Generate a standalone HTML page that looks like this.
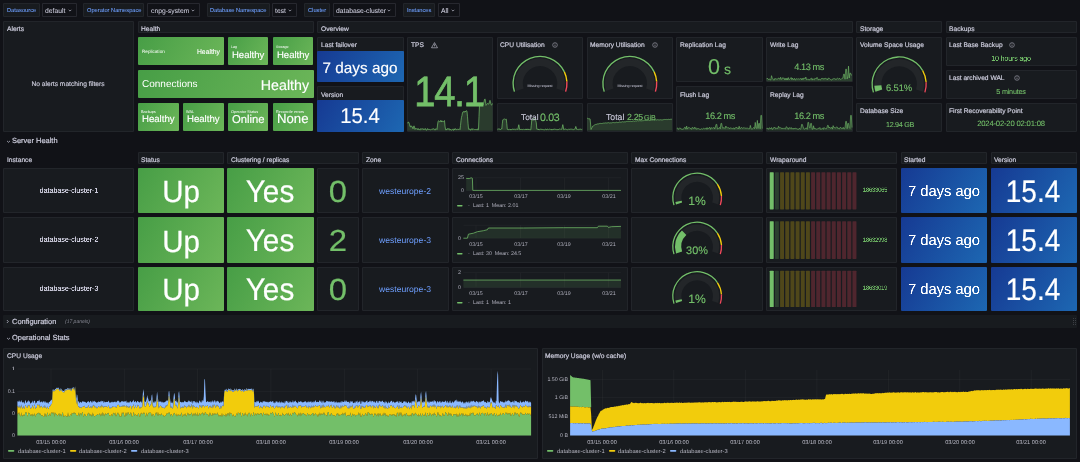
<!DOCTYPE html>
<html><head><meta charset="utf-8"><style>
html,body{margin:0;padding:0;width:1080px;height:462px;overflow:hidden;background:#111217;}
body{position:relative;font-family:"Liberation Sans",sans-serif;-webkit-font-smoothing:antialiased;}
#root{position:absolute;left:0;top:0;width:1080px;height:462px;will-change:transform;}
.p,.vl,.vd,.t,.s{position:absolute;box-sizing:border-box;}
.p{background:#181b1f;border:1px solid rgba(204,204,220,0.06);border-radius:1px;}
.vl{background:#181b1f;border:1px solid rgba(204,204,220,0.06);border-radius:1px;}
.vd{background:#111217;border:1px solid rgba(204,204,220,0.12);border-radius:1px;}
.t{white-space:nowrap;line-height:1;text-rendering:geometricPrecision;}
.s{overflow:visible;}
</style></head><body>
<div id="root"><div class="vl" style="left:3px;top:3px;width:36.7px;height:14px;"></div><div class="t" style="left:6.7px;top:6.52px;font-size:22.8px;color:#6e9fff;transform:scale(0.25,0.25);transform-origin:0 0;-webkit-text-stroke:0.32px #6e9fff;">Datasource</div><div class="vd" style="left:41.5px;top:3px;width:35.1px;height:14px;"></div><div class="t" style="left:44.9px;top:6.59px;font-size:27px;color:#ccccdc;transform:scale(0.25,0.25);transform-origin:0 0;-webkit-text-stroke:0.2px #ccccdc;">default</div><svg class="s" style="left:67.6px;top:8.5px;" width="4" height="3" viewBox="0 0 4 3"><path d="M0.7 0.8 L2 2.1 L3.3 0.8" fill="none" stroke="#ccccdc" stroke-width="0.65"/></svg><div class="vl" style="left:83.3px;top:3px;width:61.1px;height:14px;"></div><div class="t" style="left:87px;top:6.52px;font-size:22.8px;color:#6e9fff;transform:scale(0.25,0.25);transform-origin:0 0;-webkit-text-stroke:0.32px #6e9fff;">Operator Namespace</div><div class="vd" style="left:147.4px;top:3px;width:52.3px;height:14px;"></div><div class="t" style="left:150.8px;top:6.59px;font-size:27px;color:#ccccdc;transform:scale(0.25,0.25);transform-origin:0 0;-webkit-text-stroke:0.2px #ccccdc;">cnpg-system</div><svg class="s" style="left:190.7px;top:8.5px;" width="4" height="3" viewBox="0 0 4 3"><path d="M0.7 0.8 L2 2.1 L3.3 0.8" fill="none" stroke="#ccccdc" stroke-width="0.65"/></svg><div class="vl" style="left:206.7px;top:3px;width:62.9px;height:14px;"></div><div class="t" style="left:210.4px;top:6.52px;font-size:22.8px;color:#6e9fff;transform:scale(0.25,0.25);transform-origin:0 0;-webkit-text-stroke:0.32px #6e9fff;">Database Namespace</div><div class="vd" style="left:271.6px;top:3px;width:25.7px;height:14px;"></div><div class="t" style="left:275px;top:6.59px;font-size:27px;color:#ccccdc;transform:scale(0.25,0.25);transform-origin:0 0;-webkit-text-stroke:0.2px #ccccdc;">test</div><svg class="s" style="left:288.3px;top:8.5px;" width="4" height="3" viewBox="0 0 4 3"><path d="M0.7 0.8 L2 2.1 L3.3 0.8" fill="none" stroke="#ccccdc" stroke-width="0.65"/></svg><div class="vl" style="left:304.2px;top:3px;width:26.3px;height:14px;"></div><div class="t" style="left:307.9px;top:6.52px;font-size:22.8px;color:#6e9fff;transform:scale(0.25,0.25);transform-origin:0 0;-webkit-text-stroke:0.32px #6e9fff;">Cluster</div><div class="vd" style="left:332.5px;top:3px;width:63.8px;height:14px;"></div><div class="t" style="left:335.9px;top:6.59px;font-size:27px;color:#ccccdc;transform:scale(0.25,0.25);transform-origin:0 0;-webkit-text-stroke:0.2px #ccccdc;">database-cluster</div><svg class="s" style="left:387.3px;top:8.5px;" width="4" height="3" viewBox="0 0 4 3"><path d="M0.7 0.8 L2 2.1 L3.3 0.8" fill="none" stroke="#ccccdc" stroke-width="0.65"/></svg><div class="vl" style="left:403.3px;top:3px;width:32.2px;height:14px;"></div><div class="t" style="left:407px;top:6.52px;font-size:22.8px;color:#6e9fff;transform:scale(0.25,0.25);transform-origin:0 0;-webkit-text-stroke:0.32px #6e9fff;">Instances</div><div class="vd" style="left:437.5px;top:3px;width:22px;height:14px;"></div><div class="t" style="left:440.9px;top:6.59px;font-size:27px;color:#ccccdc;transform:scale(0.25,0.25);transform-origin:0 0;-webkit-text-stroke:0.2px #ccccdc;">All</div><svg class="s" style="left:450.5px;top:8.5px;" width="4" height="3" viewBox="0 0 4 3"><path d="M0.7 0.8 L2 2.1 L3.3 0.8" fill="none" stroke="#ccccdc" stroke-width="0.65"/></svg><div class="p" style="left:3px;top:20.5px;width:131.37px;height:111.1px;"></div><div class="t" style="left:6.6px;top:24.89px;font-size:26.6px;color:#ccccdc;transform:scale(0.25,0.25);transform-origin:0 0;-webkit-text-stroke:0.8px #ccccdc;">Alerts</div><div class="t" style="left:-1132.21px;width:2400px;text-align:center;top:79.64px;font-size:26.6px;color:#ccccdc;transform:scale(0.25,0.25);transform-origin:50% 0;-webkit-text-stroke:0.6px #ccccdc;">No alerts matching filters</div><div class="p" style="left:137.67px;top:20.5px;width:176.26px;height:12.5px;"></div><div class="t" style="left:141.27px;top:24.89px;font-size:26.6px;color:#ccccdc;transform:scale(0.25,0.25);transform-origin:0 0;-webkit-text-stroke:0.8px #ccccdc;">Health</div><div class="p" style="left:317.23px;top:20.5px;width:535.38px;height:12.5px;"></div><div class="t" style="left:320.83px;top:24.89px;font-size:26.6px;color:#ccccdc;transform:scale(0.25,0.25);transform-origin:0 0;-webkit-text-stroke:0.8px #ccccdc;">Overview</div><div class="p" style="left:855.91px;top:20.5px;width:86.48px;height:12.5px;"></div><div class="t" style="left:859.51px;top:24.89px;font-size:26.6px;color:#ccccdc;transform:scale(0.25,0.25);transform-origin:0 0;-webkit-text-stroke:0.8px #ccccdc;">Storage</div><div class="p" style="left:945.69px;top:20.5px;width:131.37px;height:12.5px;"></div><div class="t" style="left:949.29px;top:24.89px;font-size:26.6px;color:#ccccdc;transform:scale(0.25,0.25);transform-origin:0 0;-webkit-text-stroke:0.8px #ccccdc;">Backups</div><div class="p" style="left:137.97px;top:37px;width:85.88px;height:28.1px;background:linear-gradient(120deg,#479e46,#6cb659);border:none;"></div><div class="t" style="left:141.97px;top:49.33px;font-size:18.4px;color:#ffffff;transform:scale(0.25,0.25);transform-origin:0 0;">Replication</div><div class="t" style="left:-2179.75px;width:2400px;text-align:right;top:47.82px;font-size:27.2px;color:#ffffff;transform:scale(0.25,0.25);transform-origin:100% 0;-webkit-text-stroke:0.4px #ffffff;">Healthy</div><div class="p" style="left:228.05px;top:37px;width:40.39px;height:28.1px;background:linear-gradient(120deg,#479e46,#6cb659);border:none;"></div><div class="t" style="left:231.15px;top:44.98px;font-size:14.4px;color:#ffffff;transform:scale(0.25,0.25);transform-origin:0 0;">Lag</div><div class="t" style="left:231.85px;top:49.5px;font-size:38px;color:#ffffff;transform:scale(0.25,0.25);transform-origin:0 0;-webkit-text-stroke:0.6px #ffffff;">Healthy</div><div class="p" style="left:272.94px;top:37px;width:40.39px;height:28.1px;background:linear-gradient(120deg,#479e46,#6cb659);border:none;"></div><div class="t" style="left:276.04px;top:44.98px;font-size:14.4px;color:#ffffff;transform:scale(0.25,0.25);transform-origin:0 0;">Storage</div><div class="t" style="left:276.74px;top:49.5px;font-size:38px;color:#ffffff;transform:scale(0.25,0.25);transform-origin:0 0;-webkit-text-stroke:0.6px #ffffff;">Healthy</div><div class="p" style="left:137.97px;top:69.9px;width:175.66px;height:28.1px;background:linear-gradient(120deg,#479e46,#6cb659);border:none;"></div><div class="t" style="left:141.97px;top:79.3px;font-size:40px;color:#ffffff;transform:scale(0.25,0.25);transform-origin:0 0;">Connections</div><div class="t" style="left:-2091.27px;width:2400px;text-align:right;top:77.98px;font-size:56.8px;color:#ffffff;transform:scale(0.25,0.25);transform-origin:100% 0;-webkit-text-stroke:0.6px #ffffff;">Healthy</div><div class="p" style="left:138.27px;top:102.8px;width:40.39px;height:28px;background:linear-gradient(120deg,#479e46,#6cb659);border:none;"></div><div class="t" style="left:141.37px;top:110.16px;font-size:15.4px;color:#ffffff;transform:scale(0.25,0.25);transform-origin:0 0;">Backups</div><div class="t" style="left:142.07px;top:113.85px;font-size:38.4px;color:#ffffff;transform:scale(0.25,0.25);transform-origin:0 0;-webkit-text-stroke:0.6px #ffffff;">Healthy</div><div class="p" style="left:183.16px;top:102.8px;width:40.39px;height:28px;background:linear-gradient(120deg,#479e46,#6cb659);border:none;"></div><div class="t" style="left:186.26px;top:110.16px;font-size:15.4px;color:#ffffff;transform:scale(0.25,0.25);transform-origin:0 0;">WAL</div><div class="t" style="left:186.96px;top:113.85px;font-size:38.4px;color:#ffffff;transform:scale(0.25,0.25);transform-origin:0 0;-webkit-text-stroke:0.6px #ffffff;">Healthy</div><div class="p" style="left:228.05px;top:102.8px;width:40.39px;height:28px;background:linear-gradient(120deg,#479e46,#6cb659);border:none;"></div><div class="t" style="left:231.15px;top:110.16px;font-size:15.4px;color:#ffffff;transform:scale(0.25,0.25);transform-origin:0 0;">Operator Status</div><div class="t" style="left:231.85px;top:112.99px;font-size:45.2px;color:#ffffff;transform:scale(0.25,0.25);transform-origin:0 0;-webkit-text-stroke:0.6px #ffffff;">Online</div><div class="p" style="left:272.94px;top:102.8px;width:40.39px;height:28px;background:linear-gradient(120deg,#479e46,#6cb659);border:none;"></div><div class="t" style="left:276.04px;top:110.16px;font-size:15.4px;color:#ffffff;transform:scale(0.25,0.25);transform-origin:0 0;">Reconcile errors</div><div class="t" style="left:276.74px;top:112.03px;font-size:52.8px;color:#ffffff;transform:scale(0.25,0.25);transform-origin:0 0;-webkit-text-stroke:0.6px #ffffff;">None</div><div class="p" style="left:317.23px;top:37px;width:86.48px;height:45.35px;"></div><div class="t" style="left:320.83px;top:41.39px;font-size:26.6px;color:#ccccdc;transform:scale(0.25,0.25);transform-origin:0 0;-webkit-text-stroke:0.8px #ccccdc;">Last failover</div><div class="p" style="left:317.23px;top:51.1px;width:86.48px;height:31.25px;background:linear-gradient(120deg,#163a93,#1d67b2);border:none;"></div><div class="t" style="left:-839.93px;width:2400px;text-align:center;top:59.7px;font-size:61.2px;color:#ffffff;transform:scale(0.25,0.25);transform-origin:50% 0;-webkit-text-stroke:0.6px #ffffff;">7 days ago</div><div class="p" style="left:317.23px;top:86.35px;width:86.48px;height:45.25px;"></div><div class="t" style="left:320.83px;top:90.74px;font-size:26.6px;color:#ccccdc;transform:scale(0.25,0.25);transform-origin:0 0;-webkit-text-stroke:0.8px #ccccdc;">Version</div><div class="p" style="left:317.23px;top:100.45px;width:86.48px;height:31.15px;background:linear-gradient(120deg,#163a93,#1d67b2);border:none;"></div><div class="t" style="left:-839.73px;width:2400px;text-align:center;top:105.02px;font-size:85.6px;color:#ffffff;transform:scale(0.2375,0.25);transform-origin:50% 0;-webkit-text-stroke:0.6px #ffffff;">15.4</div><div class="p" style="left:407.01px;top:37px;width:86.48px;height:94.6px;"></div><div class="t" style="left:410.61px;top:41.39px;font-size:26.6px;color:#ccccdc;transform:scale(0.25,0.25);transform-origin:0 0;-webkit-text-stroke:0.8px #ccccdc;">TPS</div><svg class="s" style="left:430.51px;top:41.8px;" width="7" height="6.4" viewBox="0 0 7 6.4"><path d="M3.5 0.6L6.5 5.8H0.5Z" fill="none" stroke="#ccccdc" stroke-width="0.6" stroke-linejoin="round"/><path d="M3.5 2.3V4M3.5 4.6V5" stroke="#ccccdc" stroke-width="0.6"/></svg><svg class="s" style="left:0;top:0" width="1080" height="462"><path d="M407.51 123.27 L408.01 122.22 L408.51 122.03 L409.01 122.95 L409.51 124.24 L410.01 126.58 L410.51 126.93 L411.01 125.69 L411.51 126.98 L412.01 127.28 L412.51 126.91 L413.01 128.85 L413.51 126.69 L414.01 125.84 L414.51 127.05 L415.01 129.43 L415.51 128.61 L416.01 128.24 L416.51 128.91 L417.01 128.57 L417.51 128.74 L418.01 129.88 L418.51 128.69 L419.01 129.04 L419.51 129.61 L420.01 130.14 L420.51 128.65 L421.01 129.37 L421.51 128.93 L422.01 128.65 L422.51 128.96 L423.01 128.59 L423.51 129.55 L424.01 128.83 L424.51 129.48 L425.01 128.6 L425.51 128.72 L426.01 130.13 L426.51 130.07 L427.01 129.93 L427.51 128.59 L428.01 129.56 L428.51 129.22 L429.01 129.82 L429.51 129.45 L430.01 129.68 L430.51 129.75 L431.01 129.34 L431.51 129.35 L432.01 128.78 L432.51 129.19 L433.01 128.76 L433.51 128.9 L434.01 128.66 L434.51 129.25 L435.01 130.17 L435.51 128.92 L436.01 128.75 L436.51 128.86 L437.01 129.48 L437.51 125.07 L438.01 121.82 L438.51 120.7 L439.01 121.17 L439.51 121.69 L440.01 122.09 L440.51 120.66 L441.01 120.42 L441.51 122.04 L442.01 120.76 L442.51 121.46 L443.01 121.93 L443.51 121.67 L444.01 120.82 L444.51 120.63 L445.01 126.12 L445.51 129.09 L446.01 130.13 L446.51 128.93 L447.01 129.64 L447.51 128.66 L448.01 128.49 L448.51 129.35 L449.01 128.48 L449.51 129.73 L450.01 130.15 L450.51 129.22 L451.01 130.26 L451.51 129.97 L452.01 129.6 L452.51 129.25 L453.01 130.07 L453.51 130.29 L454.01 128.81 L454.51 129.82 L455.01 128.67 L455.51 128.79 L456.01 129.74 L456.51 129.6 L457.01 129.5 L457.51 129.29 L458.01 129.39 L458.51 129.46 L459.01 129.36 L459.51 128.8 L460.01 129.59 L460.51 125.46 L461.01 120.67 L461.51 117.27 L462.01 115.49 L462.51 112.61 L463.01 111.76 L463.51 111.59 L464.01 112.43 L464.51 111.58 L465.01 111.16 L465.51 112.04 L466.01 110.84 L466.51 110.69 L467.01 111.59 L467.51 116.74 L468.01 123.19 L468.51 128.98 L469.01 129.57 L469.51 128.93 L470.01 128.87 L470.51 130.16 L471.01 130.09 L471.51 128.98 L472.01 128.47 L472.51 129.75 L473.01 129.38 L473.51 129.13 L474.01 129.62 L474.51 129.54 L475.01 129.64 L475.51 129.54 L476.01 129.13 L476.51 129.66 L477.01 129.52 L477.51 128.81 L478.01 130.15 L478.51 129.18 L479.01 116.63 L479.51 105.14 L480.01 105.23 L480.51 104.11 L481.01 105.06 L481.51 105.08 L482.01 104.56 L482.51 104.01 L483.01 105.02 L483.51 103.25 L484.01 101.85 L484.51 99.57 L485.01 98.91 L485.51 101.16 L486.01 105.4 L486.51 104.84 L487.01 104.03 L487.51 103.36 L488.01 103.89 L488.51 104.04 L489.01 103.98 L489.51 101.5 L490.01 100.36 L490.51 101.75 L491.01 104.19 L491.51 105.12 L492.01 104.69 L492.51 103.49 L492.51 130.8 L407.51 130.8 Z" fill="rgba(115,191,105,0.2)"/><path d="M407.51 123.27 L408.01 122.22 L408.51 122.03 L409.01 122.95 L409.51 124.24 L410.01 126.58 L410.51 126.93 L411.01 125.69 L411.51 126.98 L412.01 127.28 L412.51 126.91 L413.01 128.85 L413.51 126.69 L414.01 125.84 L414.51 127.05 L415.01 129.43 L415.51 128.61 L416.01 128.24 L416.51 128.91 L417.01 128.57 L417.51 128.74 L418.01 129.88 L418.51 128.69 L419.01 129.04 L419.51 129.61 L420.01 130.14 L420.51 128.65 L421.01 129.37 L421.51 128.93 L422.01 128.65 L422.51 128.96 L423.01 128.59 L423.51 129.55 L424.01 128.83 L424.51 129.48 L425.01 128.6 L425.51 128.72 L426.01 130.13 L426.51 130.07 L427.01 129.93 L427.51 128.59 L428.01 129.56 L428.51 129.22 L429.01 129.82 L429.51 129.45 L430.01 129.68 L430.51 129.75 L431.01 129.34 L431.51 129.35 L432.01 128.78 L432.51 129.19 L433.01 128.76 L433.51 128.9 L434.01 128.66 L434.51 129.25 L435.01 130.17 L435.51 128.92 L436.01 128.75 L436.51 128.86 L437.01 129.48 L437.51 125.07 L438.01 121.82 L438.51 120.7 L439.01 121.17 L439.51 121.69 L440.01 122.09 L440.51 120.66 L441.01 120.42 L441.51 122.04 L442.01 120.76 L442.51 121.46 L443.01 121.93 L443.51 121.67 L444.01 120.82 L444.51 120.63 L445.01 126.12 L445.51 129.09 L446.01 130.13 L446.51 128.93 L447.01 129.64 L447.51 128.66 L448.01 128.49 L448.51 129.35 L449.01 128.48 L449.51 129.73 L450.01 130.15 L450.51 129.22 L451.01 130.26 L451.51 129.97 L452.01 129.6 L452.51 129.25 L453.01 130.07 L453.51 130.29 L454.01 128.81 L454.51 129.82 L455.01 128.67 L455.51 128.79 L456.01 129.74 L456.51 129.6 L457.01 129.5 L457.51 129.29 L458.01 129.39 L458.51 129.46 L459.01 129.36 L459.51 128.8 L460.01 129.59 L460.51 125.46 L461.01 120.67 L461.51 117.27 L462.01 115.49 L462.51 112.61 L463.01 111.76 L463.51 111.59 L464.01 112.43 L464.51 111.58 L465.01 111.16 L465.51 112.04 L466.01 110.84 L466.51 110.69 L467.01 111.59 L467.51 116.74 L468.01 123.19 L468.51 128.98 L469.01 129.57 L469.51 128.93 L470.01 128.87 L470.51 130.16 L471.01 130.09 L471.51 128.98 L472.01 128.47 L472.51 129.75 L473.01 129.38 L473.51 129.13 L474.01 129.62 L474.51 129.54 L475.01 129.64 L475.51 129.54 L476.01 129.13 L476.51 129.66 L477.01 129.52 L477.51 128.81 L478.01 130.15 L478.51 129.18 L479.01 116.63 L479.51 105.14 L480.01 105.23 L480.51 104.11 L481.01 105.06 L481.51 105.08 L482.01 104.56 L482.51 104.01 L483.01 105.02 L483.51 103.25 L484.01 101.85 L484.51 99.57 L485.01 98.91 L485.51 101.16 L486.01 105.4 L486.51 104.84 L487.01 104.03 L487.51 103.36 L488.01 103.89 L488.51 104.04 L489.01 103.98 L489.51 101.5 L490.01 100.36 L490.51 101.75 L491.01 104.19 L491.51 105.12 L492.01 104.69 L492.51 103.49" fill="none" stroke="#73bf69" stroke-width="0.7" stroke-linejoin="round"/></svg><div class="t" style="left:-750.95px;width:2400px;text-align:center;top:69.69px;font-size:169.6px;color:#73bf69;transform:scale(0.2250,0.25);transform-origin:50% 0;letter-spacing:-5.2px;-webkit-text-stroke:3px #73bf69;">14.1</div><div class="p" style="left:496.79px;top:37px;width:86.48px;height:61.8px;"></div><div class="t" style="left:500.39px;top:41.39px;font-size:26.6px;color:#ccccdc;transform:scale(0.25,0.25);transform-origin:0 0;-webkit-text-stroke:0.8px #ccccdc;">CPU Utilisation</div><svg class="s" style="left:552.09px;top:42px;" width="6" height="6" viewBox="0 0 6 6"><circle cx="3" cy="3" r="2.35" fill="none" stroke="#ccccdc" stroke-width="0.45"/><path d="M3 2.7V4.3" stroke="#ccccdc" stroke-width="0.5"/><circle cx="3" cy="1.85" r="0.32" fill="#ccccdc"/></svg><svg class="s" style="left:0;top:0" width="1080" height="462"><path d="M516.25 91.03 A25 25 0 1 1 563.81 91.03 L556.39 88.62 A17.2 17.2 0 1 0 523.67 88.62 Z" fill="#232629"/><path d="M513.78 91.83 A27.6 27.6 0 0 1 565 71.55 L563.74 72.14 A26.2 26.2 0 0 0 515.11 91.4 Z" fill="#73bf69"/><path d="M565 71.55 A27.6 27.6 0 0 1 567.58 81.57 L566.18 81.65 A26.2 26.2 0 0 0 563.74 72.14 Z" fill="#f2cc0c"/><path d="M567.58 81.57 A27.6 27.6 0 0 1 566.28 91.83 L564.95 91.4 A26.2 26.2 0 0 0 566.18 81.65 Z" fill="#f2495c"/></svg><div class="t" style="left:-659.97px;width:2400px;text-align:center;top:83.68px;font-size:14.4px;color:#ccccdc;transform:scale(0.25,0.25);transform-origin:50% 0;">Missing request</div><div class="p" style="left:586.57px;top:37px;width:86.48px;height:61.8px;"></div><div class="t" style="left:590.17px;top:41.39px;font-size:26.6px;color:#ccccdc;transform:scale(0.25,0.25);transform-origin:0 0;-webkit-text-stroke:0.8px #ccccdc;">Memory Utilisation</div><svg class="s" style="left:652.07px;top:42px;" width="6" height="6" viewBox="0 0 6 6"><circle cx="3" cy="3" r="2.35" fill="none" stroke="#ccccdc" stroke-width="0.45"/><path d="M3 2.7V4.3" stroke="#ccccdc" stroke-width="0.5"/><circle cx="3" cy="1.85" r="0.32" fill="#ccccdc"/></svg><svg class="s" style="left:0;top:0" width="1080" height="462"><path d="M606.03 91.03 A25 25 0 1 1 653.59 91.03 L646.17 88.62 A17.2 17.2 0 1 0 613.45 88.62 Z" fill="#232629"/><path d="M603.56 91.83 A27.6 27.6 0 0 1 654.78 71.55 L653.52 72.14 A26.2 26.2 0 0 0 604.89 91.4 Z" fill="#73bf69"/><path d="M654.78 71.55 A27.6 27.6 0 0 1 657.36 81.57 L655.96 81.65 A26.2 26.2 0 0 0 653.52 72.14 Z" fill="#f2cc0c"/><path d="M657.36 81.57 A27.6 27.6 0 0 1 656.06 91.83 L654.73 91.4 A26.2 26.2 0 0 0 655.96 81.65 Z" fill="#f2495c"/></svg><div class="t" style="left:-570.19px;width:2400px;text-align:center;top:83.68px;font-size:14.4px;color:#ccccdc;transform:scale(0.25,0.25);transform-origin:50% 0;">Missing request</div><div class="p" style="left:496.79px;top:102.8px;width:86.48px;height:28.8px;"></div><svg class="s" style="left:0;top:0" width="1080" height="462"><path d="M497.29 129.28 L497.79 129.14 L498.29 129.06 L498.79 128.89 L499.29 129.07 L499.79 128.87 L500.29 129.74 L500.79 129.28 L501.29 128.78 L501.79 129.05 L502.29 123.9 L502.79 119.79 L503.29 119.36 L503.79 119.51 L504.29 119.14 L504.79 119.04 L505.29 119.53 L505.79 119.25 L506.29 119.12 L506.79 123.73 L507.29 129.13 L507.79 129.74 L508.29 129.1 L508.79 129.76 L509.29 129.28 L509.79 129.77 L510.29 129.9 L510.79 129.03 L511.29 129.69 L511.79 129.68 L512.29 128.92 L512.79 129.03 L513.29 129.61 L513.79 128.94 L514.29 129.36 L514.79 129.22 L515.29 129.7 L515.79 128.96 L516.29 129.21 L516.79 128.93 L517.29 129.01 L517.79 129.6 L518.29 127.04 L518.79 124.73 L519.29 127.25 L519.79 129.83 L520.29 129.6 L520.79 129.3 L521.29 129.9 L521.79 129.22 L522.29 129.56 L522.79 129.59 L523.29 129.08 L523.79 129.42 L524.29 129.58 L524.79 129.42 L525.29 129.2 L525.79 129.84 L526.29 128.92 L526.79 129.88 L527.29 129.15 L527.79 129.06 L528.29 129.88 L528.79 129.11 L529.29 129.53 L529.79 129.32 L530.29 129.89 L530.79 129.85 L531.29 125.22 L531.79 119.94 L532.29 120.37 L532.79 119.48 L533.29 118.97 L533.79 118.62 L534.29 118.89 L534.79 118.55 L535.29 119.71 L535.79 120.79 L536.29 122.79 L536.79 129.15 L537.29 129.1 L537.79 129.04 L538.29 129.86 L538.79 128.95 L539.29 129.81 L539.79 129.56 L540.29 129.29 L540.79 128.98 L541.29 129.56 L541.79 128.98 L542.29 129.35 L542.79 129.59 L543.29 129.58 L543.79 129.72 L544.29 129.82 L544.79 129.75 L545.29 129.21 L545.79 128.9 L546.29 129.74 L546.79 129.85 L547.29 128.91 L547.79 129.37 L548.29 129.49 L548.79 129.66 L549.29 129.31 L549.79 129.07 L550.29 129.44 L550.79 129.48 L551.29 129.84 L551.79 128.98 L552.29 129.87 L552.79 129.41 L553.29 129.06 L553.79 129.77 L554.29 129.17 L554.79 128.95 L555.29 129.27 L555.79 129.11 L556.29 129.79 L556.79 129.47 L557.29 129.75 L557.79 129.06 L558.29 129.61 L558.79 129.45 L559.29 128.9 L559.79 129.05 L560.29 128.92 L560.79 129.45 L561.29 129.41 L561.79 129.17 L562.29 126.92 L562.79 124.61 L563.29 127 L563.79 129.75 L564.29 129.52 L564.79 128.91 L565.29 128.94 L565.79 129.27 L566.29 129.4 L566.79 129.56 L567.29 129.81 L567.79 129.63 L568.29 129.12 L568.79 129.03 L569.29 129.54 L569.79 129.11 L570.29 129.13 L570.79 129.21 L571.29 129.24 L571.79 129.14 L572.29 129.54 L572.79 129.2 L573.29 129.62 L573.79 129.41 L574.29 129.13 L574.79 129.21 L575.29 128.36 L575.79 126.45 L576.29 128 L576.79 129.32 L577.29 129.89 L577.79 129.35 L578.29 129.65 L578.79 129.23 L579.29 129.44 L579.79 129.08 L580.29 129.25 L580.79 129.1 L581.29 129.55 L581.79 129.26 L582.29 129.16 L582.29 130.4 L497.29 130.4 Z" fill="rgba(115,191,105,0.2)"/><path d="M497.29 129.28 L497.79 129.14 L498.29 129.06 L498.79 128.89 L499.29 129.07 L499.79 128.87 L500.29 129.74 L500.79 129.28 L501.29 128.78 L501.79 129.05 L502.29 123.9 L502.79 119.79 L503.29 119.36 L503.79 119.51 L504.29 119.14 L504.79 119.04 L505.29 119.53 L505.79 119.25 L506.29 119.12 L506.79 123.73 L507.29 129.13 L507.79 129.74 L508.29 129.1 L508.79 129.76 L509.29 129.28 L509.79 129.77 L510.29 129.9 L510.79 129.03 L511.29 129.69 L511.79 129.68 L512.29 128.92 L512.79 129.03 L513.29 129.61 L513.79 128.94 L514.29 129.36 L514.79 129.22 L515.29 129.7 L515.79 128.96 L516.29 129.21 L516.79 128.93 L517.29 129.01 L517.79 129.6 L518.29 127.04 L518.79 124.73 L519.29 127.25 L519.79 129.83 L520.29 129.6 L520.79 129.3 L521.29 129.9 L521.79 129.22 L522.29 129.56 L522.79 129.59 L523.29 129.08 L523.79 129.42 L524.29 129.58 L524.79 129.42 L525.29 129.2 L525.79 129.84 L526.29 128.92 L526.79 129.88 L527.29 129.15 L527.79 129.06 L528.29 129.88 L528.79 129.11 L529.29 129.53 L529.79 129.32 L530.29 129.89 L530.79 129.85 L531.29 125.22 L531.79 119.94 L532.29 120.37 L532.79 119.48 L533.29 118.97 L533.79 118.62 L534.29 118.89 L534.79 118.55 L535.29 119.71 L535.79 120.79 L536.29 122.79 L536.79 129.15 L537.29 129.1 L537.79 129.04 L538.29 129.86 L538.79 128.95 L539.29 129.81 L539.79 129.56 L540.29 129.29 L540.79 128.98 L541.29 129.56 L541.79 128.98 L542.29 129.35 L542.79 129.59 L543.29 129.58 L543.79 129.72 L544.29 129.82 L544.79 129.75 L545.29 129.21 L545.79 128.9 L546.29 129.74 L546.79 129.85 L547.29 128.91 L547.79 129.37 L548.29 129.49 L548.79 129.66 L549.29 129.31 L549.79 129.07 L550.29 129.44 L550.79 129.48 L551.29 129.84 L551.79 128.98 L552.29 129.87 L552.79 129.41 L553.29 129.06 L553.79 129.77 L554.29 129.17 L554.79 128.95 L555.29 129.27 L555.79 129.11 L556.29 129.79 L556.79 129.47 L557.29 129.75 L557.79 129.06 L558.29 129.61 L558.79 129.45 L559.29 128.9 L559.79 129.05 L560.29 128.92 L560.79 129.45 L561.29 129.41 L561.79 129.17 L562.29 126.92 L562.79 124.61 L563.29 127 L563.79 129.75 L564.29 129.52 L564.79 128.91 L565.29 128.94 L565.79 129.27 L566.29 129.4 L566.79 129.56 L567.29 129.81 L567.79 129.63 L568.29 129.12 L568.79 129.03 L569.29 129.54 L569.79 129.11 L570.29 129.13 L570.79 129.21 L571.29 129.24 L571.79 129.14 L572.29 129.54 L572.79 129.2 L573.29 129.62 L573.79 129.41 L574.29 129.13 L574.79 129.21 L575.29 128.36 L575.79 126.45 L576.29 128 L576.79 129.32 L577.29 129.89 L577.79 129.35 L578.29 129.65 L578.79 129.23 L579.29 129.44 L579.79 129.08 L580.29 129.25 L580.79 129.1 L581.29 129.55 L581.79 129.26 L582.29 129.16" fill="none" stroke="#73bf69" stroke-width="0.7" stroke-linejoin="round"/></svg><div class="t" style="left:520.79px;top:113.11px;font-size:33.2px;color:#ccccdc;transform:scale(0.25,0.25);transform-origin:0 0;-webkit-text-stroke:0.4px #ccccdc;">Total</div><div class="t" style="left:539.99px;top:111.95px;font-size:42.4px;color:#73bf69;transform:scale(0.25,0.25);transform-origin:0 0;letter-spacing:-1.2px;-webkit-text-stroke:0.48px #73bf69;">0.03</div><div class="p" style="left:586.57px;top:102.8px;width:86.48px;height:28.8px;"></div><svg class="s" style="left:0;top:0" width="1080" height="462"><path d="M587.07 118.25 L587.57 118.32 L588.07 118.57 L588.57 118.77 L589.07 118.98 L589.57 118.74 L590.07 118.91 L590.57 124.02 L591.07 129.46 L591.57 128.26 L592.07 127.51 L592.57 126.25 L593.07 125.95 L593.57 125.78 L594.07 125.38 L594.57 124.98 L595.07 124.89 L595.57 124.37 L596.07 124.15 L596.57 124.32 L597.07 123.95 L597.57 123.91 L598.07 123.73 L598.57 123.88 L599.07 123.9 L599.57 123.45 L600.07 123.35 L600.57 123.43 L601.07 123.57 L601.57 123.49 L602.07 123.24 L602.57 123.38 L603.07 123.02 L603.57 123.17 L604.07 123.33 L604.57 123.07 L605.07 123.19 L605.57 122.87 L606.07 122.85 L606.57 123.02 L607.07 122.92 L607.57 122.86 L608.07 122.78 L608.57 122.66 L609.07 123.1 L609.57 122.91 L610.07 122.76 L610.57 122.87 L611.07 122.7 L611.57 122.92 L612.07 122.49 L612.57 122.64 L613.07 122.81 L613.57 122.51 L614.07 122.65 L614.57 122.68 L615.07 122.5 L615.57 122.64 L616.07 122.58 L616.57 122.22 L617.07 122.26 L617.57 122.57 L618.07 122.15 L618.57 122.49 L619.07 122.3 L619.57 121.97 L620.07 122.08 L620.57 122.2 L621.07 122.12 L621.57 122.08 L622.07 122.17 L622.57 121.7 L623.07 122.14 L623.57 121.91 L624.07 121.71 L624.57 121.85 L625.07 121.52 L625.57 121.85 L626.07 121.45 L626.57 121.45 L627.07 121.53 L627.57 121.38 L628.07 121.56 L628.57 121.33 L629.07 121.31 L629.57 121.42 L630.07 121.4 L630.57 121.25 L631.07 121.36 L631.57 121.48 L632.07 121.11 L632.57 121.32 L633.07 121.17 L633.57 120.98 L634.07 121.25 L634.57 121.29 L635.07 121.2 L635.57 120.93 L636.07 121.01 L636.57 121.02 L637.07 120.9 L637.57 120.64 L638.07 120.95 L638.57 120.84 L639.07 120.59 L639.57 120.69 L640.07 120.84 L640.57 120.71 L641.07 120.69 L641.57 120.83 L642.07 120.69 L642.57 120.7 L643.07 120.42 L643.57 120.64 L644.07 120.45 L644.57 120.26 L645.07 120.26 L645.57 120.51 L646.07 120.37 L646.57 120.49 L647.07 120.43 L647.57 120.36 L648.07 120.18 L648.57 120.08 L649.07 120.38 L649.57 120.5 L650.07 120.25 L650.57 120.42 L651.07 120.41 L651.57 120.01 L652.07 120.32 L652.57 119.99 L653.07 120.14 L653.57 119.83 L654.07 119.85 L654.57 120.22 L655.07 120.13 L655.57 119.73 L656.07 119.87 L656.57 119.94 L657.07 119.74 L657.57 119.71 L658.07 119.86 L658.57 119.85 L659.07 120.02 L659.57 119.88 L660.07 119.97 L660.57 119.71 L661.07 119.71 L661.57 119.92 L662.07 119.66 L662.57 119.91 L663.07 119.89 L663.57 119.61 L664.07 119.68 L664.57 119.45 L665.07 119.57 L665.57 119.52 L666.07 119.79 L666.57 119.42 L667.07 119.78 L667.57 119.5 L668.07 119.33 L668.57 119.32 L669.07 119.31 L669.57 119.52 L670.07 119.38 L670.57 119.32 L671.07 119.63 L671.57 119.21 L672.07 119.21 L672.07 130.4 L587.07 130.4 Z" fill="rgba(115,191,105,0.2)"/><path d="M587.07 118.25 L587.57 118.32 L588.07 118.57 L588.57 118.77 L589.07 118.98 L589.57 118.74 L590.07 118.91 L590.57 124.02 L591.07 129.46 L591.57 128.26 L592.07 127.51 L592.57 126.25 L593.07 125.95 L593.57 125.78 L594.07 125.38 L594.57 124.98 L595.07 124.89 L595.57 124.37 L596.07 124.15 L596.57 124.32 L597.07 123.95 L597.57 123.91 L598.07 123.73 L598.57 123.88 L599.07 123.9 L599.57 123.45 L600.07 123.35 L600.57 123.43 L601.07 123.57 L601.57 123.49 L602.07 123.24 L602.57 123.38 L603.07 123.02 L603.57 123.17 L604.07 123.33 L604.57 123.07 L605.07 123.19 L605.57 122.87 L606.07 122.85 L606.57 123.02 L607.07 122.92 L607.57 122.86 L608.07 122.78 L608.57 122.66 L609.07 123.1 L609.57 122.91 L610.07 122.76 L610.57 122.87 L611.07 122.7 L611.57 122.92 L612.07 122.49 L612.57 122.64 L613.07 122.81 L613.57 122.51 L614.07 122.65 L614.57 122.68 L615.07 122.5 L615.57 122.64 L616.07 122.58 L616.57 122.22 L617.07 122.26 L617.57 122.57 L618.07 122.15 L618.57 122.49 L619.07 122.3 L619.57 121.97 L620.07 122.08 L620.57 122.2 L621.07 122.12 L621.57 122.08 L622.07 122.17 L622.57 121.7 L623.07 122.14 L623.57 121.91 L624.07 121.71 L624.57 121.85 L625.07 121.52 L625.57 121.85 L626.07 121.45 L626.57 121.45 L627.07 121.53 L627.57 121.38 L628.07 121.56 L628.57 121.33 L629.07 121.31 L629.57 121.42 L630.07 121.4 L630.57 121.25 L631.07 121.36 L631.57 121.48 L632.07 121.11 L632.57 121.32 L633.07 121.17 L633.57 120.98 L634.07 121.25 L634.57 121.29 L635.07 121.2 L635.57 120.93 L636.07 121.01 L636.57 121.02 L637.07 120.9 L637.57 120.64 L638.07 120.95 L638.57 120.84 L639.07 120.59 L639.57 120.69 L640.07 120.84 L640.57 120.71 L641.07 120.69 L641.57 120.83 L642.07 120.69 L642.57 120.7 L643.07 120.42 L643.57 120.64 L644.07 120.45 L644.57 120.26 L645.07 120.26 L645.57 120.51 L646.07 120.37 L646.57 120.49 L647.07 120.43 L647.57 120.36 L648.07 120.18 L648.57 120.08 L649.07 120.38 L649.57 120.5 L650.07 120.25 L650.57 120.42 L651.07 120.41 L651.57 120.01 L652.07 120.32 L652.57 119.99 L653.07 120.14 L653.57 119.83 L654.07 119.85 L654.57 120.22 L655.07 120.13 L655.57 119.73 L656.07 119.87 L656.57 119.94 L657.07 119.74 L657.57 119.71 L658.07 119.86 L658.57 119.85 L659.07 120.02 L659.57 119.88 L660.07 119.97 L660.57 119.71 L661.07 119.71 L661.57 119.92 L662.07 119.66 L662.57 119.91 L663.07 119.89 L663.57 119.61 L664.07 119.68 L664.57 119.45 L665.07 119.57 L665.57 119.52 L666.07 119.79 L666.57 119.42 L667.07 119.78 L667.57 119.5 L668.07 119.33 L668.57 119.32 L669.07 119.31 L669.57 119.52 L670.07 119.38 L670.57 119.32 L671.07 119.63 L671.57 119.21 L672.07 119.21" fill="none" stroke="#73bf69" stroke-width="0.7" stroke-linejoin="round"/></svg><div class="t" style="left:606.07px;top:112.91px;font-size:34.8px;color:#ccccdc;transform:scale(0.25,0.25);transform-origin:0 0;-webkit-text-stroke:0.4px #ccccdc;">Total</div><div class="t" style="left:626.77px;top:112.86px;font-size:35.2px;color:#73bf69;transform:scale(0.25,0.25);transform-origin:0 0;letter-spacing:-1.4px;-webkit-text-stroke:0.48px #73bf69;">2.25</div><div class="t" style="left:644.17px;top:114.26px;font-size:28.8px;color:#73bf69;transform:scale(0.25,0.25);transform-origin:0 0;letter-spacing:-0.4px;-webkit-text-stroke:0.4px #73bf69;">GiB</div><div class="p" style="left:676.35px;top:37px;width:86.48px;height:45.35px;"></div><div class="t" style="left:679.95px;top:41.39px;font-size:26.6px;color:#ccccdc;transform:scale(0.25,0.25);transform-origin:0 0;-webkit-text-stroke:0.8px #ccccdc;">Replication Lag</div><div class="t" style="left:707.75px;top:55.74px;font-size:86px;color:#73bf69;transform:scale(0.25,0.25);transform-origin:0 0;-webkit-text-stroke:0.6px #73bf69;">0</div><div class="t" style="left:723.95px;top:62.23px;font-size:56px;color:#73bf69;transform:scale(0.25,0.25);transform-origin:0 0;-webkit-text-stroke:0.48px #73bf69;">s</div><div class="p" style="left:766.13px;top:37px;width:86.48px;height:45.35px;"></div><div class="t" style="left:769.73px;top:41.39px;font-size:26.6px;color:#ccccdc;transform:scale(0.25,0.25);transform-origin:0 0;-webkit-text-stroke:0.8px #ccccdc;">Write Lag</div><svg class="s" style="left:0;top:0" width="1080" height="462"><path d="M766.63 79.15 L767.33 78.12 L768.03 79.03 L768.73 79.74 L769.43 78.76 L770.13 79.94 L770.83 79.95 L771.53 75.68 L772.23 78.03 L772.93 78.8 L773.63 80.12 L774.33 80.02 L775.03 78.23 L775.73 79.18 L776.43 79.01 L777.13 79.05 L777.83 79.14 L778.53 77.96 L779.23 78.3 L779.93 79.46 L780.63 77.22 L781.33 79.27 L782.03 79.3 L782.73 77.66 L783.43 78.15 L784.13 77.99 L784.83 79.99 L785.53 78.44 L786.23 79.96 L786.93 78.03 L787.63 79.89 L788.33 77.54 L789.03 79.76 L789.73 79.17 L790.43 78.54 L791.13 77.47 L791.83 79.68 L792.53 78.01 L793.23 79.48 L793.93 79.69 L794.63 78.27 L795.33 79.93 L796.03 79.68 L796.73 78.45 L797.43 79.23 L798.13 78.87 L798.83 78.83 L799.53 79.15 L800.23 79.09 L800.93 78.24 L801.63 79.81 L802.33 78.35 L803.03 79.73 L803.73 78.08 L804.43 78.06 L805.13 78.82 L805.83 77.03 L806.53 79.63 L807.23 79.58 L807.93 78.84 L808.63 79.76 L809.33 80 L810.03 78.92 L810.73 78.8 L811.43 78.13 L812.13 80.11 L812.83 78.64 L813.53 79.34 L814.23 79.86 L814.93 78.19 L815.63 78.7 L816.33 78.86 L817.03 77.34 L817.73 78.61 L818.43 80.1 L819.13 79.09 L819.83 79.45 L820.53 79.98 L821.23 78.53 L821.93 78.53 L822.63 78.4 L823.33 79.38 L824.03 78.17 L824.73 79.23 L825.43 78.25 L826.13 78.78 L826.83 78.87 L827.53 79.97 L828.23 77.96 L828.93 78.55 L829.63 78.53 L830.33 79.18 L831.03 79.97 L831.73 80.08 L832.43 79.09 L833.13 78.61 L833.83 78.8 L834.53 78.68 L835.23 78.66 L835.93 79.78 L836.63 78.7 L837.33 78.19 L838.03 78.69 L838.73 79.2 L839.43 78.14 L840.13 79.3 L840.83 79.45 L841.53 79.06 L842.23 78.28 L842.93 78.06 L843.63 74.15 L844.33 74.15 L845.03 79.24 L845.73 69.15 L846.43 69.15 L847.13 79.06 L847.83 76.1 L848.53 66.15 L849.23 78 L849.93 73.15 L850.63 73.15 L851.33 75.15 L852.03 75.15 L852.03 81.15 L766.63 81.15 Z" fill="rgba(115,191,105,0.22)"/><path d="M766.63 79.15 L767.33 78.12 L768.03 79.03 L768.73 79.74 L769.43 78.76 L770.13 79.94 L770.83 79.95 L771.53 75.68 L772.23 78.03 L772.93 78.8 L773.63 80.12 L774.33 80.02 L775.03 78.23 L775.73 79.18 L776.43 79.01 L777.13 79.05 L777.83 79.14 L778.53 77.96 L779.23 78.3 L779.93 79.46 L780.63 77.22 L781.33 79.27 L782.03 79.3 L782.73 77.66 L783.43 78.15 L784.13 77.99 L784.83 79.99 L785.53 78.44 L786.23 79.96 L786.93 78.03 L787.63 79.89 L788.33 77.54 L789.03 79.76 L789.73 79.17 L790.43 78.54 L791.13 77.47 L791.83 79.68 L792.53 78.01 L793.23 79.48 L793.93 79.69 L794.63 78.27 L795.33 79.93 L796.03 79.68 L796.73 78.45 L797.43 79.23 L798.13 78.87 L798.83 78.83 L799.53 79.15 L800.23 79.09 L800.93 78.24 L801.63 79.81 L802.33 78.35 L803.03 79.73 L803.73 78.08 L804.43 78.06 L805.13 78.82 L805.83 77.03 L806.53 79.63 L807.23 79.58 L807.93 78.84 L808.63 79.76 L809.33 80 L810.03 78.92 L810.73 78.8 L811.43 78.13 L812.13 80.11 L812.83 78.64 L813.53 79.34 L814.23 79.86 L814.93 78.19 L815.63 78.7 L816.33 78.86 L817.03 77.34 L817.73 78.61 L818.43 80.1 L819.13 79.09 L819.83 79.45 L820.53 79.98 L821.23 78.53 L821.93 78.53 L822.63 78.4 L823.33 79.38 L824.03 78.17 L824.73 79.23 L825.43 78.25 L826.13 78.78 L826.83 78.87 L827.53 79.97 L828.23 77.96 L828.93 78.55 L829.63 78.53 L830.33 79.18 L831.03 79.97 L831.73 80.08 L832.43 79.09 L833.13 78.61 L833.83 78.8 L834.53 78.68 L835.23 78.66 L835.93 79.78 L836.63 78.7 L837.33 78.19 L838.03 78.69 L838.73 79.2 L839.43 78.14 L840.13 79.3 L840.83 79.45 L841.53 79.06 L842.23 78.28 L842.93 78.06 L843.63 74.15 L844.33 74.15 L845.03 79.24 L845.73 69.15 L846.43 69.15 L847.13 79.06 L847.83 76.1 L848.53 66.15 L849.23 78 L849.93 73.15 L850.63 73.15 L851.33 75.15 L852.03 75.15" fill="none" stroke="#73bf69" stroke-width="0.6" stroke-linejoin="round"/></svg><div class="t" style="left:-390.63px;width:2400px;text-align:center;top:61.75px;font-size:36.8px;color:#73bf69;transform:scale(0.25,0.25);transform-origin:50% 0;letter-spacing:-1.8px;-webkit-text-stroke:0.48px #73bf69;">4.13 ms</div><div class="p" style="left:676.35px;top:86.35px;width:86.48px;height:45.25px;"></div><div class="t" style="left:679.95px;top:90.74px;font-size:26.6px;color:#ccccdc;transform:scale(0.25,0.25);transform-origin:0 0;-webkit-text-stroke:0.8px #ccccdc;">Flush Lag</div><svg class="s" style="left:0;top:0" width="1080" height="462"><path d="M676.85 128.36 L677.55 127.93 L678.25 129.38 L678.95 128.8 L679.65 127.88 L680.35 128.17 L681.05 129.08 L681.75 129.04 L682.45 129.27 L683.15 129.24 L683.85 128.66 L684.55 127.36 L685.25 127.39 L685.95 129.2 L686.65 126.05 L687.35 129.1 L688.05 128.03 L688.75 127.35 L689.45 127.61 L690.15 128.48 L690.85 128.35 L691.55 129.33 L692.25 127.27 L692.95 127.94 L693.65 128.6 L694.35 127.21 L695.05 128.6 L695.75 127.62 L696.45 129.34 L697.15 128.45 L697.85 128.91 L698.55 128.55 L699.25 129.17 L699.95 129.01 L700.65 129.32 L701.35 128.64 L702.05 129.29 L702.75 128.94 L703.45 128.35 L704.15 128.34 L704.85 129.03 L705.55 128.6 L706.25 127.75 L706.95 129.39 L707.65 127.7 L708.35 128.75 L709.05 128.04 L709.75 127.2 L710.45 129.35 L711.15 127.67 L711.85 127.99 L712.55 128.24 L713.25 128.02 L713.95 127.32 L714.65 129.04 L715.35 127.48 L716.05 124.4 L716.75 124.4 L717.45 128.93 L718.15 128.84 L718.85 127.87 L719.55 127.45 L720.25 128.87 L720.95 123.4 L721.65 123.4 L722.35 127.28 L723.05 128.48 L723.75 127.42 L724.45 128.12 L725.15 128.59 L725.85 126.03 L726.55 127.41 L727.25 127.43 L727.95 128.22 L728.65 127.51 L729.35 128.71 L730.05 127.88 L730.75 128.03 L731.45 128.22 L732.15 128.53 L732.85 128.5 L733.55 127.89 L734.25 129.2 L734.95 127.87 L735.65 127.95 L736.35 127.13 L737.05 128.42 L737.75 127.93 L738.45 128.88 L739.15 126.24 L739.85 128.78 L740.55 128.45 L741.25 127.38 L741.95 127.86 L742.65 128.38 L743.35 127.55 L744.05 128.39 L744.75 127.57 L745.45 128.22 L746.15 128.53 L746.85 127.94 L747.55 128.18 L748.25 128.63 L748.95 128.69 L749.65 128.61 L750.35 125.4 L751.05 128.2 L751.75 129.3 L752.45 128.77 L753.15 128.08 L753.85 127.48 L754.55 128.69 L755.25 122.4 L755.95 128.06 L756.65 128.49 L757.35 120.4 L758.05 128.56 L758.75 123.4 L759.45 123.4 L760.15 128.84 L760.85 115.4 L761.55 115.4 L762.25 128.61 L762.25 130.4 L676.85 130.4 Z" fill="rgba(115,191,105,0.22)"/><path d="M676.85 128.36 L677.55 127.93 L678.25 129.38 L678.95 128.8 L679.65 127.88 L680.35 128.17 L681.05 129.08 L681.75 129.04 L682.45 129.27 L683.15 129.24 L683.85 128.66 L684.55 127.36 L685.25 127.39 L685.95 129.2 L686.65 126.05 L687.35 129.1 L688.05 128.03 L688.75 127.35 L689.45 127.61 L690.15 128.48 L690.85 128.35 L691.55 129.33 L692.25 127.27 L692.95 127.94 L693.65 128.6 L694.35 127.21 L695.05 128.6 L695.75 127.62 L696.45 129.34 L697.15 128.45 L697.85 128.91 L698.55 128.55 L699.25 129.17 L699.95 129.01 L700.65 129.32 L701.35 128.64 L702.05 129.29 L702.75 128.94 L703.45 128.35 L704.15 128.34 L704.85 129.03 L705.55 128.6 L706.25 127.75 L706.95 129.39 L707.65 127.7 L708.35 128.75 L709.05 128.04 L709.75 127.2 L710.45 129.35 L711.15 127.67 L711.85 127.99 L712.55 128.24 L713.25 128.02 L713.95 127.32 L714.65 129.04 L715.35 127.48 L716.05 124.4 L716.75 124.4 L717.45 128.93 L718.15 128.84 L718.85 127.87 L719.55 127.45 L720.25 128.87 L720.95 123.4 L721.65 123.4 L722.35 127.28 L723.05 128.48 L723.75 127.42 L724.45 128.12 L725.15 128.59 L725.85 126.03 L726.55 127.41 L727.25 127.43 L727.95 128.22 L728.65 127.51 L729.35 128.71 L730.05 127.88 L730.75 128.03 L731.45 128.22 L732.15 128.53 L732.85 128.5 L733.55 127.89 L734.25 129.2 L734.95 127.87 L735.65 127.95 L736.35 127.13 L737.05 128.42 L737.75 127.93 L738.45 128.88 L739.15 126.24 L739.85 128.78 L740.55 128.45 L741.25 127.38 L741.95 127.86 L742.65 128.38 L743.35 127.55 L744.05 128.39 L744.75 127.57 L745.45 128.22 L746.15 128.53 L746.85 127.94 L747.55 128.18 L748.25 128.63 L748.95 128.69 L749.65 128.61 L750.35 125.4 L751.05 128.2 L751.75 129.3 L752.45 128.77 L753.15 128.08 L753.85 127.48 L754.55 128.69 L755.25 122.4 L755.95 128.06 L756.65 128.49 L757.35 120.4 L758.05 128.56 L758.75 123.4 L759.45 123.4 L760.15 128.84 L760.85 115.4 L761.55 115.4 L762.25 128.61" fill="none" stroke="#73bf69" stroke-width="0.6" stroke-linejoin="round"/></svg><div class="t" style="left:-480.41px;width:2400px;text-align:center;top:111px;font-size:36.8px;color:#73bf69;transform:scale(0.25,0.25);transform-origin:50% 0;letter-spacing:-1.8px;-webkit-text-stroke:0.48px #73bf69;">16.2 ms</div><div class="p" style="left:766.13px;top:86.35px;width:86.48px;height:45.25px;"></div><div class="t" style="left:769.73px;top:90.74px;font-size:26.6px;color:#ccccdc;transform:scale(0.25,0.25);transform-origin:0 0;-webkit-text-stroke:0.8px #ccccdc;">Replay Lag</div><svg class="s" style="left:0;top:0" width="1080" height="462"><path d="M766.63 128.83 L767.33 127.9 L768.03 128.99 L768.73 129.08 L769.43 127.79 L770.13 128.23 L770.83 128.75 L771.53 127.56 L772.23 129.37 L772.93 129.08 L773.63 127.62 L774.33 127.58 L775.03 127.31 L775.73 128.84 L776.43 128.33 L777.13 128.16 L777.83 128.6 L778.53 126.25 L779.23 127.64 L779.93 127.88 L780.63 127.75 L781.33 127.91 L782.03 129.01 L782.73 128.25 L783.43 128.39 L784.13 128.53 L784.83 128.32 L785.53 128.88 L786.23 126.64 L786.93 127.3 L787.63 127.82 L788.33 129.3 L789.03 127.63 L789.73 127.99 L790.43 128.49 L791.13 127.45 L791.83 128.95 L792.53 128.58 L793.23 129.1 L793.93 128.07 L794.63 128.93 L795.33 128.12 L796.03 128.61 L796.73 128.65 L797.43 129.04 L798.13 129.15 L798.83 129.25 L799.53 128.18 L800.23 129.31 L800.93 128.64 L801.63 124.4 L802.33 124.4 L803.03 126.68 L803.73 128.59 L804.43 129.39 L805.13 128.31 L805.83 128.26 L806.53 127.93 L807.23 129.33 L807.93 122.4 L808.63 122.4 L809.33 127.53 L810.03 128.11 L810.73 123.4 L811.43 123.4 L812.13 129.32 L812.83 129.21 L813.53 125.76 L814.23 128.98 L814.93 128.18 L815.63 128.76 L816.33 129.1 L817.03 129.15 L817.73 128.92 L818.43 128.16 L819.13 128.61 L819.83 127.47 L820.53 129.3 L821.23 129.12 L821.93 128.69 L822.63 128.2 L823.33 129.39 L824.03 127.49 L824.73 128.35 L825.43 128.64 L826.13 128.93 L826.83 127.93 L827.53 125.4 L828.23 125.4 L828.93 128.03 L829.63 127.01 L830.33 128.23 L831.03 128.23 L831.73 127.28 L832.43 129.12 L833.13 125.65 L833.83 127.49 L834.53 127.62 L835.23 128.03 L835.93 127.82 L836.63 126.8 L837.33 127.21 L838.03 128.81 L838.73 128.32 L839.43 128.83 L840.13 127.34 L840.83 127.53 L841.53 128.48 L842.23 127.72 L842.93 128.82 L843.63 127.42 L844.33 128.97 L845.03 128.35 L845.73 121.4 L846.43 121.4 L847.13 128.72 L847.83 123.4 L848.53 123.4 L849.23 127.76 L849.93 128.46 L850.63 115.4 L851.33 115.4 L852.03 127.56 L852.03 130.4 L766.63 130.4 Z" fill="rgba(115,191,105,0.22)"/><path d="M766.63 128.83 L767.33 127.9 L768.03 128.99 L768.73 129.08 L769.43 127.79 L770.13 128.23 L770.83 128.75 L771.53 127.56 L772.23 129.37 L772.93 129.08 L773.63 127.62 L774.33 127.58 L775.03 127.31 L775.73 128.84 L776.43 128.33 L777.13 128.16 L777.83 128.6 L778.53 126.25 L779.23 127.64 L779.93 127.88 L780.63 127.75 L781.33 127.91 L782.03 129.01 L782.73 128.25 L783.43 128.39 L784.13 128.53 L784.83 128.32 L785.53 128.88 L786.23 126.64 L786.93 127.3 L787.63 127.82 L788.33 129.3 L789.03 127.63 L789.73 127.99 L790.43 128.49 L791.13 127.45 L791.83 128.95 L792.53 128.58 L793.23 129.1 L793.93 128.07 L794.63 128.93 L795.33 128.12 L796.03 128.61 L796.73 128.65 L797.43 129.04 L798.13 129.15 L798.83 129.25 L799.53 128.18 L800.23 129.31 L800.93 128.64 L801.63 124.4 L802.33 124.4 L803.03 126.68 L803.73 128.59 L804.43 129.39 L805.13 128.31 L805.83 128.26 L806.53 127.93 L807.23 129.33 L807.93 122.4 L808.63 122.4 L809.33 127.53 L810.03 128.11 L810.73 123.4 L811.43 123.4 L812.13 129.32 L812.83 129.21 L813.53 125.76 L814.23 128.98 L814.93 128.18 L815.63 128.76 L816.33 129.1 L817.03 129.15 L817.73 128.92 L818.43 128.16 L819.13 128.61 L819.83 127.47 L820.53 129.3 L821.23 129.12 L821.93 128.69 L822.63 128.2 L823.33 129.39 L824.03 127.49 L824.73 128.35 L825.43 128.64 L826.13 128.93 L826.83 127.93 L827.53 125.4 L828.23 125.4 L828.93 128.03 L829.63 127.01 L830.33 128.23 L831.03 128.23 L831.73 127.28 L832.43 129.12 L833.13 125.65 L833.83 127.49 L834.53 127.62 L835.23 128.03 L835.93 127.82 L836.63 126.8 L837.33 127.21 L838.03 128.81 L838.73 128.32 L839.43 128.83 L840.13 127.34 L840.83 127.53 L841.53 128.48 L842.23 127.72 L842.93 128.82 L843.63 127.42 L844.33 128.97 L845.03 128.35 L845.73 121.4 L846.43 121.4 L847.13 128.72 L847.83 123.4 L848.53 123.4 L849.23 127.76 L849.93 128.46 L850.63 115.4 L851.33 115.4 L852.03 127.56" fill="none" stroke="#73bf69" stroke-width="0.6" stroke-linejoin="round"/></svg><div class="t" style="left:-390.63px;width:2400px;text-align:center;top:111px;font-size:36.8px;color:#73bf69;transform:scale(0.25,0.25);transform-origin:50% 0;letter-spacing:-1.8px;-webkit-text-stroke:0.48px #73bf69;">16.2 ms</div><div class="p" style="left:855.91px;top:37px;width:86.48px;height:61.8px;"></div><div class="t" style="left:859.51px;top:41.39px;font-size:26.6px;color:#ccccdc;transform:scale(0.25,0.25);transform-origin:0 0;-webkit-text-stroke:0.8px #ccccdc;">Volume Space Usage</div><svg class="s" style="left:0;top:0" width="1080" height="462"><path d="M875.47 91.69 A24.9 24.9 0 1 1 922.83 91.69 L916.08 89.5 A17.8 17.8 0 1 0 882.22 89.5 Z" fill="#232629"/><path d="M875.47 91.69 A24.9 24.9 0 0 1 874.31 85.71 L881.39 85.22 A17.8 17.8 0 0 0 882.22 89.5 Z" fill="#73bf69"/><path d="M872.81 92.56 A27.7 27.7 0 0 1 923.25 70.35 L922.12 70.99 A26.4 26.4 0 0 0 874.04 92.16 Z" fill="#73bf69"/><path d="M923.25 70.35 A27.7 27.7 0 0 1 926.8 82.26 L925.5 82.34 A26.4 26.4 0 0 0 922.12 70.99 Z" fill="#f2cc0c"/><path d="M926.8 82.26 A27.7 27.7 0 0 1 925.49 92.56 L924.26 92.16 A26.4 26.4 0 0 0 925.5 82.34 Z" fill="#f2495c"/></svg><div class="t" style="left:-300.85px;width:2400px;text-align:center;top:82.55px;font-size:37.6px;color:#73bf69;transform:scale(0.25,0.25);transform-origin:50% 0;letter-spacing:-0.4px;-webkit-text-stroke:0.6px #73bf69;">6.51%</div><div class="p" style="left:855.91px;top:102.8px;width:86.48px;height:28.8px;"></div><div class="t" style="left:859.51px;top:107.19px;font-size:26.6px;color:#ccccdc;transform:scale(0.25,0.25);transform-origin:0 0;-webkit-text-stroke:0.8px #ccccdc;">Database Size</div><div class="t" style="left:-300.45px;width:2400px;text-align:center;top:121.46px;font-size:28.8px;color:#73bf69;transform:scale(0.25,0.25);transform-origin:50% 0;letter-spacing:-1.2px;-webkit-text-stroke:0.32px #73bf69;">12.94 GB</div><div class="p" style="left:945.69px;top:37px;width:131.37px;height:28.9px;"></div><div class="t" style="left:949.29px;top:41.39px;font-size:26.6px;color:#ccccdc;transform:scale(0.25,0.25);transform-origin:0 0;-webkit-text-stroke:0.8px #ccccdc;">Last Base Backup</div><svg class="s" style="left:1008.89px;top:42px;" width="6" height="6" viewBox="0 0 6 6"><circle cx="3" cy="3" r="2.35" fill="none" stroke="#ccccdc" stroke-width="0.45"/><path d="M3 2.7V4.3" stroke="#ccccdc" stroke-width="0.5"/><circle cx="3" cy="1.85" r="0.32" fill="#ccccdc"/></svg><div class="t" style="left:-188.62px;width:2400px;text-align:center;top:54.76px;font-size:28.8px;color:#73bf69;transform:scale(0.25,0.25);transform-origin:50% 0;letter-spacing:-0.8px;-webkit-text-stroke:0.32px #73bf69;">10 hours ago</div><div class="p" style="left:945.69px;top:69.9px;width:131.37px;height:28.9px;"></div><div class="t" style="left:949.29px;top:74.29px;font-size:26.6px;color:#ccccdc;transform:scale(0.25,0.25);transform-origin:0 0;-webkit-text-stroke:0.8px #ccccdc;">Last archived WAL</div><svg class="s" style="left:1013.69px;top:74.9px;" width="6" height="6" viewBox="0 0 6 6"><circle cx="3" cy="3" r="2.35" fill="none" stroke="#ccccdc" stroke-width="0.45"/><path d="M3 2.7V4.3" stroke="#ccccdc" stroke-width="0.5"/><circle cx="3" cy="1.85" r="0.32" fill="#ccccdc"/></svg><div class="t" style="left:-188.62px;width:2400px;text-align:center;top:87.66px;font-size:28.8px;color:#73bf69;transform:scale(0.25,0.25);transform-origin:50% 0;letter-spacing:-0.8px;-webkit-text-stroke:0.32px #73bf69;">5 minutes</div><div class="p" style="left:945.69px;top:102.8px;width:131.37px;height:28.8px;"></div><div class="t" style="left:949.29px;top:107.19px;font-size:26.6px;color:#ccccdc;transform:scale(0.25,0.25);transform-origin:0 0;-webkit-text-stroke:0.8px #ccccdc;">First Recoverability Point</div><div class="t" style="left:-188.62px;width:2400px;text-align:center;top:120.31px;font-size:30.8px;color:#73bf69;transform:scale(0.25,0.25);transform-origin:50% 0;letter-spacing:-0.8px;-webkit-text-stroke:0.32px #73bf69;">2024-02-20 02:01:08</div><svg class="s" style="left:5.6px;top:140.05px;" width="5" height="3" viewBox="0 0 5 3"><path d="M1 0.9L2.5 2.3L4 0.9" fill="none" stroke="#ccccdc" stroke-width="0.7"/></svg><div class="t" style="left:11.8px;top:137.19px;font-size:29.8px;color:#ccccdc;transform:scale(0.25,0.25);transform-origin:0 0;-webkit-text-stroke:0.8px #ccccdc;">Server Health</div><div class="t" style="left:6.6px;top:155.89px;font-size:26.6px;color:#ccccdc;transform:scale(0.25,0.25);transform-origin:0 0;-webkit-text-stroke:0.8px #ccccdc;">Instance</div><div class="p" style="left:137.67px;top:151.5px;width:86.48px;height:12.5px;"></div><div class="t" style="left:141.27px;top:155.89px;font-size:26.6px;color:#ccccdc;transform:scale(0.25,0.25);transform-origin:0 0;-webkit-text-stroke:0.8px #ccccdc;">Status</div><div class="p" style="left:227.45px;top:151.5px;width:131.37px;height:12.5px;"></div><div class="t" style="left:231.05px;top:155.89px;font-size:26.6px;color:#ccccdc;transform:scale(0.25,0.25);transform-origin:0 0;-webkit-text-stroke:0.8px #ccccdc;">Clustering / replicas</div><div class="p" style="left:362.12px;top:151.5px;width:86.48px;height:12.5px;"></div><div class="t" style="left:365.72px;top:155.89px;font-size:26.6px;color:#ccccdc;transform:scale(0.25,0.25);transform-origin:0 0;-webkit-text-stroke:0.8px #ccccdc;">Zone</div><div class="p" style="left:451.9px;top:151.5px;width:176.26px;height:12.5px;"></div><div class="t" style="left:455.5px;top:155.89px;font-size:26.6px;color:#ccccdc;transform:scale(0.25,0.25);transform-origin:0 0;-webkit-text-stroke:0.8px #ccccdc;">Connections</div><div class="p" style="left:631.46px;top:151.5px;width:131.37px;height:12.5px;"></div><div class="t" style="left:635.06px;top:155.89px;font-size:26.6px;color:#ccccdc;transform:scale(0.25,0.25);transform-origin:0 0;-webkit-text-stroke:0.8px #ccccdc;">Max Connections</div><div class="p" style="left:766.13px;top:151.5px;width:131.37px;height:12.5px;"></div><div class="t" style="left:769.73px;top:155.89px;font-size:26.6px;color:#ccccdc;transform:scale(0.25,0.25);transform-origin:0 0;-webkit-text-stroke:0.8px #ccccdc;">Wraparound</div><div class="p" style="left:900.8px;top:151.5px;width:86.48px;height:12.5px;"></div><div class="t" style="left:904.4px;top:155.89px;font-size:26.6px;color:#ccccdc;transform:scale(0.25,0.25);transform-origin:0 0;-webkit-text-stroke:0.8px #ccccdc;">Started</div><div class="p" style="left:990.58px;top:151.5px;width:86.48px;height:12.5px;"></div><div class="t" style="left:994.18px;top:155.89px;font-size:26.6px;color:#ccccdc;transform:scale(0.25,0.25);transform-origin:0 0;-webkit-text-stroke:0.8px #ccccdc;">Version</div><div class="p" style="left:3px;top:168px;width:131.37px;height:45px;"></div><div class="t" style="left:-1131.32px;width:2400px;text-align:center;top:186.91px;font-size:28.4px;color:#ccccdc;transform:scale(0.25,0.25);transform-origin:50% 0;-webkit-text-stroke:0.8px #ccccdc;">database-cluster-1</div><div class="p" style="left:137.67px;top:168px;width:86.48px;height:45px;background:linear-gradient(120deg,#479e46,#6cb659);border:none;"></div><div class="t" style="left:-1019.39px;width:2400px;text-align:center;top:176.25px;font-size:122.4px;color:#ffffff;transform:scale(0.2412,0.25);transform-origin:50% 0;-webkit-text-stroke:0.8px #ffffff;">Up</div><div class="p" style="left:227.45px;top:168px;width:86.48px;height:45px;background:linear-gradient(120deg,#479e46,#6cb659);border:none;"></div><div class="t" style="left:-929.91px;width:2400px;text-align:center;top:175.89px;font-size:125.2px;color:#ffffff;transform:scale(0.2375,0.25);transform-origin:50% 0;-webkit-text-stroke:0.8px #ffffff;">Yes</div><div class="p" style="left:317.23px;top:168px;width:41.59px;height:45px;"></div><div class="t" style="left:-861.97px;width:2400px;text-align:center;top:176.2px;font-size:122px;color:#73bf69;transform:scale(0.2700,0.25);transform-origin:50% 0;-webkit-text-stroke:0.8px #73bf69;">0</div><div class="p" style="left:362.12px;top:168px;width:86.48px;height:45px;"></div><div class="t" style="left:-794.64px;width:2400px;text-align:center;top:186.96px;font-size:34.4px;color:#6e9fff;transform:scale(0.25,0.25);transform-origin:50% 0;">westeurope-2</div><div class="p" style="left:451.9px;top:168px;width:176.26px;height:45px;"></div><svg class="s" style="left:0;top:0" width="1080" height="462"><line x1="476" y1="177.8" x2="476" y2="190.4" stroke="rgba(204,204,220,0.09)" stroke-width="0.5"/><line x1="520.5" y1="177.8" x2="520.5" y2="190.4" stroke="rgba(204,204,220,0.09)" stroke-width="0.5"/><line x1="564.4" y1="177.8" x2="564.4" y2="190.4" stroke="rgba(204,204,220,0.09)" stroke-width="0.5"/><line x1="608.5" y1="177.8" x2="608.5" y2="190.4" stroke="rgba(204,204,220,0.09)" stroke-width="0.5"/><line x1="466.2" y1="177.8" x2="620.96" y2="177.8" stroke="rgba(204,204,220,0.09)" stroke-width="0.5"/><line x1="466.2" y1="190.4" x2="620.96" y2="190.4" stroke="rgba(204,204,220,0.09)" stroke-width="0.5"/><path d="M466.2 178.4 L469.2 178.6 L471.2 177.8 L472.4 178.3 L472.8 190.4 L620.96 190.4 L620.96 190.4 L466.2 190.4 Z" fill="rgba(115,191,105,0.13)"/><path d="M466.2 178.4 L469.2 178.6 L471.2 177.8 L472.4 178.3 L472.8 190.4 L620.96 190.4" fill="none" stroke="#73bf69" stroke-width="0.75"/></svg><div class="t" style="left:-1935.8px;width:2400px;text-align:right;top:175.12px;font-size:21.2px;color:#b0b0bd;transform:scale(0.25,0.25);transform-origin:100% 0;">25</div><div class="t" style="left:-1935.8px;width:2400px;text-align:right;top:187.72px;font-size:21.2px;color:#b0b0bd;transform:scale(0.25,0.25);transform-origin:100% 0;">0</div><div class="t" style="left:-724px;width:2400px;text-align:center;top:194.12px;font-size:21.2px;color:#b0b0bd;transform:scale(0.25,0.25);transform-origin:50% 0;">03/15</div><div class="t" style="left:-679.5px;width:2400px;text-align:center;top:194.12px;font-size:21.2px;color:#b0b0bd;transform:scale(0.25,0.25);transform-origin:50% 0;">03/17</div><div class="t" style="left:-635.6px;width:2400px;text-align:center;top:194.12px;font-size:21.2px;color:#b0b0bd;transform:scale(0.25,0.25);transform-origin:50% 0;">03/19</div><div class="t" style="left:-591.5px;width:2400px;text-align:center;top:194.12px;font-size:21.2px;color:#b0b0bd;transform:scale(0.25,0.25);transform-origin:50% 0;">03/21</div><svg class="s" style="left:457.3px;top:204.9px;" width="6" height="1.6" viewBox="0 0 6 1.6"><rect x="0" y="0" width="5.6" height="1.5" rx="0.7" fill="#73bf69"/></svg><div class="t" style="left:467.7px;top:203.02px;font-size:21.2px;color:#b0b0bd;transform:scale(0.25,0.25);transform-origin:0 0;">-</div><div class="t" style="left:473.2px;top:203.02px;font-size:21.2px;color:#b0b0bd;transform:scale(0.25,0.25);transform-origin:0 0;">Last: 1&nbsp; Mean: 2.01</div><div class="p" style="left:631.46px;top:168px;width:131.37px;height:45px;"></div><svg class="s" style="left:0;top:0" width="1080" height="462"><path d="M676.03 204.46 A22.2 22.2 0 1 1 718.26 204.46 L712.17 202.48 A15.8 15.8 0 1 0 682.12 202.48 Z" fill="#232629"/><path d="M676.03 204.46 A22.2 22.2 0 0 1 675.39 202.03 L681.66 200.76 A15.8 15.8 0 0 0 682.12 202.48 Z" fill="#73bf69"/><path d="M673.37 205.33 A25 25 0 0 1 717.91 183.68 L716.83 184.4 A23.7 23.7 0 0 0 674.6 204.92 Z" fill="#73bf69"/><path d="M717.91 183.68 A25 25 0 0 1 722.1 196.03 L720.8 196.11 A23.7 23.7 0 0 0 716.83 184.4 Z" fill="#f2cc0c"/><path d="M722.1 196.03 A25 25 0 0 1 720.92 205.33 L719.69 204.92 A23.7 23.7 0 0 0 720.8 196.11 Z" fill="#f2495c"/></svg><div class="t" style="left:-502.86px;width:2400px;text-align:center;top:194.79px;font-size:48.4px;color:#73bf69;transform:scale(0.25,0.25);transform-origin:50% 0;-webkit-text-stroke:0.6px #73bf69;">1%</div><div class="p" style="left:766.13px;top:168px;width:131.37px;height:45px;"></div><svg class="s" style="left:0;top:0" width="1080" height="462"><rect x="769.73" y="172.2" width="4" height="37.2" rx="0.6" fill="#73bf69"/><rect x="774.9" y="172.2" width="4" height="37.2" rx="0.6" fill="rgba(115,191,105,0.22)"/><rect x="780.07" y="172.2" width="4" height="37.2" rx="0.6" fill="rgba(242,204,12,0.25)"/><rect x="785.24" y="172.2" width="4" height="37.2" rx="0.6" fill="rgba(242,204,12,0.25)"/><rect x="790.41" y="172.2" width="4" height="37.2" rx="0.6" fill="rgba(242,204,12,0.25)"/><rect x="795.58" y="172.2" width="4" height="37.2" rx="0.6" fill="rgba(242,204,12,0.25)"/><rect x="800.75" y="172.2" width="4" height="37.2" rx="0.6" fill="rgba(242,204,12,0.25)"/><rect x="805.92" y="172.2" width="4" height="37.2" rx="0.6" fill="rgba(242,204,12,0.25)"/><rect x="811.09" y="172.2" width="4" height="37.2" rx="0.6" fill="rgba(242,73,92,0.25)"/><rect x="816.26" y="172.2" width="4" height="37.2" rx="0.6" fill="rgba(242,73,92,0.25)"/><rect x="821.43" y="172.2" width="4" height="37.2" rx="0.6" fill="rgba(242,73,92,0.25)"/><rect x="826.6" y="172.2" width="4" height="37.2" rx="0.6" fill="rgba(242,73,92,0.25)"/><rect x="831.77" y="172.2" width="4" height="37.2" rx="0.6" fill="rgba(242,73,92,0.25)"/><rect x="836.94" y="172.2" width="4" height="37.2" rx="0.6" fill="rgba(242,73,92,0.25)"/><rect x="842.11" y="172.2" width="4" height="37.2" rx="0.6" fill="rgba(242,73,92,0.25)"/><rect x="847.28" y="172.2" width="4" height="37.2" rx="0.6" fill="rgba(242,73,92,0.25)"/><rect x="852.45" y="172.2" width="4" height="37.2" rx="0.6" fill="rgba(242,73,92,0.25)"/></svg><div class="t" style="left:-324.8px;width:2400px;text-align:center;top:187.27px;font-size:24px;color:#73bf69;transform:scale(0.25,0.25);transform-origin:50% 0;letter-spacing:-1.2px;-webkit-text-stroke:0.2px #73bf69;">18633065</div><div class="p" style="left:900.8px;top:168px;width:86.48px;height:45px;background:linear-gradient(120deg,#163a93,#1d67b2);border:none;"></div><div class="t" style="left:-256.26px;width:2400px;text-align:center;top:184.08px;font-size:58.8px;color:#ffffff;transform:scale(0.25,0.25);transform-origin:50% 0;-webkit-text-stroke:0.6px #ffffff;">7 days ago</div><div class="p" style="left:990.58px;top:168px;width:86.48px;height:45px;background:linear-gradient(120deg,#163a93,#1d67b2);border:none;"></div><div class="t" style="left:-166.98px;width:2400px;text-align:center;top:175.74px;font-size:124.8px;color:#ffffff;transform:scale(0.2250,0.25);transform-origin:50% 0;-webkit-text-stroke:0.8px #ffffff;">15.4</div><div class="p" style="left:3px;top:217px;width:131.37px;height:45.5px;"></div><div class="t" style="left:-1131.32px;width:2400px;text-align:center;top:236.16px;font-size:28.4px;color:#ccccdc;transform:scale(0.25,0.25);transform-origin:50% 0;-webkit-text-stroke:0.8px #ccccdc;">database-cluster-2</div><div class="p" style="left:137.67px;top:217px;width:86.48px;height:45.5px;background:linear-gradient(120deg,#479e46,#6cb659);border:none;"></div><div class="t" style="left:-1019.39px;width:2400px;text-align:center;top:225.5px;font-size:122.4px;color:#ffffff;transform:scale(0.2412,0.25);transform-origin:50% 0;-webkit-text-stroke:0.8px #ffffff;">Up</div><div class="p" style="left:227.45px;top:217px;width:86.48px;height:45.5px;background:linear-gradient(120deg,#479e46,#6cb659);border:none;"></div><div class="t" style="left:-929.91px;width:2400px;text-align:center;top:225.14px;font-size:125.2px;color:#ffffff;transform:scale(0.2375,0.25);transform-origin:50% 0;-webkit-text-stroke:0.8px #ffffff;">Yes</div><div class="p" style="left:317.23px;top:217px;width:41.59px;height:45.5px;"></div><div class="t" style="left:-861.97px;width:2400px;text-align:center;top:225.45px;font-size:122px;color:#73bf69;transform:scale(0.2700,0.25);transform-origin:50% 0;-webkit-text-stroke:0.8px #73bf69;">2</div><div class="p" style="left:362.12px;top:217px;width:86.48px;height:45.5px;"></div><div class="t" style="left:-794.64px;width:2400px;text-align:center;top:236.21px;font-size:34.4px;color:#6e9fff;transform:scale(0.25,0.25);transform-origin:50% 0;">westeurope-3</div><div class="p" style="left:451.9px;top:217px;width:176.26px;height:45.5px;"></div><svg class="s" style="left:0;top:0" width="1080" height="462"><line x1="476" y1="225.2" x2="476" y2="238.2" stroke="rgba(204,204,220,0.09)" stroke-width="0.5"/><line x1="520.5" y1="225.2" x2="520.5" y2="238.2" stroke="rgba(204,204,220,0.09)" stroke-width="0.5"/><line x1="564.4" y1="225.2" x2="564.4" y2="238.2" stroke="rgba(204,204,220,0.09)" stroke-width="0.5"/><line x1="608.5" y1="225.2" x2="608.5" y2="238.2" stroke="rgba(204,204,220,0.09)" stroke-width="0.5"/><line x1="463.4" y1="225.2" x2="620.96" y2="225.2" stroke="rgba(204,204,220,0.09)" stroke-width="0.5"/><line x1="463.4" y1="238.2" x2="620.96" y2="238.2" stroke="rgba(204,204,220,0.09)" stroke-width="0.5"/><path d="M463.4 238.2 L467.4 238.2 L468.4 234.2 L473.4 233.2 L477.4 231.7 L483.4 230.7 L487.4 229.7 L488.4 228 L523.4 228 L563.4 227.7 L597.4 227.7 L598.4 226.2 L607.4 226.2 L608.4 227.4 L611.4 226.7 L620.96 226.4 L620.96 238.2 L463.4 238.2 Z" fill="rgba(115,191,105,0.13)"/><path d="M463.4 238.2 L467.4 238.2 L468.4 234.2 L473.4 233.2 L477.4 231.7 L483.4 230.7 L487.4 229.7 L488.4 228 L523.4 228 L563.4 227.7 L597.4 227.7 L598.4 226.2 L607.4 226.2 L608.4 227.4 L611.4 226.7 L620.96 226.4" fill="none" stroke="#73bf69" stroke-width="0.75"/></svg><div class="t" style="left:-1938.6px;width:2400px;text-align:right;top:235.52px;font-size:21.2px;color:#b0b0bd;transform:scale(0.25,0.25);transform-origin:100% 0;">0</div><div class="t" style="left:-724px;width:2400px;text-align:center;top:241.92px;font-size:21.2px;color:#b0b0bd;transform:scale(0.25,0.25);transform-origin:50% 0;">03/15</div><div class="t" style="left:-679.5px;width:2400px;text-align:center;top:241.92px;font-size:21.2px;color:#b0b0bd;transform:scale(0.25,0.25);transform-origin:50% 0;">03/17</div><div class="t" style="left:-635.6px;width:2400px;text-align:center;top:241.92px;font-size:21.2px;color:#b0b0bd;transform:scale(0.25,0.25);transform-origin:50% 0;">03/19</div><div class="t" style="left:-591.5px;width:2400px;text-align:center;top:241.92px;font-size:21.2px;color:#b0b0bd;transform:scale(0.25,0.25);transform-origin:50% 0;">03/21</div><svg class="s" style="left:457.3px;top:252.7px;" width="6" height="1.6" viewBox="0 0 6 1.6"><rect x="0" y="0" width="5.6" height="1.5" rx="0.7" fill="#73bf69"/></svg><div class="t" style="left:467.7px;top:250.82px;font-size:21.2px;color:#b0b0bd;transform:scale(0.25,0.25);transform-origin:0 0;">-</div><div class="t" style="left:473.2px;top:250.82px;font-size:21.2px;color:#b0b0bd;transform:scale(0.25,0.25);transform-origin:0 0;">Last: 30&nbsp; Mean: 24.5</div><div class="p" style="left:631.46px;top:217px;width:131.37px;height:45.5px;"></div><svg class="s" style="left:0;top:0" width="1080" height="462"><path d="M676.03 253.46 A22.2 22.2 0 1 1 718.26 253.46 L712.17 251.48 A15.8 15.8 0 1 0 682.12 251.48 Z" fill="#232629"/><path d="M676.03 253.46 A22.2 22.2 0 0 1 681.95 230.42 L686.33 235.08 A15.8 15.8 0 0 0 682.12 251.48 Z" fill="#73bf69"/><path d="M673.37 254.33 A25 25 0 0 1 717.91 232.68 L716.83 233.4 A23.7 23.7 0 0 0 674.6 253.92 Z" fill="#73bf69"/><path d="M717.91 232.68 A25 25 0 0 1 722.1 245.03 L720.8 245.11 A23.7 23.7 0 0 0 716.83 233.4 Z" fill="#f2cc0c"/><path d="M722.1 245.03 A25 25 0 0 1 720.92 254.33 L719.69 253.92 A23.7 23.7 0 0 0 720.8 245.11 Z" fill="#f2495c"/></svg><div class="t" style="left:-502.86px;width:2400px;text-align:center;top:244.8px;font-size:43.6px;color:#73bf69;transform:scale(0.25,0.25);transform-origin:50% 0;-webkit-text-stroke:0.6px #73bf69;">30%</div><div class="p" style="left:766.13px;top:217px;width:131.37px;height:45.5px;"></div><svg class="s" style="left:0;top:0" width="1080" height="462"><rect x="769.73" y="221.2" width="4" height="37.7" rx="0.6" fill="#73bf69"/><rect x="774.9" y="221.2" width="4" height="37.7" rx="0.6" fill="rgba(115,191,105,0.22)"/><rect x="780.07" y="221.2" width="4" height="37.7" rx="0.6" fill="rgba(242,204,12,0.25)"/><rect x="785.24" y="221.2" width="4" height="37.7" rx="0.6" fill="rgba(242,204,12,0.25)"/><rect x="790.41" y="221.2" width="4" height="37.7" rx="0.6" fill="rgba(242,204,12,0.25)"/><rect x="795.58" y="221.2" width="4" height="37.7" rx="0.6" fill="rgba(242,204,12,0.25)"/><rect x="800.75" y="221.2" width="4" height="37.7" rx="0.6" fill="rgba(242,204,12,0.25)"/><rect x="805.92" y="221.2" width="4" height="37.7" rx="0.6" fill="rgba(242,204,12,0.25)"/><rect x="811.09" y="221.2" width="4" height="37.7" rx="0.6" fill="rgba(242,73,92,0.25)"/><rect x="816.26" y="221.2" width="4" height="37.7" rx="0.6" fill="rgba(242,73,92,0.25)"/><rect x="821.43" y="221.2" width="4" height="37.7" rx="0.6" fill="rgba(242,73,92,0.25)"/><rect x="826.6" y="221.2" width="4" height="37.7" rx="0.6" fill="rgba(242,73,92,0.25)"/><rect x="831.77" y="221.2" width="4" height="37.7" rx="0.6" fill="rgba(242,73,92,0.25)"/><rect x="836.94" y="221.2" width="4" height="37.7" rx="0.6" fill="rgba(242,73,92,0.25)"/><rect x="842.11" y="221.2" width="4" height="37.7" rx="0.6" fill="rgba(242,73,92,0.25)"/><rect x="847.28" y="221.2" width="4" height="37.7" rx="0.6" fill="rgba(242,73,92,0.25)"/><rect x="852.45" y="221.2" width="4" height="37.7" rx="0.6" fill="rgba(242,73,92,0.25)"/></svg><div class="t" style="left:-324.8px;width:2400px;text-align:center;top:236.52px;font-size:24px;color:#73bf69;transform:scale(0.25,0.25);transform-origin:50% 0;letter-spacing:-1.2px;-webkit-text-stroke:0.2px #73bf69;">18632998</div><div class="p" style="left:900.8px;top:217px;width:86.48px;height:45.5px;background:linear-gradient(120deg,#163a93,#1d67b2);border:none;"></div><div class="t" style="left:-256.26px;width:2400px;text-align:center;top:233.33px;font-size:58.8px;color:#ffffff;transform:scale(0.25,0.25);transform-origin:50% 0;-webkit-text-stroke:0.6px #ffffff;">7 days ago</div><div class="p" style="left:990.58px;top:217px;width:86.48px;height:45.5px;background:linear-gradient(120deg,#163a93,#1d67b2);border:none;"></div><div class="t" style="left:-166.98px;width:2400px;text-align:center;top:224.99px;font-size:124.8px;color:#ffffff;transform:scale(0.2250,0.25);transform-origin:50% 0;-webkit-text-stroke:0.8px #ffffff;">15.4</div><div class="p" style="left:3px;top:266.5px;width:131.37px;height:44.1px;"></div><div class="t" style="left:-1131.32px;width:2400px;text-align:center;top:284.96px;font-size:28.4px;color:#ccccdc;transform:scale(0.25,0.25);transform-origin:50% 0;-webkit-text-stroke:0.8px #ccccdc;">database-cluster-3</div><div class="p" style="left:137.67px;top:266.5px;width:86.48px;height:44.1px;background:linear-gradient(120deg,#479e46,#6cb659);border:none;"></div><div class="t" style="left:-1019.39px;width:2400px;text-align:center;top:274.3px;font-size:122.4px;color:#ffffff;transform:scale(0.2412,0.25);transform-origin:50% 0;-webkit-text-stroke:0.8px #ffffff;">Up</div><div class="p" style="left:227.45px;top:266.5px;width:86.48px;height:44.1px;background:linear-gradient(120deg,#479e46,#6cb659);border:none;"></div><div class="t" style="left:-929.91px;width:2400px;text-align:center;top:273.94px;font-size:125.2px;color:#ffffff;transform:scale(0.2375,0.25);transform-origin:50% 0;-webkit-text-stroke:0.8px #ffffff;">Yes</div><div class="p" style="left:317.23px;top:266.5px;width:41.59px;height:44.1px;"></div><div class="t" style="left:-861.97px;width:2400px;text-align:center;top:274.25px;font-size:122px;color:#73bf69;transform:scale(0.2700,0.25);transform-origin:50% 0;-webkit-text-stroke:0.8px #73bf69;">0</div><div class="p" style="left:362.12px;top:266.5px;width:86.48px;height:44.1px;"></div><div class="t" style="left:-794.64px;width:2400px;text-align:center;top:285.01px;font-size:34.4px;color:#6e9fff;transform:scale(0.25,0.25);transform-origin:50% 0;">westeurope-3</div><div class="p" style="left:451.9px;top:266.5px;width:176.26px;height:44.1px;"></div><svg class="s" style="left:0;top:0" width="1080" height="462"><line x1="476" y1="272.7" x2="476" y2="287.4" stroke="rgba(204,204,220,0.09)" stroke-width="0.5"/><line x1="520.5" y1="272.7" x2="520.5" y2="287.4" stroke="rgba(204,204,220,0.09)" stroke-width="0.5"/><line x1="564.4" y1="272.7" x2="564.4" y2="287.4" stroke="rgba(204,204,220,0.09)" stroke-width="0.5"/><line x1="608.5" y1="272.7" x2="608.5" y2="287.4" stroke="rgba(204,204,220,0.09)" stroke-width="0.5"/><line x1="463.4" y1="272.7" x2="620.96" y2="272.7" stroke="rgba(204,204,220,0.09)" stroke-width="0.5"/><line x1="463.4" y1="287.4" x2="620.96" y2="287.4" stroke="rgba(204,204,220,0.09)" stroke-width="0.5"/><path d="M463.4 280.05 L620.96 280.05 L620.96 287.4 L463.4 287.4 Z" fill="rgba(115,191,105,0.13)"/><path d="M463.4 280.05 L620.96 280.05" fill="none" stroke="#73bf69" stroke-width="0.75"/></svg><div class="t" style="left:-1938.6px;width:2400px;text-align:right;top:270.02px;font-size:21.2px;color:#b0b0bd;transform:scale(0.25,0.25);transform-origin:100% 0;">2</div><div class="t" style="left:-1938.6px;width:2400px;text-align:right;top:284.72px;font-size:21.2px;color:#b0b0bd;transform:scale(0.25,0.25);transform-origin:100% 0;">0</div><div class="t" style="left:-724px;width:2400px;text-align:center;top:291.12px;font-size:21.2px;color:#b0b0bd;transform:scale(0.25,0.25);transform-origin:50% 0;">03/15</div><div class="t" style="left:-679.5px;width:2400px;text-align:center;top:291.12px;font-size:21.2px;color:#b0b0bd;transform:scale(0.25,0.25);transform-origin:50% 0;">03/17</div><div class="t" style="left:-635.6px;width:2400px;text-align:center;top:291.12px;font-size:21.2px;color:#b0b0bd;transform:scale(0.25,0.25);transform-origin:50% 0;">03/19</div><div class="t" style="left:-591.5px;width:2400px;text-align:center;top:291.12px;font-size:21.2px;color:#b0b0bd;transform:scale(0.25,0.25);transform-origin:50% 0;">03/21</div><svg class="s" style="left:457.3px;top:301.9px;" width="6" height="1.6" viewBox="0 0 6 1.6"><rect x="0" y="0" width="5.6" height="1.5" rx="0.7" fill="#73bf69"/></svg><div class="t" style="left:467.7px;top:300.02px;font-size:21.2px;color:#b0b0bd;transform:scale(0.25,0.25);transform-origin:0 0;">-</div><div class="t" style="left:473.2px;top:300.02px;font-size:21.2px;color:#b0b0bd;transform:scale(0.25,0.25);transform-origin:0 0;">Last: 1&nbsp; Mean: 1</div><div class="p" style="left:631.46px;top:266.5px;width:131.37px;height:44.1px;"></div><svg class="s" style="left:0;top:0" width="1080" height="462"><path d="M676.03 302.96 A22.2 22.2 0 1 1 718.26 302.96 L712.17 300.98 A15.8 15.8 0 1 0 682.12 300.98 Z" fill="#232629"/><path d="M676.03 302.96 A22.2 22.2 0 0 1 675.39 300.53 L681.66 299.26 A15.8 15.8 0 0 0 682.12 300.98 Z" fill="#73bf69"/><path d="M673.37 303.83 A25 25 0 0 1 717.91 282.18 L716.83 282.9 A23.7 23.7 0 0 0 674.6 303.42 Z" fill="#73bf69"/><path d="M717.91 282.18 A25 25 0 0 1 722.1 294.53 L720.8 294.61 A23.7 23.7 0 0 0 716.83 282.9 Z" fill="#f2cc0c"/><path d="M722.1 294.53 A25 25 0 0 1 720.92 303.83 L719.69 303.42 A23.7 23.7 0 0 0 720.8 294.61 Z" fill="#f2495c"/></svg><div class="t" style="left:-502.86px;width:2400px;text-align:center;top:293.29px;font-size:48.4px;color:#73bf69;transform:scale(0.25,0.25);transform-origin:50% 0;-webkit-text-stroke:0.6px #73bf69;">1%</div><div class="p" style="left:766.13px;top:266.5px;width:131.37px;height:44.1px;"></div><svg class="s" style="left:0;top:0" width="1080" height="462"><rect x="769.73" y="270.7" width="4" height="36.3" rx="0.6" fill="#73bf69"/><rect x="774.9" y="270.7" width="4" height="36.3" rx="0.6" fill="rgba(115,191,105,0.22)"/><rect x="780.07" y="270.7" width="4" height="36.3" rx="0.6" fill="rgba(242,204,12,0.25)"/><rect x="785.24" y="270.7" width="4" height="36.3" rx="0.6" fill="rgba(242,204,12,0.25)"/><rect x="790.41" y="270.7" width="4" height="36.3" rx="0.6" fill="rgba(242,204,12,0.25)"/><rect x="795.58" y="270.7" width="4" height="36.3" rx="0.6" fill="rgba(242,204,12,0.25)"/><rect x="800.75" y="270.7" width="4" height="36.3" rx="0.6" fill="rgba(242,204,12,0.25)"/><rect x="805.92" y="270.7" width="4" height="36.3" rx="0.6" fill="rgba(242,204,12,0.25)"/><rect x="811.09" y="270.7" width="4" height="36.3" rx="0.6" fill="rgba(242,73,92,0.25)"/><rect x="816.26" y="270.7" width="4" height="36.3" rx="0.6" fill="rgba(242,73,92,0.25)"/><rect x="821.43" y="270.7" width="4" height="36.3" rx="0.6" fill="rgba(242,73,92,0.25)"/><rect x="826.6" y="270.7" width="4" height="36.3" rx="0.6" fill="rgba(242,73,92,0.25)"/><rect x="831.77" y="270.7" width="4" height="36.3" rx="0.6" fill="rgba(242,73,92,0.25)"/><rect x="836.94" y="270.7" width="4" height="36.3" rx="0.6" fill="rgba(242,73,92,0.25)"/><rect x="842.11" y="270.7" width="4" height="36.3" rx="0.6" fill="rgba(242,73,92,0.25)"/><rect x="847.28" y="270.7" width="4" height="36.3" rx="0.6" fill="rgba(242,73,92,0.25)"/><rect x="852.45" y="270.7" width="4" height="36.3" rx="0.6" fill="rgba(242,73,92,0.25)"/></svg><div class="t" style="left:-324.8px;width:2400px;text-align:center;top:285.32px;font-size:24px;color:#73bf69;transform:scale(0.25,0.25);transform-origin:50% 0;letter-spacing:-1.2px;-webkit-text-stroke:0.2px #73bf69;">18633019</div><div class="p" style="left:900.8px;top:266.5px;width:86.48px;height:44.1px;background:linear-gradient(120deg,#163a93,#1d67b2);border:none;"></div><div class="t" style="left:-256.26px;width:2400px;text-align:center;top:282.13px;font-size:58.8px;color:#ffffff;transform:scale(0.25,0.25);transform-origin:50% 0;-webkit-text-stroke:0.6px #ffffff;">7 days ago</div><div class="p" style="left:990.58px;top:266.5px;width:86.48px;height:44.1px;background:linear-gradient(120deg,#163a93,#1d67b2);border:none;"></div><div class="t" style="left:-166.98px;width:2400px;text-align:center;top:273.79px;font-size:124.8px;color:#ffffff;transform:scale(0.2250,0.25);transform-origin:50% 0;-webkit-text-stroke:0.8px #ffffff;">15.4</div><div class="p" style="left:3px;top:314.6px;width:1074.06px;height:13.4px;border:none;background:#181b1f;"></div><svg class="s" style="left:6.3px;top:319.25px;" width="3" height="5" viewBox="0 0 3 5"><path d="M0.9 1L2.3 2.5L0.9 4" fill="none" stroke="#ccccdc" stroke-width="0.7"/></svg><div class="t" style="left:11.8px;top:317.99px;font-size:29.8px;color:#ccccdc;transform:scale(0.25,0.25);transform-origin:0 0;-webkit-text-stroke:0.8px #ccccdc;">Configuration</div><div class="t" style="left:64.8px;top:318.53px;font-size:20px;color:rgba(204,204,220,0.6);transform:scale(0.25,0.25);transform-origin:0 0;font-style:italic">(17 panels)</div><svg class="s" style="left:1073.2px;top:317.9px;" width="3" height="7" viewBox="0 0 3 7"><circle cx="0.6" cy="0.6" r="0.45" fill="rgba(204,204,220,0.45)"/><circle cx="0.6" cy="2.5" r="0.45" fill="rgba(204,204,220,0.45)"/><circle cx="0.6" cy="4.3999999999999995" r="0.45" fill="rgba(204,204,220,0.45)"/><circle cx="0.6" cy="6.299999999999999" r="0.45" fill="rgba(204,204,220,0.45)"/><circle cx="2.5" cy="0.6" r="0.45" fill="rgba(204,204,220,0.45)"/><circle cx="2.5" cy="2.5" r="0.45" fill="rgba(204,204,220,0.45)"/><circle cx="2.5" cy="4.3999999999999995" r="0.45" fill="rgba(204,204,220,0.45)"/><circle cx="2.5" cy="6.299999999999999" r="0.45" fill="rgba(204,204,220,0.45)"/></svg><svg class="s" style="left:5.6px;top:336.85px;" width="5" height="3" viewBox="0 0 5 3"><path d="M1 0.9L2.5 2.3L4 0.9" fill="none" stroke="#ccccdc" stroke-width="0.7"/></svg><div class="t" style="left:11.8px;top:334.19px;font-size:29.8px;color:#ccccdc;transform:scale(0.25,0.25);transform-origin:0 0;-webkit-text-stroke:0.8px #ccccdc;">Operational Stats</div><div class="p" style="left:3px;top:347.6px;width:535.38px;height:111.7px;"></div><div class="t" style="left:6.6px;top:351.99px;font-size:26.6px;color:#ccccdc;transform:scale(0.25,0.25);transform-origin:0 0;-webkit-text-stroke:0.8px #ccccdc;">CPU Usage</div><svg class="s" style="left:0;top:0" width="1080" height="462"><line x1="17.4" y1="369" x2="531.3" y2="369" stroke="rgba(204,204,220,0.08)" stroke-width="0.6"/><line x1="17.4" y1="391.3" x2="531.3" y2="391.3" stroke="rgba(204,204,220,0.08)" stroke-width="0.6"/><line x1="17.4" y1="413.4" x2="531.3" y2="413.4" stroke="rgba(204,204,220,0.08)" stroke-width="0.6"/><line x1="17.4" y1="435.6" x2="531.3" y2="435.6" stroke="rgba(204,204,220,0.08)" stroke-width="0.6"/><line x1="51" y1="369" x2="51" y2="435.6" stroke="rgba(204,204,220,0.08)" stroke-width="0.6"/><line x1="124.3" y1="369" x2="124.3" y2="435.6" stroke="rgba(204,204,220,0.08)" stroke-width="0.6"/><line x1="197.6" y1="369" x2="197.6" y2="435.6" stroke="rgba(204,204,220,0.08)" stroke-width="0.6"/><line x1="270.9" y1="369" x2="270.9" y2="435.6" stroke="rgba(204,204,220,0.08)" stroke-width="0.6"/><line x1="344.3" y1="369" x2="344.3" y2="435.6" stroke="rgba(204,204,220,0.08)" stroke-width="0.6"/><line x1="417.7" y1="369" x2="417.7" y2="435.6" stroke="rgba(204,204,220,0.08)" stroke-width="0.6"/><line x1="491.1" y1="369" x2="491.1" y2="435.6" stroke="rgba(204,204,220,0.08)" stroke-width="0.6"/><path d="M17.4 416.03 L17.95 412.93 L18.5 414 L19.05 412.02 L19.6 414.43 L20.15 416.22 L20.7 415.93 L21.25 412.16 L21.8 416.24 L22.35 414.85 L22.9 416.7 L23.45 414.17 L24 415.96 L24.55 415.35 L25.1 413.53 L25.65 412.19 L26.2 412.6 L26.75 412.79 L27.3 416.49 L27.85 415.61 L28.4 412.79 L28.95 412.73 L29.5 413.52 L30.05 414.01 L30.6 416.37 L31.15 413.67 L31.7 416.03 L32.25 413.4 L32.8 416.52 L33.35 415.31 L33.9 414.4 L34.45 413.29 L35 416.52 L35.55 416.31 L36.1 413.83 L36.65 414.89 L37.2 412.89 L37.75 413.78 L38.3 412.53 L38.85 413.46 L39.4 412.85 L39.95 414.94 L40.5 413.25 L41.05 415.21 L41.6 415.6 L42.15 415.49 L42.7 415.47 L43.25 416.66 L43.8 416.64 L44.35 416.37 L44.9 413.01 L45.45 414.17 L46 416.74 L46.55 415.92 L47.1 412.97 L47.65 412.54 L48.2 415.53 L48.75 416.06 L49.3 413.32 L49.85 415.13 L50.4 416.05 L50.95 413.08 L51.5 412.29 L52.05 413.9 L52.6 412.58 L53.15 412.57 L53.7 412.9 L54.25 416.7 L54.8 412.51 L55.35 413.11 L55.9 414.47 L56.45 414 L57 414.93 L57.55 415.88 L58.1 415.04 L58.65 413.94 L59.2 413.06 L59.75 416.45 L60.3 413.54 L60.85 415.78 L61.4 416.15 L61.95 413.67 L62.5 412.19 L63.05 413.19 L63.6 416.73 L64.15 416.41 L64.7 415.79 L65.25 415.76 L65.8 415.85 L66.35 416.36 L66.9 416.78 L67.45 416.66 L68 412.36 L68.55 416.04 L69.1 416.57 L69.65 416.11 L70.2 415.02 L70.75 414.14 L71.3 415.93 L71.85 412.64 L72.4 413.28 L72.95 413.49 L73.5 413.55 L74.05 412.02 L74.6 413.81 L75.15 413.02 L75.7 413.44 L76.25 415.4 L76.8 414.64 L77.35 415.4 L77.9 416.27 L78.45 413.81 L79 412.31 L79.55 416.81 L80.1 412.95 L80.65 413.83 L81.2 415.61 L81.75 413.31 L82.3 412.02 L82.85 413.04 L83.4 416.42 L83.95 416.24 L84.5 413.76 L85.05 414.06 L85.6 415.93 L86.15 416.06 L86.7 416.27 L87.25 415.18 L87.8 413.52 L88.35 413.78 L88.9 412.46 L89.45 414.25 L90 416.27 L90.55 414.37 L91.1 414.8 L91.65 416.75 L92.2 412.34 L92.75 416.54 L93.3 413.55 L93.85 415.73 L94.4 416.42 L94.95 416.01 L95.5 415.93 L96.05 415.17 L96.6 415.2 L97.15 414.53 L97.7 414.3 L98.25 414.91 L98.8 414.84 L99.35 414.55 L99.9 413.08 L100.45 415.08 L101 416.39 L101.55 413.02 L102.1 416.15 L102.65 412.17 L103.2 412.95 L103.75 415.73 L104.3 413.94 L104.85 416.38 L105.4 412.81 L105.95 414.52 L106.5 414.17 L107.05 414.03 L107.6 413.36 L108.15 412.74 L108.7 413.48 L109.25 415.62 L109.8 415.78 L110.35 416.03 L110.9 415.57 L111.45 413.77 L112 416.2 L112.55 415.83 L113.1 412.6 L113.65 413.71 L114.2 412.97 L114.75 414.32 L115.3 416.62 L115.85 412.31 L116.4 416.5 L116.95 414.72 L117.5 412.91 L118.05 412.56 L118.6 414.54 L119.15 414.32 L119.7 416.73 L120.25 416.01 L120.8 416.48 L121.35 416.45 L121.9 412.48 L122.45 413.72 L123 412.06 L123.55 413.37 L124.1 414.73 L124.65 416.45 L125.2 416.39 L125.75 412.71 L126.3 412.65 L126.85 416.33 L127.4 413.93 L127.95 412.12 L128.5 412.71 L129.05 414.49 L129.6 414.82 L130.15 414.23 L130.7 412.23 L131.25 412.95 L131.8 416.51 L132.35 416.35 L132.9 415.79 L133.45 412.27 L134 412.83 L134.55 416.18 L135.1 415.03 L135.65 414.14 L136.2 415.1 L136.75 415.96 L137.3 416.2 L137.85 414.21 L138.4 413.61 L138.95 413.48 L139.5 416.66 L140.05 416.69 L140.6 413.99 L141.15 412.4 L141.7 413.98 L142.25 413.39 L142.8 414.36 L143.35 413.82 L143.9 412.17 L144.45 413.2 L145 414.31 L145.55 416.8 L146.1 415.78 L146.65 412.51 L147.2 414.16 L147.75 416.41 L148.3 412.4 L148.85 413.84 L149.4 412.52 L149.95 412.86 L150.5 412.63 L151.05 412.81 L151.6 416.49 L152.15 413.49 L152.7 416.54 L153.25 414.17 L153.8 414.54 L154.35 415.89 L154.9 416.55 L155.45 412.6 L156 414.57 L156.55 412.84 L157.1 412.1 L157.65 416.18 L158.2 412.19 L158.75 416 L159.3 414.04 L159.85 415.02 L160.4 414.34 L160.95 415.77 L161.5 413.03 L162.05 414.99 L162.6 415.1 L163.15 414.65 L163.7 416.51 L164.25 415.86 L164.8 416.7 L165.35 414.95 L165.9 416.34 L166.45 413.3 L167 414.05 L167.55 413.46 L168.1 413.4 L168.65 412.65 L169.2 412.25 L169.75 413.19 L170.3 416.59 L170.85 414.11 L171.4 414.32 L171.95 414.67 L172.5 416.6 L173.05 415.44 L173.6 413.48 L174.15 413.42 L174.7 412.85 L175.25 415.33 L175.8 414.52 L176.35 416.52 L176.9 413.2 L177.45 415.78 L178 416.22 L178.55 414.06 L179.1 415.62 L179.65 415.28 L180.2 413.95 L180.75 416.18 L181.3 413.25 L181.85 412.48 L182.4 416.41 L182.95 416.61 L183.5 414.21 L184.05 415.66 L184.6 414.52 L185.15 413.2 L185.7 415.47 L186.25 416.47 L186.8 414.96 L187.35 414.15 L187.9 412.45 L188.45 413.72 L189 415.64 L189.55 413.89 L190.1 414.53 L190.65 414.6 L191.2 413.55 L191.75 412.38 L192.3 414.49 L192.85 416.46 L193.4 414.81 L193.95 413.07 L194.5 414.33 L195.05 416.35 L195.6 412.44 L196.15 414.59 L196.7 415.82 L197.25 412.03 L197.8 416.59 L198.35 414.16 L198.9 416.34 L199.45 412.89 L200 413.78 L200.55 415.77 L201.1 412.89 L201.65 414.15 L202.2 413.8 L202.75 412.18 L203.3 413.21 L203.85 415.58 L204.4 414.63 L204.95 412.33 L205.5 412.39 L206.05 413.35 L206.6 414.45 L207.15 413.97 L207.7 414.08 L208.25 416.58 L208.8 415.04 L209.35 412.13 L209.9 416.63 L210.45 412.54 L211 414.65 L211.55 415.04 L212.1 416.33 L212.65 412.94 L213.2 413.62 L213.75 415.16 L214.3 414.41 L214.85 413.01 L215.4 413.64 L215.95 414.81 L216.5 413.67 L217.05 414.08 L217.6 412.32 L218.15 416.81 L218.7 413.9 L219.25 416.45 L219.8 414.98 L220.35 414.97 L220.9 416.55 L221.45 416.17 L222 412.83 L222.55 416.78 L223.1 415.06 L223.65 414.54 L224.2 415.74 L224.75 415.12 L225.3 416.73 L225.85 413.49 L226.4 414.62 L226.95 416.74 L227.5 413.58 L228.05 413.03 L228.6 413.71 L229.15 416.4 L229.7 412.36 L230.25 412.68 L230.8 414.33 L231.35 413.14 L231.9 414.01 L232.45 415.81 L233 416.4 L233.55 413.95 L234.1 416.6 L234.65 415.76 L235.2 416.77 L235.75 415.84 L236.3 413.26 L236.85 414.16 L237.4 415.45 L237.95 412.18 L238.5 413.09 L239.05 413.06 L239.6 414.49 L240.15 412.04 L240.7 414.04 L241.25 416.53 L241.8 415.9 L242.35 413.07 L242.9 413.07 L243.45 415.6 L244 415.91 L244.55 414.57 L245.1 412.19 L245.65 414.64 L246.2 414.74 L246.75 414.77 L247.3 416.77 L247.85 413.76 L248.4 414.13 L248.95 412.52 L249.5 412.93 L250.05 413.49 L250.6 416.72 L251.15 413.88 L251.7 413.54 L252.25 415.43 L252.8 416.32 L253.35 412.64 L253.9 412.23 L254.45 415.65 L255 415.27 L255.55 413.61 L256.1 413.4 L256.65 415.8 L257.2 413.09 L257.75 414.05 L258.3 415.04 L258.85 413.32 L259.4 414.38 L259.95 414.58 L260.5 412.93 L261.05 413.42 L261.6 412.84 L262.15 416.56 L262.7 415.06 L263.25 412.5 L263.8 413.31 L264.35 414.42 L264.9 414.77 L265.45 415.02 L266 413.02 L266.55 415.03 L267.1 415.47 L267.65 413.17 L268.2 416.17 L268.75 414.05 L269.3 415.27 L269.85 414.9 L270.4 412.91 L270.95 412.65 L271.5 414.15 L272.05 412.61 L272.6 412.1 L273.15 413.85 L273.7 413.69 L274.25 416.23 L274.8 416.39 L275.35 412.82 L275.9 412.72 L276.45 415.23 L277 415.01 L277.55 416.13 L278.1 413.37 L278.65 413.06 L279.2 415.59 L279.75 415.43 L280.3 414.39 L280.85 416.32 L281.4 415.8 L281.95 415.6 L282.5 412.53 L283.05 415.55 L283.6 413.68 L284.15 415.77 L284.7 415.14 L285.25 414.74 L285.8 414.3 L286.35 413.71 L286.9 413.55 L287.45 415.78 L288 412.52 L288.55 413.87 L289.1 415.93 L289.65 415.3 L290.2 413.18 L290.75 414.8 L291.3 415.73 L291.85 415.12 L292.4 412.74 L292.95 412.99 L293.5 414.48 L294.05 412.12 L294.6 412.35 L295.15 412.63 L295.7 413.84 L296.25 415.11 L296.8 414.85 L297.35 414.64 L297.9 416.7 L298.45 412.55 L299 416 L299.55 413.03 L300.1 416.41 L300.65 412.42 L301.2 413.53 L301.75 415.63 L302.3 413.38 L302.85 413.79 L303.4 413.22 L303.95 413.45 L304.5 414.43 L305.05 414.77 L305.6 414.61 L306.15 416.2 L306.7 415.4 L307.25 413.32 L307.8 413.46 L308.35 415.87 L308.9 414.01 L309.45 414.69 L310 415.22 L310.55 415.42 L311.1 414.22 L311.65 414.77 L312.2 413.03 L312.75 413.36 L313.3 413.12 L313.85 416.34 L314.4 414.33 L314.95 414.86 L315.5 413.04 L316.05 414.26 L316.6 415.37 L317.15 414.18 L317.7 416.65 L318.25 416.15 L318.8 413.52 L319.35 415.4 L319.9 412.24 L320.45 415.82 L321 413.08 L321.55 414.25 L322.1 415.04 L322.65 413.57 L323.2 414.42 L323.75 412.4 L324.3 412.63 L324.85 415.45 L325.4 414.85 L325.95 414.66 L326.5 415.47 L327.05 416.43 L327.6 412.7 L328.15 412.05 L328.7 412.11 L329.25 415.5 L329.8 414.82 L330.35 415.74 L330.9 413.52 L331.45 413.12 L332 414.58 L332.55 415.03 L333.1 415.45 L333.65 415.02 L334.2 416.15 L334.75 414.69 L335.3 416.26 L335.85 416.13 L336.4 413.59 L336.95 415.54 L337.5 413.25 L338.05 413.3 L338.6 415.35 L339.15 416.27 L339.7 414.61 L340.25 414.86 L340.8 415.26 L341.35 414.03 L341.9 414.73 L342.45 412.42 L343 415.8 L343.55 413.27 L344.1 414.59 L344.65 413.25 L345.2 412.27 L345.75 414.98 L346.3 416.47 L346.85 415.82 L347.4 414.93 L347.95 415.71 L348.5 415.51 L349.05 414.44 L349.6 415.96 L350.15 415.07 L350.7 412.24 L351.25 416.43 L351.8 416.4 L352.35 413.23 L352.9 415.16 L353.45 415.69 L354 413.67 L354.55 415.23 L355.1 414.87 L355.65 416.65 L356.2 414.76 L356.75 415.34 L357.3 414.85 L357.85 415.32 L358.4 412.05 L358.95 415.72 L359.5 414.16 L360.05 412.38 L360.6 416.63 L361.15 416.74 L361.7 415.81 L362.25 413.41 L362.8 414.92 L363.35 415.27 L363.9 416.16 L364.45 415.06 L365 414.48 L365.55 412.88 L366.1 413.72 L366.65 415.36 L367.2 415.93 L367.75 412.33 L368.3 412.77 L368.85 412.4 L369.4 413.3 L369.95 415.11 L370.5 414.01 L371.05 415.29 L371.6 413.26 L372.15 414.82 L372.7 413.4 L373.25 416.52 L373.8 416.66 L374.35 412.64 L374.9 415.45 L375.45 413.19 L376 415 L376.55 416.55 L377.1 413.15 L377.65 414.69 L378.2 416.65 L378.75 413.01 L379.3 413.75 L379.85 415.44 L380.4 413.06 L380.95 416.23 L381.5 415.63 L382.05 415.2 L382.6 415.21 L383.15 412.6 L383.7 416.16 L384.25 412.44 L384.8 415.27 L385.35 412.83 L385.9 416.45 L386.45 415.62 L387 414.55 L387.55 416.35 L388.1 416.5 L388.65 416.32 L389.2 414.17 L389.75 415 L390.3 414.23 L390.85 415.28 L391.4 414.47 L391.95 416.3 L392.5 414.87 L393.05 413.8 L393.6 415.35 L394.15 413.74 L394.7 416.29 L395.25 414.69 L395.8 416.17 L396.35 416.68 L396.9 413.02 L397.45 413.43 L398 412.03 L398.55 415.93 L399.1 416.23 L399.65 412.09 L400.2 415.29 L400.75 412.28 L401.3 412.63 L401.85 416.25 L402.4 416.56 L402.95 414.36 L403.5 415.21 L404.05 415.6 L404.6 413.44 L405.15 416.48 L405.7 413.88 L406.25 412.88 L406.8 413.69 L407.35 415.18 L407.9 415.89 L408.45 416.37 L409 414.55 L409.55 416.62 L410.1 414.68 L410.65 416.34 L411.2 412.95 L411.75 416.7 L412.3 412.98 L412.85 413.07 L413.4 416.03 L413.95 413.53 L414.5 415.6 L415.05 412.4 L415.6 413.75 L416.15 414.14 L416.7 413.82 L417.25 416.03 L417.8 415.5 L418.35 413.39 L418.9 416.64 L419.45 415.09 L420 416.37 L420.55 412.84 L421.1 415.41 L421.65 416.53 L422.2 414.58 L422.75 413.26 L423.3 415.82 L423.85 415.84 L424.4 415.75 L424.95 413.95 L425.5 412.24 L426.05 416.44 L426.6 416.09 L427.15 413.78 L427.7 412.7 L428.25 415.67 L428.8 415.57 L429.35 415.53 L429.9 412.36 L430.45 413.92 L431 414.33 L431.55 416.39 L432.1 413.77 L432.65 414.33 L433.2 416.11 L433.75 413.52 L434.3 412.52 L434.85 415.19 L435.4 414.24 L435.95 414.71 L436.5 416.71 L437.05 415.99 L437.6 412.6 L438.15 412.13 L438.7 415.24 L439.25 414.36 L439.8 416.58 L440.35 414.75 L440.9 416.55 L441.45 415.94 L442 415.74 L442.55 413.29 L443.1 413.44 L443.65 416.19 L444.2 415.39 L444.75 415.13 L445.3 412.24 L445.85 412.37 L446.4 414.01 L446.95 413.26 L447.5 415.75 L448.05 416.35 L448.6 412.22 L449.15 413.24 L449.7 414.86 L450.25 415.51 L450.8 413.02 L451.35 414.32 L451.9 416.12 L452.45 416.33 L453 415.91 L453.55 414.04 L454.1 414.58 L454.65 414.18 L455.2 413.93 L455.75 415.16 L456.3 413.2 L456.85 416.81 L457.4 416.47 L457.95 413.86 L458.5 415.99 L459.05 416.8 L459.6 412.56 L460.15 415.76 L460.7 415.01 L461.25 412.94 L461.8 414.76 L462.35 412.88 L462.9 416.65 L463.45 413.05 L464 416.06 L464.55 414.8 L465.1 416.13 L465.65 413.4 L466.2 416.4 L466.75 414.41 L467.3 414.76 L467.85 416.71 L468.4 414.92 L468.95 416.08 L469.5 415.78 L470.05 412.24 L470.6 415.97 L471.15 412.72 L471.7 413.88 L472.25 412.5 L472.8 413.53 L473.35 412.6 L473.9 415.2 L474.45 415.16 L475 415.43 L475.55 415.34 L476.1 414.5 L476.65 413.69 L477.2 415.08 L477.75 412.7 L478.3 414.85 L478.85 415.69 L479.4 412.54 L479.95 413.03 L480.5 416.21 L481.05 413.96 L481.6 413.28 L482.15 413.03 L482.7 412.73 L483.25 414.12 L483.8 413.72 L484.35 415.94 L484.9 412.82 L485.45 413.38 L486 413.26 L486.55 416.19 L487.1 415.14 L487.65 412.09 L488.2 414.56 L488.75 416.08 L489.3 413.36 L489.85 415.53 L490.4 413.75 L490.95 413.53 L491.5 413.02 L492.05 414.34 L492.6 415.74 L493.15 413.48 L493.7 416.15 L494.25 413.07 L494.8 413.59 L495.35 416.57 L495.9 414.97 L496.45 413.59 L497 414.76 L497.55 416.18 L498.1 416.08 L498.65 414.91 L499.2 414.36 L499.75 415.88 L500.3 412.61 L500.85 415.27 L501.4 414.82 L501.95 414.95 L502.5 413.56 L503.05 413.54 L503.6 412.9 L504.15 415.1 L504.7 414.98 L505.25 412.49 L505.8 413.01 L506.35 414.28 L506.9 412.21 L507.45 413.7 L508 414.7 L508.55 412.8 L509.1 414.55 L509.65 412.91 L510.2 412.7 L510.75 416.28 L511.3 415.36 L511.85 414.51 L512.4 413.03 L512.95 414.13 L513.5 415.16 L514.05 415.65 L514.6 412.03 L515.15 414.46 L515.7 412.05 L516.25 414.68 L516.8 413.27 L517.35 413.48 L517.9 413.48 L518.45 415 L519 416.52 L519.55 416.63 L520.1 412.12 L520.65 413.23 L521.2 413.92 L521.75 412.47 L522.3 413.95 L522.85 415.35 L523.4 414.3 L523.95 414.33 L524.5 415.02 L525.05 413.43 L525.6 412.67 L526.15 414.52 L526.7 414.59 L527.25 414.25 L527.8 412.84 L528.35 415.25 L528.9 413.16 L529.45 414.25 L530 413.17 L530.55 415.89 L531.1 414.18 L531.1 435.6 L530.55 435.6 L530 435.6 L529.45 435.6 L528.9 435.6 L528.35 435.6 L527.8 435.6 L527.25 435.6 L526.7 435.6 L526.15 435.6 L525.6 435.6 L525.05 435.6 L524.5 435.6 L523.95 435.6 L523.4 435.6 L522.85 435.6 L522.3 435.6 L521.75 435.6 L521.2 435.6 L520.65 435.6 L520.1 435.6 L519.55 435.6 L519 435.6 L518.45 435.6 L517.9 435.6 L517.35 435.6 L516.8 435.6 L516.25 435.6 L515.7 435.6 L515.15 435.6 L514.6 435.6 L514.05 435.6 L513.5 435.6 L512.95 435.6 L512.4 435.6 L511.85 435.6 L511.3 435.6 L510.75 435.6 L510.2 435.6 L509.65 435.6 L509.1 435.6 L508.55 435.6 L508 435.6 L507.45 435.6 L506.9 435.6 L506.35 435.6 L505.8 435.6 L505.25 435.6 L504.7 435.6 L504.15 435.6 L503.6 435.6 L503.05 435.6 L502.5 435.6 L501.95 435.6 L501.4 435.6 L500.85 435.6 L500.3 435.6 L499.75 435.6 L499.2 435.6 L498.65 435.6 L498.1 435.6 L497.55 435.6 L497 435.6 L496.45 435.6 L495.9 435.6 L495.35 435.6 L494.8 435.6 L494.25 435.6 L493.7 435.6 L493.15 435.6 L492.6 435.6 L492.05 435.6 L491.5 435.6 L490.95 435.6 L490.4 435.6 L489.85 435.6 L489.3 435.6 L488.75 435.6 L488.2 435.6 L487.65 435.6 L487.1 435.6 L486.55 435.6 L486 435.6 L485.45 435.6 L484.9 435.6 L484.35 435.6 L483.8 435.6 L483.25 435.6 L482.7 435.6 L482.15 435.6 L481.6 435.6 L481.05 435.6 L480.5 435.6 L479.95 435.6 L479.4 435.6 L478.85 435.6 L478.3 435.6 L477.75 435.6 L477.2 435.6 L476.65 435.6 L476.1 435.6 L475.55 435.6 L475 435.6 L474.45 435.6 L473.9 435.6 L473.35 435.6 L472.8 435.6 L472.25 435.6 L471.7 435.6 L471.15 435.6 L470.6 435.6 L470.05 435.6 L469.5 435.6 L468.95 435.6 L468.4 435.6 L467.85 435.6 L467.3 435.6 L466.75 435.6 L466.2 435.6 L465.65 435.6 L465.1 435.6 L464.55 435.6 L464 435.6 L463.45 435.6 L462.9 435.6 L462.35 435.6 L461.8 435.6 L461.25 435.6 L460.7 435.6 L460.15 435.6 L459.6 435.6 L459.05 435.6 L458.5 435.6 L457.95 435.6 L457.4 435.6 L456.85 435.6 L456.3 435.6 L455.75 435.6 L455.2 435.6 L454.65 435.6 L454.1 435.6 L453.55 435.6 L453 435.6 L452.45 435.6 L451.9 435.6 L451.35 435.6 L450.8 435.6 L450.25 435.6 L449.7 435.6 L449.15 435.6 L448.6 435.6 L448.05 435.6 L447.5 435.6 L446.95 435.6 L446.4 435.6 L445.85 435.6 L445.3 435.6 L444.75 435.6 L444.2 435.6 L443.65 435.6 L443.1 435.6 L442.55 435.6 L442 435.6 L441.45 435.6 L440.9 435.6 L440.35 435.6 L439.8 435.6 L439.25 435.6 L438.7 435.6 L438.15 435.6 L437.6 435.6 L437.05 435.6 L436.5 435.6 L435.95 435.6 L435.4 435.6 L434.85 435.6 L434.3 435.6 L433.75 435.6 L433.2 435.6 L432.65 435.6 L432.1 435.6 L431.55 435.6 L431 435.6 L430.45 435.6 L429.9 435.6 L429.35 435.6 L428.8 435.6 L428.25 435.6 L427.7 435.6 L427.15 435.6 L426.6 435.6 L426.05 435.6 L425.5 435.6 L424.95 435.6 L424.4 435.6 L423.85 435.6 L423.3 435.6 L422.75 435.6 L422.2 435.6 L421.65 435.6 L421.1 435.6 L420.55 435.6 L420 435.6 L419.45 435.6 L418.9 435.6 L418.35 435.6 L417.8 435.6 L417.25 435.6 L416.7 435.6 L416.15 435.6 L415.6 435.6 L415.05 435.6 L414.5 435.6 L413.95 435.6 L413.4 435.6 L412.85 435.6 L412.3 435.6 L411.75 435.6 L411.2 435.6 L410.65 435.6 L410.1 435.6 L409.55 435.6 L409 435.6 L408.45 435.6 L407.9 435.6 L407.35 435.6 L406.8 435.6 L406.25 435.6 L405.7 435.6 L405.15 435.6 L404.6 435.6 L404.05 435.6 L403.5 435.6 L402.95 435.6 L402.4 435.6 L401.85 435.6 L401.3 435.6 L400.75 435.6 L400.2 435.6 L399.65 435.6 L399.1 435.6 L398.55 435.6 L398 435.6 L397.45 435.6 L396.9 435.6 L396.35 435.6 L395.8 435.6 L395.25 435.6 L394.7 435.6 L394.15 435.6 L393.6 435.6 L393.05 435.6 L392.5 435.6 L391.95 435.6 L391.4 435.6 L390.85 435.6 L390.3 435.6 L389.75 435.6 L389.2 435.6 L388.65 435.6 L388.1 435.6 L387.55 435.6 L387 435.6 L386.45 435.6 L385.9 435.6 L385.35 435.6 L384.8 435.6 L384.25 435.6 L383.7 435.6 L383.15 435.6 L382.6 435.6 L382.05 435.6 L381.5 435.6 L380.95 435.6 L380.4 435.6 L379.85 435.6 L379.3 435.6 L378.75 435.6 L378.2 435.6 L377.65 435.6 L377.1 435.6 L376.55 435.6 L376 435.6 L375.45 435.6 L374.9 435.6 L374.35 435.6 L373.8 435.6 L373.25 435.6 L372.7 435.6 L372.15 435.6 L371.6 435.6 L371.05 435.6 L370.5 435.6 L369.95 435.6 L369.4 435.6 L368.85 435.6 L368.3 435.6 L367.75 435.6 L367.2 435.6 L366.65 435.6 L366.1 435.6 L365.55 435.6 L365 435.6 L364.45 435.6 L363.9 435.6 L363.35 435.6 L362.8 435.6 L362.25 435.6 L361.7 435.6 L361.15 435.6 L360.6 435.6 L360.05 435.6 L359.5 435.6 L358.95 435.6 L358.4 435.6 L357.85 435.6 L357.3 435.6 L356.75 435.6 L356.2 435.6 L355.65 435.6 L355.1 435.6 L354.55 435.6 L354 435.6 L353.45 435.6 L352.9 435.6 L352.35 435.6 L351.8 435.6 L351.25 435.6 L350.7 435.6 L350.15 435.6 L349.6 435.6 L349.05 435.6 L348.5 435.6 L347.95 435.6 L347.4 435.6 L346.85 435.6 L346.3 435.6 L345.75 435.6 L345.2 435.6 L344.65 435.6 L344.1 435.6 L343.55 435.6 L343 435.6 L342.45 435.6 L341.9 435.6 L341.35 435.6 L340.8 435.6 L340.25 435.6 L339.7 435.6 L339.15 435.6 L338.6 435.6 L338.05 435.6 L337.5 435.6 L336.95 435.6 L336.4 435.6 L335.85 435.6 L335.3 435.6 L334.75 435.6 L334.2 435.6 L333.65 435.6 L333.1 435.6 L332.55 435.6 L332 435.6 L331.45 435.6 L330.9 435.6 L330.35 435.6 L329.8 435.6 L329.25 435.6 L328.7 435.6 L328.15 435.6 L327.6 435.6 L327.05 435.6 L326.5 435.6 L325.95 435.6 L325.4 435.6 L324.85 435.6 L324.3 435.6 L323.75 435.6 L323.2 435.6 L322.65 435.6 L322.1 435.6 L321.55 435.6 L321 435.6 L320.45 435.6 L319.9 435.6 L319.35 435.6 L318.8 435.6 L318.25 435.6 L317.7 435.6 L317.15 435.6 L316.6 435.6 L316.05 435.6 L315.5 435.6 L314.95 435.6 L314.4 435.6 L313.85 435.6 L313.3 435.6 L312.75 435.6 L312.2 435.6 L311.65 435.6 L311.1 435.6 L310.55 435.6 L310 435.6 L309.45 435.6 L308.9 435.6 L308.35 435.6 L307.8 435.6 L307.25 435.6 L306.7 435.6 L306.15 435.6 L305.6 435.6 L305.05 435.6 L304.5 435.6 L303.95 435.6 L303.4 435.6 L302.85 435.6 L302.3 435.6 L301.75 435.6 L301.2 435.6 L300.65 435.6 L300.1 435.6 L299.55 435.6 L299 435.6 L298.45 435.6 L297.9 435.6 L297.35 435.6 L296.8 435.6 L296.25 435.6 L295.7 435.6 L295.15 435.6 L294.6 435.6 L294.05 435.6 L293.5 435.6 L292.95 435.6 L292.4 435.6 L291.85 435.6 L291.3 435.6 L290.75 435.6 L290.2 435.6 L289.65 435.6 L289.1 435.6 L288.55 435.6 L288 435.6 L287.45 435.6 L286.9 435.6 L286.35 435.6 L285.8 435.6 L285.25 435.6 L284.7 435.6 L284.15 435.6 L283.6 435.6 L283.05 435.6 L282.5 435.6 L281.95 435.6 L281.4 435.6 L280.85 435.6 L280.3 435.6 L279.75 435.6 L279.2 435.6 L278.65 435.6 L278.1 435.6 L277.55 435.6 L277 435.6 L276.45 435.6 L275.9 435.6 L275.35 435.6 L274.8 435.6 L274.25 435.6 L273.7 435.6 L273.15 435.6 L272.6 435.6 L272.05 435.6 L271.5 435.6 L270.95 435.6 L270.4 435.6 L269.85 435.6 L269.3 435.6 L268.75 435.6 L268.2 435.6 L267.65 435.6 L267.1 435.6 L266.55 435.6 L266 435.6 L265.45 435.6 L264.9 435.6 L264.35 435.6 L263.8 435.6 L263.25 435.6 L262.7 435.6 L262.15 435.6 L261.6 435.6 L261.05 435.6 L260.5 435.6 L259.95 435.6 L259.4 435.6 L258.85 435.6 L258.3 435.6 L257.75 435.6 L257.2 435.6 L256.65 435.6 L256.1 435.6 L255.55 435.6 L255 435.6 L254.45 435.6 L253.9 435.6 L253.35 435.6 L252.8 435.6 L252.25 435.6 L251.7 435.6 L251.15 435.6 L250.6 435.6 L250.05 435.6 L249.5 435.6 L248.95 435.6 L248.4 435.6 L247.85 435.6 L247.3 435.6 L246.75 435.6 L246.2 435.6 L245.65 435.6 L245.1 435.6 L244.55 435.6 L244 435.6 L243.45 435.6 L242.9 435.6 L242.35 435.6 L241.8 435.6 L241.25 435.6 L240.7 435.6 L240.15 435.6 L239.6 435.6 L239.05 435.6 L238.5 435.6 L237.95 435.6 L237.4 435.6 L236.85 435.6 L236.3 435.6 L235.75 435.6 L235.2 435.6 L234.65 435.6 L234.1 435.6 L233.55 435.6 L233 435.6 L232.45 435.6 L231.9 435.6 L231.35 435.6 L230.8 435.6 L230.25 435.6 L229.7 435.6 L229.15 435.6 L228.6 435.6 L228.05 435.6 L227.5 435.6 L226.95 435.6 L226.4 435.6 L225.85 435.6 L225.3 435.6 L224.75 435.6 L224.2 435.6 L223.65 435.6 L223.1 435.6 L222.55 435.6 L222 435.6 L221.45 435.6 L220.9 435.6 L220.35 435.6 L219.8 435.6 L219.25 435.6 L218.7 435.6 L218.15 435.6 L217.6 435.6 L217.05 435.6 L216.5 435.6 L215.95 435.6 L215.4 435.6 L214.85 435.6 L214.3 435.6 L213.75 435.6 L213.2 435.6 L212.65 435.6 L212.1 435.6 L211.55 435.6 L211 435.6 L210.45 435.6 L209.9 435.6 L209.35 435.6 L208.8 435.6 L208.25 435.6 L207.7 435.6 L207.15 435.6 L206.6 435.6 L206.05 435.6 L205.5 435.6 L204.95 435.6 L204.4 435.6 L203.85 435.6 L203.3 435.6 L202.75 435.6 L202.2 435.6 L201.65 435.6 L201.1 435.6 L200.55 435.6 L200 435.6 L199.45 435.6 L198.9 435.6 L198.35 435.6 L197.8 435.6 L197.25 435.6 L196.7 435.6 L196.15 435.6 L195.6 435.6 L195.05 435.6 L194.5 435.6 L193.95 435.6 L193.4 435.6 L192.85 435.6 L192.3 435.6 L191.75 435.6 L191.2 435.6 L190.65 435.6 L190.1 435.6 L189.55 435.6 L189 435.6 L188.45 435.6 L187.9 435.6 L187.35 435.6 L186.8 435.6 L186.25 435.6 L185.7 435.6 L185.15 435.6 L184.6 435.6 L184.05 435.6 L183.5 435.6 L182.95 435.6 L182.4 435.6 L181.85 435.6 L181.3 435.6 L180.75 435.6 L180.2 435.6 L179.65 435.6 L179.1 435.6 L178.55 435.6 L178 435.6 L177.45 435.6 L176.9 435.6 L176.35 435.6 L175.8 435.6 L175.25 435.6 L174.7 435.6 L174.15 435.6 L173.6 435.6 L173.05 435.6 L172.5 435.6 L171.95 435.6 L171.4 435.6 L170.85 435.6 L170.3 435.6 L169.75 435.6 L169.2 435.6 L168.65 435.6 L168.1 435.6 L167.55 435.6 L167 435.6 L166.45 435.6 L165.9 435.6 L165.35 435.6 L164.8 435.6 L164.25 435.6 L163.7 435.6 L163.15 435.6 L162.6 435.6 L162.05 435.6 L161.5 435.6 L160.95 435.6 L160.4 435.6 L159.85 435.6 L159.3 435.6 L158.75 435.6 L158.2 435.6 L157.65 435.6 L157.1 435.6 L156.55 435.6 L156 435.6 L155.45 435.6 L154.9 435.6 L154.35 435.6 L153.8 435.6 L153.25 435.6 L152.7 435.6 L152.15 435.6 L151.6 435.6 L151.05 435.6 L150.5 435.6 L149.95 435.6 L149.4 435.6 L148.85 435.6 L148.3 435.6 L147.75 435.6 L147.2 435.6 L146.65 435.6 L146.1 435.6 L145.55 435.6 L145 435.6 L144.45 435.6 L143.9 435.6 L143.35 435.6 L142.8 435.6 L142.25 435.6 L141.7 435.6 L141.15 435.6 L140.6 435.6 L140.05 435.6 L139.5 435.6 L138.95 435.6 L138.4 435.6 L137.85 435.6 L137.3 435.6 L136.75 435.6 L136.2 435.6 L135.65 435.6 L135.1 435.6 L134.55 435.6 L134 435.6 L133.45 435.6 L132.9 435.6 L132.35 435.6 L131.8 435.6 L131.25 435.6 L130.7 435.6 L130.15 435.6 L129.6 435.6 L129.05 435.6 L128.5 435.6 L127.95 435.6 L127.4 435.6 L126.85 435.6 L126.3 435.6 L125.75 435.6 L125.2 435.6 L124.65 435.6 L124.1 435.6 L123.55 435.6 L123 435.6 L122.45 435.6 L121.9 435.6 L121.35 435.6 L120.8 435.6 L120.25 435.6 L119.7 435.6 L119.15 435.6 L118.6 435.6 L118.05 435.6 L117.5 435.6 L116.95 435.6 L116.4 435.6 L115.85 435.6 L115.3 435.6 L114.75 435.6 L114.2 435.6 L113.65 435.6 L113.1 435.6 L112.55 435.6 L112 435.6 L111.45 435.6 L110.9 435.6 L110.35 435.6 L109.8 435.6 L109.25 435.6 L108.7 435.6 L108.15 435.6 L107.6 435.6 L107.05 435.6 L106.5 435.6 L105.95 435.6 L105.4 435.6 L104.85 435.6 L104.3 435.6 L103.75 435.6 L103.2 435.6 L102.65 435.6 L102.1 435.6 L101.55 435.6 L101 435.6 L100.45 435.6 L99.9 435.6 L99.35 435.6 L98.8 435.6 L98.25 435.6 L97.7 435.6 L97.15 435.6 L96.6 435.6 L96.05 435.6 L95.5 435.6 L94.95 435.6 L94.4 435.6 L93.85 435.6 L93.3 435.6 L92.75 435.6 L92.2 435.6 L91.65 435.6 L91.1 435.6 L90.55 435.6 L90 435.6 L89.45 435.6 L88.9 435.6 L88.35 435.6 L87.8 435.6 L87.25 435.6 L86.7 435.6 L86.15 435.6 L85.6 435.6 L85.05 435.6 L84.5 435.6 L83.95 435.6 L83.4 435.6 L82.85 435.6 L82.3 435.6 L81.75 435.6 L81.2 435.6 L80.65 435.6 L80.1 435.6 L79.55 435.6 L79 435.6 L78.45 435.6 L77.9 435.6 L77.35 435.6 L76.8 435.6 L76.25 435.6 L75.7 435.6 L75.15 435.6 L74.6 435.6 L74.05 435.6 L73.5 435.6 L72.95 435.6 L72.4 435.6 L71.85 435.6 L71.3 435.6 L70.75 435.6 L70.2 435.6 L69.65 435.6 L69.1 435.6 L68.55 435.6 L68 435.6 L67.45 435.6 L66.9 435.6 L66.35 435.6 L65.8 435.6 L65.25 435.6 L64.7 435.6 L64.15 435.6 L63.6 435.6 L63.05 435.6 L62.5 435.6 L61.95 435.6 L61.4 435.6 L60.85 435.6 L60.3 435.6 L59.75 435.6 L59.2 435.6 L58.65 435.6 L58.1 435.6 L57.55 435.6 L57 435.6 L56.45 435.6 L55.9 435.6 L55.35 435.6 L54.8 435.6 L54.25 435.6 L53.7 435.6 L53.15 435.6 L52.6 435.6 L52.05 435.6 L51.5 435.6 L50.95 435.6 L50.4 435.6 L49.85 435.6 L49.3 435.6 L48.75 435.6 L48.2 435.6 L47.65 435.6 L47.1 435.6 L46.55 435.6 L46 435.6 L45.45 435.6 L44.9 435.6 L44.35 435.6 L43.8 435.6 L43.25 435.6 L42.7 435.6 L42.15 435.6 L41.6 435.6 L41.05 435.6 L40.5 435.6 L39.95 435.6 L39.4 435.6 L38.85 435.6 L38.3 435.6 L37.75 435.6 L37.2 435.6 L36.65 435.6 L36.1 435.6 L35.55 435.6 L35 435.6 L34.45 435.6 L33.9 435.6 L33.35 435.6 L32.8 435.6 L32.25 435.6 L31.7 435.6 L31.15 435.6 L30.6 435.6 L30.05 435.6 L29.5 435.6 L28.95 435.6 L28.4 435.6 L27.85 435.6 L27.3 435.6 L26.75 435.6 L26.2 435.6 L25.65 435.6 L25.1 435.6 L24.55 435.6 L24 435.6 L23.45 435.6 L22.9 435.6 L22.35 435.6 L21.8 435.6 L21.25 435.6 L20.7 435.6 L20.15 435.6 L19.6 435.6 L19.05 435.6 L18.5 435.6 L17.95 435.6 L17.4 435.6 Z" fill="#73bf69"/><path d="M17.4 406.52 L17.95 405.89 L18.5 407.91 L19.05 404.65 L19.6 407.98 L20.15 405.55 L20.7 408.99 L21.25 404.14 L21.8 407.49 L22.35 407.32 L22.9 409.16 L23.45 405.56 L24 408.54 L24.55 408.48 L25.1 405.57 L25.65 405.26 L26.2 406.86 L26.75 407.29 L27.3 408.14 L27.85 405.21 L28.4 404.79 L28.95 406.47 L29.5 404.46 L30.05 407.29 L30.6 409 L31.15 407.55 L31.7 408.52 L32.25 404.74 L32.8 406.38 L33.35 408.67 L33.9 406.43 L34.45 404.32 L35 406.16 L35.55 409.04 L36.1 407.97 L36.65 407.84 L37.2 405.1 L37.75 404.53 L38.3 404.74 L38.85 405.51 L39.4 404.16 L39.95 408.14 L40.5 406.22 L41.05 406.41 L41.6 405.7 L42.15 407.55 L42.7 408.29 L43.25 406.22 L43.8 407.1 L44.35 408.2 L44.9 404.78 L45.45 407.48 L46 407.25 L46.55 408.91 L47.1 406.5 L47.65 407.09 L48.2 408.72 L48.75 408.82 L49.3 406.03 L49.85 406.81 L50.4 405.83 L50.95 404.49 L51.5 404.03 L52.05 403.45 L52.6 391.64 L53.15 389.89 L53.7 391.39 L54.25 391.18 L54.8 390.43 L55.35 390.26 L55.9 389.9 L56.45 388.43 L57 389.56 L57.55 388.56 L58.1 389.55 L58.65 388.42 L59.2 390.42 L59.75 391.28 L60.3 390.8 L60.85 388.96 L61.4 390.32 L61.95 391.08 L62.5 392.05 L63.05 391.95 L63.6 392.27 L64.15 392.38 L64.7 390.53 L65.25 390.3 L65.8 390.57 L66.35 389.81 L66.9 390.45 L67.45 389.42 L68 388.76 L68.55 390.25 L69.1 388.65 L69.65 390.06 L70.2 388.87 L70.75 390.43 L71.3 391.18 L71.85 388.94 L72.4 389.1 L72.95 388.13 L73.5 387.83 L74.05 390.78 L74.6 389.22 L75.15 387.33 L75.7 394.83 L76.25 404.37 L76.8 398.95 L77.35 400.62 L77.9 405.58 L78.45 407.01 L79 406.11 L79.55 408.26 L80.1 407.02 L80.65 407.5 L81.2 408.21 L81.75 406.98 L82.3 406.76 L82.85 407.03 L83.4 406.56 L83.95 406.11 L84.5 405.84 L85.05 406.95 L85.6 408.05 L86.15 407.67 L86.7 407.27 L87.25 407.74 L87.8 406.85 L88.35 404.67 L88.9 406.98 L89.45 407.44 L90 408.22 L90.55 406.39 L91.1 406.07 L91.65 408.43 L92.2 405.19 L92.75 408.06 L93.3 404.46 L93.85 406.07 L94.4 405.48 L94.95 407.71 L95.5 406.92 L96.05 406.27 L96.6 408.37 L97.15 408.13 L97.7 407.46 L98.25 406.22 L98.8 406.25 L99.35 407.51 L99.9 406.41 L100.45 405.75 L101 408.34 L101.55 404.19 L102.1 407.17 L102.65 405.51 L103.2 406.29 L103.75 408.04 L104.3 406.04 L104.85 407.11 L105.4 406.72 L105.95 406.08 L106.5 406.17 L107.05 407.26 L107.6 407.37 L108.15 406.21 L108.7 405.14 L109.25 407.19 L109.8 408.5 L110.35 407.19 L110.9 408.81 L111.45 407.36 L112 407.98 L112.55 405.89 L113.1 406.54 L113.65 406.95 L114.2 407.08 L114.75 406.82 L115.3 407.62 L115.85 406.33 L116.4 408.16 L116.95 405.99 L117.5 405.12 L118.05 404.64 L118.6 404.74 L119.15 405.45 L119.7 406.92 L120.25 406.39 L120.8 407.01 L121.35 405.79 L121.9 406.69 L122.45 406.85 L123 404.49 L123.55 406.96 L124.1 404.81 L124.65 406.86 L125.2 405.91 L125.75 406.27 L126.3 405 L126.85 408.02 L127.4 406.6 L127.95 405.98 L128.5 407.19 L129.05 408.19 L129.6 406.2 L130.15 405.95 L130.7 405.77 L131.25 406.61 L131.8 409.39 L132.35 406.1 L132.9 406.02 L133.45 403.98 L134 406.72 L134.55 408.51 L135.1 405.99 L135.65 405.13 L136.2 407.92 L136.75 407.79 L137.3 406.72 L137.85 404.62 L138.4 405.43 L138.95 406.31 L139.5 407.49 L140.05 409.03 L140.6 407.12 L141.15 406.77 L141.7 407.83 L142.25 406.43 L142.8 398.97 L143.35 394.45 L143.9 397.47 L144.45 404.06 L145 407.3 L145.55 406.31 L146.1 405.72 L146.65 402.91 L147.2 400.16 L147.75 402.67 L148.3 402.93 L148.85 404.71 L149.4 406.74 L149.95 406.19 L150.5 404.39 L151.05 404.55 L151.6 400.87 L152.15 398.69 L152.7 405.2 L153.25 407.9 L153.8 405.41 L154.35 407.1 L154.9 407.5 L155.45 406.02 L156 407.82 L156.55 401.97 L157.1 396.62 L157.65 401.26 L158.2 402.94 L158.75 408.52 L159.3 406.91 L159.85 406.48 L160.4 405.2 L160.95 406.31 L161.5 406.17 L162.05 408.2 L162.6 407.01 L163.15 408.05 L163.7 407.69 L164.25 407.48 L164.8 408.75 L165.35 405.33 L165.9 408.09 L166.45 405.42 L167 404.71 L167.55 405.7 L168.1 403.54 L168.65 396.5 L169.2 395.61 L169.75 399.74 L170.3 405.68 L170.85 408.1 L171.4 407.77 L171.95 405.94 L172.5 408.84 L173.05 408.3 L173.6 401.12 L174.15 398.4 L174.7 399.48 L175.25 405.05 L175.8 405.37 L176.35 406.63 L176.9 404.32 L177.45 408.81 L178 406.54 L178.55 397.92 L179.1 396.64 L179.65 401.47 L180.2 407.37 L180.75 408.85 L181.3 407.37 L181.85 406.98 L182.4 407.98 L182.95 405.84 L183.5 408.08 L184.05 407.58 L184.6 405.08 L185.15 406.53 L185.7 406.32 L186.25 408.41 L186.8 406.61 L187.35 406.96 L187.9 406.61 L188.45 404.49 L189 407.65 L189.55 404.53 L190.1 408.11 L190.65 405.7 L191.2 407.05 L191.75 403.85 L192.3 405.41 L192.85 408.95 L193.4 405.16 L193.95 405.64 L194.5 406.83 L195.05 407.18 L195.6 407.04 L196.15 408.34 L196.7 406.55 L197.25 406.89 L197.8 406.99 L198.35 408.11 L198.9 408.48 L199.45 404.93 L200 405.08 L200.55 407.23 L201.1 404.65 L201.65 408.14 L202.2 406.98 L202.75 404.67 L203.3 405.93 L203.85 405.04 L204.4 407.54 L204.95 406.39 L205.5 405.45 L206.05 406.28 L206.6 406.17 L207.15 405.53 L207.7 405.29 L208.25 407.51 L208.8 408.43 L209.35 406.17 L209.9 406.28 L210.45 405.55 L211 408.31 L211.55 406.26 L212.1 408.6 L212.65 404.93 L213.2 404.48 L213.75 407.72 L214.3 404.91 L214.85 404.41 L215.4 406.66 L215.95 407.94 L216.5 404.59 L217.05 406.45 L217.6 404.41 L218.15 407.33 L218.7 405.41 L219.25 408.73 L219.8 408.04 L220.35 405.52 L220.9 409.18 L221.45 406.93 L222 405.77 L222.55 405.55 L223.1 406.51 L223.65 405 L224.2 393.33 L224.75 390.98 L225.3 390.78 L225.85 391.09 L226.4 389.77 L226.95 392.28 L227.5 391.6 L228.05 390.57 L228.6 389.42 L229.15 390.45 L229.7 390.18 L230.25 389.37 L230.8 391.24 L231.35 390.51 L231.9 390.92 L232.45 392.16 L233 390.73 L233.55 391.93 L234.1 391.47 L234.65 389.26 L235.2 391.1 L235.75 390.77 L236.3 388.98 L236.85 390.62 L237.4 391.4 L237.95 390.11 L238.5 390.44 L239.05 389.96 L239.6 389.75 L240.15 390.54 L240.7 390.17 L241.25 391.34 L241.8 391.22 L242.35 390.52 L242.9 390.28 L243.45 391.99 L244 391.73 L244.55 390 L245.1 390.97 L245.65 390.76 L246.2 390.92 L246.75 388.85 L247.3 390.18 L247.85 390.72 L248.4 389.68 L248.95 390.35 L249.5 390.22 L250.05 389.74 L250.6 390.22 L251.15 390.16 L251.7 389.19 L252.25 391.8 L252.8 389.62 L253.35 389.94 L253.9 392.15 L254.45 407.96 L255 406.51 L255.55 406.05 L256.1 406.74 L256.65 406.01 L257.2 406.8 L257.75 405.96 L258.3 404.96 L258.85 405.92 L259.4 407.9 L259.95 408.15 L260.5 405.42 L261.05 407.68 L261.6 406.51 L262.15 408.63 L262.7 407.02 L263.25 406.45 L263.8 405.52 L264.35 405.77 L264.9 406.16 L265.45 408.08 L266 405.67 L266.55 405.69 L267.1 406.98 L267.65 406.25 L268.2 407.54 L268.75 406.12 L269.3 407.81 L269.85 407.26 L270.4 404.65 L270.95 405.91 L271.5 407.58 L272.05 406.49 L272.6 406.52 L273.15 405.43 L273.7 407.61 L274.25 408.2 L274.8 408.2 L275.35 407.3 L275.9 406.28 L276.45 406.42 L277 405.17 L277.55 407.17 L278.1 407.63 L278.65 406.55 L279.2 406.3 L279.75 407.46 L280.3 406.54 L280.85 408.82 L281.4 406.21 L281.95 407.14 L282.5 406.04 L283.05 408 L283.6 407.93 L284.15 405.58 L284.7 408.64 L285.25 406.31 L285.8 405.83 L286.35 404.6 L286.9 405.69 L287.45 409.01 L288 404.33 L288.55 407.17 L289.1 408.1 L289.65 406.85 L290.2 406.9 L290.75 406.37 L291.3 406.94 L291.85 408.03 L292.4 407.14 L292.95 404.23 L293.5 407.98 L294.05 405.29 L294.6 406.93 L295.15 405.86 L295.7 406.04 L296.25 407.78 L296.8 406.55 L297.35 408.31 L297.9 408.32 L298.45 405.86 L299 405.44 L299.55 405.74 L300.1 405.83 L300.65 405.17 L301.2 405.7 L301.75 407.88 L302.3 406.25 L302.85 406.96 L303.4 406.48 L303.95 407.01 L304.5 405.95 L305.05 406.24 L305.6 405.56 L306.15 405.45 L306.7 407.92 L307.25 406.66 L307.8 407.09 L308.35 408.85 L308.9 405.22 L309.45 406.74 L310 407.27 L310.55 408.42 L311.1 404.89 L311.65 408.08 L312.2 406.05 L312.75 407.66 L313.3 405.05 L313.85 407.8 L314.4 406.47 L314.95 406.58 L315.5 404.78 L316.05 405.99 L316.6 406.25 L317.15 407.15 L317.7 405.72 L318.25 405.8 L318.8 406.21 L319.35 405.03 L319.9 405.49 L320.45 408.89 L321 404.63 L321.55 407.87 L322.1 408.02 L322.65 404.53 L323.2 408.09 L323.75 404.29 L324.3 406.6 L324.85 407.17 L325.4 407.31 L325.95 406.69 L326.5 405.85 L327.05 405.7 L327.6 406.21 L328.15 406.7 L328.7 404.43 L329.25 406.82 L329.8 407.63 L330.35 405.19 L330.9 405.36 L331.45 404.57 L332 408.11 L332.55 407.54 L333.1 406.52 L333.65 405.05 L334.2 408.81 L334.75 405.22 L335.3 408.64 L335.85 406.82 L336.4 404.68 L336.95 407.96 L337.5 406.44 L338.05 405.35 L338.6 407.97 L339.15 407.09 L339.7 408.41 L340.25 408.57 L340.8 405.3 L341.35 405.98 L341.9 408.4 L342.45 405.35 L343 405.95 L343.55 406.91 L344.1 406.6 L344.65 404.85 L345.2 405.07 L345.75 406.02 L346.3 405.46 L346.85 406.41 L347.4 407.8 L347.95 408.26 L348.5 408.47 L349.05 405.28 L349.6 408.43 L350.15 407.82 L350.7 405.84 L351.25 405.73 L351.8 407.44 L352.35 404.36 L352.9 407.32 L353.45 408.96 L354 407.52 L354.55 408.64 L355.1 405.32 L355.65 408.16 L356.2 404.93 L356.75 406.17 L357.3 404.93 L357.85 407.98 L358.4 406.4 L358.95 405.58 L359.5 405.37 L360.05 405.22 L360.6 409 L361.15 408.97 L361.7 405.34 L362.25 407.16 L362.8 405.45 L363.35 408.28 L363.9 405.84 L364.45 407.94 L365 407.77 L365.55 406.49 L366.1 404.9 L366.65 404.99 L367.2 405.22 L367.75 407.17 L368.3 406.79 L368.85 405.76 L369.4 406.3 L369.95 405.25 L370.5 405.34 L371.05 407.64 L371.6 406.45 L372.15 405.94 L372.7 405.79 L373.25 405.35 L373.8 408.78 L374.35 405.6 L374.9 407.69 L375.45 407.65 L376 406.56 L376.55 405.39 L377.1 405.88 L377.65 408.03 L378.2 408.45 L378.75 405.15 L379.3 404.37 L379.85 406.36 L380.4 406.23 L380.95 405.57 L381.5 407.22 L382.05 405.91 L382.6 405.25 L383.15 405.86 L383.7 408.11 L384.25 405.38 L384.8 408.72 L385.35 405.03 L385.9 409.24 L386.45 406.8 L387 408.21 L387.55 408.29 L388.1 408.86 L388.65 405.32 L389.2 407.61 L389.75 407.69 L390.3 405.31 L390.85 405.42 L391.4 405.11 L391.95 406.16 L392.5 407.64 L393.05 405.31 L393.6 406.6 L394.15 407.83 L394.7 407.41 L395.25 408.23 L395.8 408.05 L396.35 406.84 L396.9 407.28 L397.45 406.41 L398 404.44 L398.55 408.52 L399.1 409.2 L399.65 404.85 L400.2 408.21 L400.75 407.13 L401.3 406.5 L401.85 408.35 L402.4 407.98 L402.95 407.41 L403.5 406.13 L404.05 406.85 L404.6 404.63 L405.15 406.79 L405.7 405.41 L406.25 405.68 L406.8 407.67 L407.35 408.59 L407.9 406.62 L408.45 406.79 L409 407.32 L409.55 409.45 L410.1 406.48 L410.65 408.06 L411.2 404.32 L411.75 409.4 L412.3 405.32 L412.85 404.9 L413.4 405.62 L413.95 405.18 L414.5 408.28 L415.05 403.26 L415.6 399.27 L416.15 400.22 L416.7 404.33 L417.25 407.44 L417.8 408.19 L418.35 404.63 L418.9 406.23 L419.45 405.85 L420 406.76 L420.55 399.62 L421.1 397.36 L421.65 401.68 L422.2 408.25 L422.75 407.23 L423.3 407.07 L423.85 405.78 L424.4 407.21 L424.95 404.79 L425.5 398.33 L426.05 396.15 L426.6 401.48 L427.15 404.97 L427.7 407.23 L428.25 407.96 L428.8 405.77 L429.35 408.29 L429.9 405.51 L430.45 405.94 L431 405.61 L431.55 407.4 L432.1 405.12 L432.65 406.36 L433.2 407.19 L433.75 404.49 L434.3 404.42 L434.85 407.79 L435.4 405.19 L435.95 406.44 L436.5 409.36 L437.05 405.54 L437.6 406.63 L438.15 405.32 L438.7 407.18 L439.25 406.27 L439.8 406.2 L440.35 405.5 L440.9 408.62 L441.45 406.19 L442 406.67 L442.55 405.54 L443.1 406.59 L443.65 408.31 L444.2 406.71 L444.75 406.61 L445.3 405.26 L445.85 404.99 L446.4 407.81 L446.95 404.85 L447.5 406.43 L448.05 408.08 L448.6 406.05 L449.15 407.22 L449.7 405.2 L450.25 405.56 L450.8 407.42 L451.35 407.79 L451.9 406.49 L452.45 405.28 L453 407.42 L453.55 408.06 L454.1 407.99 L454.65 406.61 L455.2 406.38 L455.75 408.72 L456.3 405.03 L456.85 408.27 L457.4 406.29 L457.95 404.86 L458.5 408.69 L459.05 407.76 L459.6 405.45 L460.15 405.55 L460.7 408.19 L461.25 407.23 L461.8 407.54 L462.35 407.16 L462.9 407.55 L463.45 407.08 L464 409.05 L464.55 406.8 L465.1 409.01 L465.65 406.79 L466.2 409.22 L466.75 405.53 L467.3 407.01 L467.85 408.45 L468.4 405.45 L468.95 408.1 L469.5 407.63 L470.05 405.12 L470.6 408.68 L471.15 404.38 L471.7 407.94 L472.25 405.27 L472.8 407.33 L473.35 406.4 L473.9 405.23 L474.45 406.31 L475 405.24 L475.55 406.95 L476.1 405.96 L476.65 406.16 L477.2 408.42 L477.75 406.48 L478.3 405.24 L478.85 408.27 L479.4 407.1 L479.95 405.72 L480.5 408.95 L481.05 405.8 L481.6 406.85 L482.15 406.69 L482.7 405.46 L483.25 405.88 L483.8 404.66 L484.35 407.74 L484.9 407.03 L485.45 407.74 L486 406.44 L486.55 409.11 L487.1 407.62 L487.65 406.13 L488.2 406.78 L488.75 407.45 L489.3 406.62 L489.85 407.89 L490.4 403.37 L490.95 402.01 L491.5 402.13 L492.05 404.56 L492.6 407.79 L493.15 406.67 L493.7 407.3 L494.25 406.93 L494.8 407.81 L495.35 409.32 L495.9 405.09 L496.45 405.35 L497 405.74 L497.55 406.67 L498.1 407.03 L498.65 404.93 L499.2 408.19 L499.75 407.76 L500.3 404.8 L500.85 405.41 L501.4 406.03 L501.95 407.59 L502.5 406.94 L503.05 407.48 L503.6 407.24 L504.15 407.44 L504.7 408.1 L505.25 403.91 L505.8 407.23 L506.35 408.12 L506.9 404.56 L507.45 405.73 L508 404.84 L508.55 405.24 L509.1 407.36 L509.65 404.36 L510.2 405.73 L510.75 407.11 L511.3 407.73 L511.85 407.58 L512.4 406.41 L512.95 404.62 L513.5 405.46 L514.05 408.77 L514.6 404.86 L515.15 405.31 L515.7 406.26 L516.25 406.82 L516.8 404.9 L517.35 406.98 L517.9 407.32 L518.45 408.49 L519 408.39 L519.55 407.64 L520.1 405.44 L520.65 404.92 L521.2 406.29 L521.75 407.09 L522.3 406.2 L522.85 408.06 L523.4 405.8 L523.95 406.04 L524.5 407.06 L525.05 405.76 L525.6 404.56 L526.15 405.72 L526.7 406.25 L527.25 406.02 L527.8 407.23 L528.35 407.36 L528.9 405.57 L529.45 405.98 L530 407.53 L530.55 405.64 L531.1 407.4 L531.1 414.18 L530.55 415.89 L530 413.17 L529.45 414.25 L528.9 413.16 L528.35 415.25 L527.8 412.84 L527.25 414.25 L526.7 414.59 L526.15 414.52 L525.6 412.67 L525.05 413.43 L524.5 415.02 L523.95 414.33 L523.4 414.3 L522.85 415.35 L522.3 413.95 L521.75 412.47 L521.2 413.92 L520.65 413.23 L520.1 412.12 L519.55 416.63 L519 416.52 L518.45 415 L517.9 413.48 L517.35 413.48 L516.8 413.27 L516.25 414.68 L515.7 412.05 L515.15 414.46 L514.6 412.03 L514.05 415.65 L513.5 415.16 L512.95 414.13 L512.4 413.03 L511.85 414.51 L511.3 415.36 L510.75 416.28 L510.2 412.7 L509.65 412.91 L509.1 414.55 L508.55 412.8 L508 414.7 L507.45 413.7 L506.9 412.21 L506.35 414.28 L505.8 413.01 L505.25 412.49 L504.7 414.98 L504.15 415.1 L503.6 412.9 L503.05 413.54 L502.5 413.56 L501.95 414.95 L501.4 414.82 L500.85 415.27 L500.3 412.61 L499.75 415.88 L499.2 414.36 L498.65 414.91 L498.1 416.08 L497.55 416.18 L497 414.76 L496.45 413.59 L495.9 414.97 L495.35 416.57 L494.8 413.59 L494.25 413.07 L493.7 416.15 L493.15 413.48 L492.6 415.74 L492.05 414.34 L491.5 413.02 L490.95 413.53 L490.4 413.75 L489.85 415.53 L489.3 413.36 L488.75 416.08 L488.2 414.56 L487.65 412.09 L487.1 415.14 L486.55 416.19 L486 413.26 L485.45 413.38 L484.9 412.82 L484.35 415.94 L483.8 413.72 L483.25 414.12 L482.7 412.73 L482.15 413.03 L481.6 413.28 L481.05 413.96 L480.5 416.21 L479.95 413.03 L479.4 412.54 L478.85 415.69 L478.3 414.85 L477.75 412.7 L477.2 415.08 L476.65 413.69 L476.1 414.5 L475.55 415.34 L475 415.43 L474.45 415.16 L473.9 415.2 L473.35 412.6 L472.8 413.53 L472.25 412.5 L471.7 413.88 L471.15 412.72 L470.6 415.97 L470.05 412.24 L469.5 415.78 L468.95 416.08 L468.4 414.92 L467.85 416.71 L467.3 414.76 L466.75 414.41 L466.2 416.4 L465.65 413.4 L465.1 416.13 L464.55 414.8 L464 416.06 L463.45 413.05 L462.9 416.65 L462.35 412.88 L461.8 414.76 L461.25 412.94 L460.7 415.01 L460.15 415.76 L459.6 412.56 L459.05 416.8 L458.5 415.99 L457.95 413.86 L457.4 416.47 L456.85 416.81 L456.3 413.2 L455.75 415.16 L455.2 413.93 L454.65 414.18 L454.1 414.58 L453.55 414.04 L453 415.91 L452.45 416.33 L451.9 416.12 L451.35 414.32 L450.8 413.02 L450.25 415.51 L449.7 414.86 L449.15 413.24 L448.6 412.22 L448.05 416.35 L447.5 415.75 L446.95 413.26 L446.4 414.01 L445.85 412.37 L445.3 412.24 L444.75 415.13 L444.2 415.39 L443.65 416.19 L443.1 413.44 L442.55 413.29 L442 415.74 L441.45 415.94 L440.9 416.55 L440.35 414.75 L439.8 416.58 L439.25 414.36 L438.7 415.24 L438.15 412.13 L437.6 412.6 L437.05 415.99 L436.5 416.71 L435.95 414.71 L435.4 414.24 L434.85 415.19 L434.3 412.52 L433.75 413.52 L433.2 416.11 L432.65 414.33 L432.1 413.77 L431.55 416.39 L431 414.33 L430.45 413.92 L429.9 412.36 L429.35 415.53 L428.8 415.57 L428.25 415.67 L427.7 412.7 L427.15 413.78 L426.6 416.09 L426.05 416.44 L425.5 412.24 L424.95 413.95 L424.4 415.75 L423.85 415.84 L423.3 415.82 L422.75 413.26 L422.2 414.58 L421.65 416.53 L421.1 415.41 L420.55 412.84 L420 416.37 L419.45 415.09 L418.9 416.64 L418.35 413.39 L417.8 415.5 L417.25 416.03 L416.7 413.82 L416.15 414.14 L415.6 413.75 L415.05 412.4 L414.5 415.6 L413.95 413.53 L413.4 416.03 L412.85 413.07 L412.3 412.98 L411.75 416.7 L411.2 412.95 L410.65 416.34 L410.1 414.68 L409.55 416.62 L409 414.55 L408.45 416.37 L407.9 415.89 L407.35 415.18 L406.8 413.69 L406.25 412.88 L405.7 413.88 L405.15 416.48 L404.6 413.44 L404.05 415.6 L403.5 415.21 L402.95 414.36 L402.4 416.56 L401.85 416.25 L401.3 412.63 L400.75 412.28 L400.2 415.29 L399.65 412.09 L399.1 416.23 L398.55 415.93 L398 412.03 L397.45 413.43 L396.9 413.02 L396.35 416.68 L395.8 416.17 L395.25 414.69 L394.7 416.29 L394.15 413.74 L393.6 415.35 L393.05 413.8 L392.5 414.87 L391.95 416.3 L391.4 414.47 L390.85 415.28 L390.3 414.23 L389.75 415 L389.2 414.17 L388.65 416.32 L388.1 416.5 L387.55 416.35 L387 414.55 L386.45 415.62 L385.9 416.45 L385.35 412.83 L384.8 415.27 L384.25 412.44 L383.7 416.16 L383.15 412.6 L382.6 415.21 L382.05 415.2 L381.5 415.63 L380.95 416.23 L380.4 413.06 L379.85 415.44 L379.3 413.75 L378.75 413.01 L378.2 416.65 L377.65 414.69 L377.1 413.15 L376.55 416.55 L376 415 L375.45 413.19 L374.9 415.45 L374.35 412.64 L373.8 416.66 L373.25 416.52 L372.7 413.4 L372.15 414.82 L371.6 413.26 L371.05 415.29 L370.5 414.01 L369.95 415.11 L369.4 413.3 L368.85 412.4 L368.3 412.77 L367.75 412.33 L367.2 415.93 L366.65 415.36 L366.1 413.72 L365.55 412.88 L365 414.48 L364.45 415.06 L363.9 416.16 L363.35 415.27 L362.8 414.92 L362.25 413.41 L361.7 415.81 L361.15 416.74 L360.6 416.63 L360.05 412.38 L359.5 414.16 L358.95 415.72 L358.4 412.05 L357.85 415.32 L357.3 414.85 L356.75 415.34 L356.2 414.76 L355.65 416.65 L355.1 414.87 L354.55 415.23 L354 413.67 L353.45 415.69 L352.9 415.16 L352.35 413.23 L351.8 416.4 L351.25 416.43 L350.7 412.24 L350.15 415.07 L349.6 415.96 L349.05 414.44 L348.5 415.51 L347.95 415.71 L347.4 414.93 L346.85 415.82 L346.3 416.47 L345.75 414.98 L345.2 412.27 L344.65 413.25 L344.1 414.59 L343.55 413.27 L343 415.8 L342.45 412.42 L341.9 414.73 L341.35 414.03 L340.8 415.26 L340.25 414.86 L339.7 414.61 L339.15 416.27 L338.6 415.35 L338.05 413.3 L337.5 413.25 L336.95 415.54 L336.4 413.59 L335.85 416.13 L335.3 416.26 L334.75 414.69 L334.2 416.15 L333.65 415.02 L333.1 415.45 L332.55 415.03 L332 414.58 L331.45 413.12 L330.9 413.52 L330.35 415.74 L329.8 414.82 L329.25 415.5 L328.7 412.11 L328.15 412.05 L327.6 412.7 L327.05 416.43 L326.5 415.47 L325.95 414.66 L325.4 414.85 L324.85 415.45 L324.3 412.63 L323.75 412.4 L323.2 414.42 L322.65 413.57 L322.1 415.04 L321.55 414.25 L321 413.08 L320.45 415.82 L319.9 412.24 L319.35 415.4 L318.8 413.52 L318.25 416.15 L317.7 416.65 L317.15 414.18 L316.6 415.37 L316.05 414.26 L315.5 413.04 L314.95 414.86 L314.4 414.33 L313.85 416.34 L313.3 413.12 L312.75 413.36 L312.2 413.03 L311.65 414.77 L311.1 414.22 L310.55 415.42 L310 415.22 L309.45 414.69 L308.9 414.01 L308.35 415.87 L307.8 413.46 L307.25 413.32 L306.7 415.4 L306.15 416.2 L305.6 414.61 L305.05 414.77 L304.5 414.43 L303.95 413.45 L303.4 413.22 L302.85 413.79 L302.3 413.38 L301.75 415.63 L301.2 413.53 L300.65 412.42 L300.1 416.41 L299.55 413.03 L299 416 L298.45 412.55 L297.9 416.7 L297.35 414.64 L296.8 414.85 L296.25 415.11 L295.7 413.84 L295.15 412.63 L294.6 412.35 L294.05 412.12 L293.5 414.48 L292.95 412.99 L292.4 412.74 L291.85 415.12 L291.3 415.73 L290.75 414.8 L290.2 413.18 L289.65 415.3 L289.1 415.93 L288.55 413.87 L288 412.52 L287.45 415.78 L286.9 413.55 L286.35 413.71 L285.8 414.3 L285.25 414.74 L284.7 415.14 L284.15 415.77 L283.6 413.68 L283.05 415.55 L282.5 412.53 L281.95 415.6 L281.4 415.8 L280.85 416.32 L280.3 414.39 L279.75 415.43 L279.2 415.59 L278.65 413.06 L278.1 413.37 L277.55 416.13 L277 415.01 L276.45 415.23 L275.9 412.72 L275.35 412.82 L274.8 416.39 L274.25 416.23 L273.7 413.69 L273.15 413.85 L272.6 412.1 L272.05 412.61 L271.5 414.15 L270.95 412.65 L270.4 412.91 L269.85 414.9 L269.3 415.27 L268.75 414.05 L268.2 416.17 L267.65 413.17 L267.1 415.47 L266.55 415.03 L266 413.02 L265.45 415.02 L264.9 414.77 L264.35 414.42 L263.8 413.31 L263.25 412.5 L262.7 415.06 L262.15 416.56 L261.6 412.84 L261.05 413.42 L260.5 412.93 L259.95 414.58 L259.4 414.38 L258.85 413.32 L258.3 415.04 L257.75 414.05 L257.2 413.09 L256.65 415.8 L256.1 413.4 L255.55 413.61 L255 415.27 L254.45 415.65 L253.9 412.23 L253.35 412.64 L252.8 416.32 L252.25 415.43 L251.7 413.54 L251.15 413.88 L250.6 416.72 L250.05 413.49 L249.5 412.93 L248.95 412.52 L248.4 414.13 L247.85 413.76 L247.3 416.77 L246.75 414.77 L246.2 414.74 L245.65 414.64 L245.1 412.19 L244.55 414.57 L244 415.91 L243.45 415.6 L242.9 413.07 L242.35 413.07 L241.8 415.9 L241.25 416.53 L240.7 414.04 L240.15 412.04 L239.6 414.49 L239.05 413.06 L238.5 413.09 L237.95 412.18 L237.4 415.45 L236.85 414.16 L236.3 413.26 L235.75 415.84 L235.2 416.77 L234.65 415.76 L234.1 416.6 L233.55 413.95 L233 416.4 L232.45 415.81 L231.9 414.01 L231.35 413.14 L230.8 414.33 L230.25 412.68 L229.7 412.36 L229.15 416.4 L228.6 413.71 L228.05 413.03 L227.5 413.58 L226.95 416.74 L226.4 414.62 L225.85 413.49 L225.3 416.73 L224.75 415.12 L224.2 415.74 L223.65 414.54 L223.1 415.06 L222.55 416.78 L222 412.83 L221.45 416.17 L220.9 416.55 L220.35 414.97 L219.8 414.98 L219.25 416.45 L218.7 413.9 L218.15 416.81 L217.6 412.32 L217.05 414.08 L216.5 413.67 L215.95 414.81 L215.4 413.64 L214.85 413.01 L214.3 414.41 L213.75 415.16 L213.2 413.62 L212.65 412.94 L212.1 416.33 L211.55 415.04 L211 414.65 L210.45 412.54 L209.9 416.63 L209.35 412.13 L208.8 415.04 L208.25 416.58 L207.7 414.08 L207.15 413.97 L206.6 414.45 L206.05 413.35 L205.5 412.39 L204.95 412.33 L204.4 414.63 L203.85 415.58 L203.3 413.21 L202.75 412.18 L202.2 413.8 L201.65 414.15 L201.1 412.89 L200.55 415.77 L200 413.78 L199.45 412.89 L198.9 416.34 L198.35 414.16 L197.8 416.59 L197.25 412.03 L196.7 415.82 L196.15 414.59 L195.6 412.44 L195.05 416.35 L194.5 414.33 L193.95 413.07 L193.4 414.81 L192.85 416.46 L192.3 414.49 L191.75 412.38 L191.2 413.55 L190.65 414.6 L190.1 414.53 L189.55 413.89 L189 415.64 L188.45 413.72 L187.9 412.45 L187.35 414.15 L186.8 414.96 L186.25 416.47 L185.7 415.47 L185.15 413.2 L184.6 414.52 L184.05 415.66 L183.5 414.21 L182.95 416.61 L182.4 416.41 L181.85 412.48 L181.3 413.25 L180.75 416.18 L180.2 413.95 L179.65 415.28 L179.1 415.62 L178.55 414.06 L178 416.22 L177.45 415.78 L176.9 413.2 L176.35 416.52 L175.8 414.52 L175.25 415.33 L174.7 412.85 L174.15 413.42 L173.6 413.48 L173.05 415.44 L172.5 416.6 L171.95 414.67 L171.4 414.32 L170.85 414.11 L170.3 416.59 L169.75 413.19 L169.2 412.25 L168.65 412.65 L168.1 413.4 L167.55 413.46 L167 414.05 L166.45 413.3 L165.9 416.34 L165.35 414.95 L164.8 416.7 L164.25 415.86 L163.7 416.51 L163.15 414.65 L162.6 415.1 L162.05 414.99 L161.5 413.03 L160.95 415.77 L160.4 414.34 L159.85 415.02 L159.3 414.04 L158.75 416 L158.2 412.19 L157.65 416.18 L157.1 412.1 L156.55 412.84 L156 414.57 L155.45 412.6 L154.9 416.55 L154.35 415.89 L153.8 414.54 L153.25 414.17 L152.7 416.54 L152.15 413.49 L151.6 416.49 L151.05 412.81 L150.5 412.63 L149.95 412.86 L149.4 412.52 L148.85 413.84 L148.3 412.4 L147.75 416.41 L147.2 414.16 L146.65 412.51 L146.1 415.78 L145.55 416.8 L145 414.31 L144.45 413.2 L143.9 412.17 L143.35 413.82 L142.8 414.36 L142.25 413.39 L141.7 413.98 L141.15 412.4 L140.6 413.99 L140.05 416.69 L139.5 416.66 L138.95 413.48 L138.4 413.61 L137.85 414.21 L137.3 416.2 L136.75 415.96 L136.2 415.1 L135.65 414.14 L135.1 415.03 L134.55 416.18 L134 412.83 L133.45 412.27 L132.9 415.79 L132.35 416.35 L131.8 416.51 L131.25 412.95 L130.7 412.23 L130.15 414.23 L129.6 414.82 L129.05 414.49 L128.5 412.71 L127.95 412.12 L127.4 413.93 L126.85 416.33 L126.3 412.65 L125.75 412.71 L125.2 416.39 L124.65 416.45 L124.1 414.73 L123.55 413.37 L123 412.06 L122.45 413.72 L121.9 412.48 L121.35 416.45 L120.8 416.48 L120.25 416.01 L119.7 416.73 L119.15 414.32 L118.6 414.54 L118.05 412.56 L117.5 412.91 L116.95 414.72 L116.4 416.5 L115.85 412.31 L115.3 416.62 L114.75 414.32 L114.2 412.97 L113.65 413.71 L113.1 412.6 L112.55 415.83 L112 416.2 L111.45 413.77 L110.9 415.57 L110.35 416.03 L109.8 415.78 L109.25 415.62 L108.7 413.48 L108.15 412.74 L107.6 413.36 L107.05 414.03 L106.5 414.17 L105.95 414.52 L105.4 412.81 L104.85 416.38 L104.3 413.94 L103.75 415.73 L103.2 412.95 L102.65 412.17 L102.1 416.15 L101.55 413.02 L101 416.39 L100.45 415.08 L99.9 413.08 L99.35 414.55 L98.8 414.84 L98.25 414.91 L97.7 414.3 L97.15 414.53 L96.6 415.2 L96.05 415.17 L95.5 415.93 L94.95 416.01 L94.4 416.42 L93.85 415.73 L93.3 413.55 L92.75 416.54 L92.2 412.34 L91.65 416.75 L91.1 414.8 L90.55 414.37 L90 416.27 L89.45 414.25 L88.9 412.46 L88.35 413.78 L87.8 413.52 L87.25 415.18 L86.7 416.27 L86.15 416.06 L85.6 415.93 L85.05 414.06 L84.5 413.76 L83.95 416.24 L83.4 416.42 L82.85 413.04 L82.3 412.02 L81.75 413.31 L81.2 415.61 L80.65 413.83 L80.1 412.95 L79.55 416.81 L79 412.31 L78.45 413.81 L77.9 416.27 L77.35 415.4 L76.8 414.64 L76.25 415.4 L75.7 413.44 L75.15 413.02 L74.6 413.81 L74.05 412.02 L73.5 413.55 L72.95 413.49 L72.4 413.28 L71.85 412.64 L71.3 415.93 L70.75 414.14 L70.2 415.02 L69.65 416.11 L69.1 416.57 L68.55 416.04 L68 412.36 L67.45 416.66 L66.9 416.78 L66.35 416.36 L65.8 415.85 L65.25 415.76 L64.7 415.79 L64.15 416.41 L63.6 416.73 L63.05 413.19 L62.5 412.19 L61.95 413.67 L61.4 416.15 L60.85 415.78 L60.3 413.54 L59.75 416.45 L59.2 413.06 L58.65 413.94 L58.1 415.04 L57.55 415.88 L57 414.93 L56.45 414 L55.9 414.47 L55.35 413.11 L54.8 412.51 L54.25 416.7 L53.7 412.9 L53.15 412.57 L52.6 412.58 L52.05 413.9 L51.5 412.29 L50.95 413.08 L50.4 416.05 L49.85 415.13 L49.3 413.32 L48.75 416.06 L48.2 415.53 L47.65 412.54 L47.1 412.97 L46.55 415.92 L46 416.74 L45.45 414.17 L44.9 413.01 L44.35 416.37 L43.8 416.64 L43.25 416.66 L42.7 415.47 L42.15 415.49 L41.6 415.6 L41.05 415.21 L40.5 413.25 L39.95 414.94 L39.4 412.85 L38.85 413.46 L38.3 412.53 L37.75 413.78 L37.2 412.89 L36.65 414.89 L36.1 413.83 L35.55 416.31 L35 416.52 L34.45 413.29 L33.9 414.4 L33.35 415.31 L32.8 416.52 L32.25 413.4 L31.7 416.03 L31.15 413.67 L30.6 416.37 L30.05 414.01 L29.5 413.52 L28.95 412.73 L28.4 412.79 L27.85 415.61 L27.3 416.49 L26.75 412.79 L26.2 412.6 L25.65 412.19 L25.1 413.53 L24.55 415.35 L24 415.96 L23.45 414.17 L22.9 416.7 L22.35 414.85 L21.8 416.24 L21.25 412.16 L20.7 415.93 L20.15 416.22 L19.6 414.43 L19.05 412.02 L18.5 414 L17.95 412.93 L17.4 416.03 Z" fill="#f2cc0c"/><path d="M17.4 401.54 L17.95 401.37 L18.5 402.03 L19.05 399.99 L19.6 401.75 L20.15 401.24 L20.7 402.45 L21.25 399.86 L21.8 401.74 L22.35 402.33 L22.9 402.85 L23.45 401.59 L24 403.23 L24.55 403.7 L25.1 400.51 L25.65 400.35 L26.2 402.68 L26.75 402.65 L27.3 401.94 L27.85 400.91 L28.4 400.07 L28.95 401.68 L29.5 401.12 L30.05 402.4 L30.6 404.08 L31.15 402.31 L31.7 403.17 L32.25 400.21 L32.8 402.2 L33.35 403.24 L33.9 400.91 L34.45 400.63 L35 400.71 L35.55 404.02 L36.1 402.36 L36.65 403.33 L37.2 400.95 L37.75 401.08 L38.3 400.45 L38.85 401.53 L39.4 399.5 L39.95 402.62 L40.5 402.2 L41.05 401.39 L41.6 401.79 L42.15 401.55 L42.7 403.03 L43.25 400.82 L43.8 401.76 L44.35 402.85 L44.9 400.63 L45.45 401.78 L46 402.91 L46.55 402.52 L47.1 402.13 L47.65 402.83 L48.2 403.89 L48.75 402.23 L49.3 402.12 L49.85 401.72 L50.4 400.83 L50.95 400.43 L51.5 399.73 L52.05 399.58 L52.6 390.12 L53.15 389.02 L53.7 390.36 L54.25 390.14 L54.8 389.5 L55.35 389.11 L55.9 388.84 L56.45 387.44 L57 388.49 L57.55 387.55 L58.1 388.55 L58.65 387.37 L59.2 389.11 L59.75 390.02 L60.3 389.8 L60.85 388.08 L61.4 389.14 L61.95 389.8 L62.5 390.69 L63.05 390.7 L63.6 390.99 L64.15 391.24 L64.7 389.56 L65.25 389.2 L65.8 389.44 L66.35 388.75 L66.9 389.44 L67.45 388.25 L68 387.63 L68.55 389.1 L69.1 387.88 L69.65 389.17 L70.2 387.96 L70.75 389.47 L71.3 390.04 L71.85 387.92 L72.4 388.19 L72.95 387.32 L73.5 386.92 L74.05 389.71 L74.6 388.34 L75.15 386.38 L75.7 392.81 L76.25 399.65 L76.8 394.25 L77.35 395.25 L77.9 400.85 L78.45 401.7 L79 401.3 L79.55 403.39 L80.1 401.94 L80.65 401.87 L81.2 402.96 L81.75 402.35 L82.3 401.07 L82.85 401.87 L83.4 401.82 L83.95 401.14 L84.5 402.01 L85.05 401.84 L85.6 402.17 L86.15 402.79 L86.7 402.97 L87.25 401.85 L87.8 401.77 L88.35 400.94 L88.9 401.65 L89.45 402.74 L90 401.84 L90.55 400.85 L91.1 401.2 L91.65 403.12 L92.2 400.35 L92.75 402.91 L93.3 400.84 L93.85 402 L94.4 400.55 L94.95 401.87 L95.5 401.76 L96.05 402.09 L96.6 403.08 L97.15 402.29 L97.7 402.58 L98.25 401.04 L98.8 402.3 L99.35 401.81 L99.9 401.96 L100.45 400.87 L101 402.53 L101.55 400.52 L102.1 401.36 L102.65 401.15 L103.2 400.79 L103.75 403.2 L104.3 401.08 L104.85 402.51 L105.4 401.91 L105.95 402.22 L106.5 401.85 L107.05 401.98 L107.6 402.1 L108.15 401.54 L108.7 400.43 L109.25 401.94 L109.8 402.97 L110.35 402.21 L110.9 402.82 L111.45 401.44 L112 402.78 L112.55 401.87 L113.1 401.73 L113.65 402.6 L114.2 401.8 L114.75 401.69 L115.3 401.57 L115.85 402.4 L116.4 402.3 L116.95 401.47 L117.5 400.9 L118.05 400.17 L118.6 401.23 L119.15 401.29 L119.7 402.82 L120.25 402.37 L120.8 402.24 L121.35 401.33 L121.9 401.37 L122.45 401.47 L123 401.04 L123.55 401.93 L124.1 401.22 L124.65 401.43 L125.2 401.69 L125.75 401.01 L126.3 400.57 L126.85 403.19 L127.4 402.43 L127.95 401.54 L128.5 402.41 L129.05 403.1 L129.6 401.93 L130.15 400.78 L130.7 401.51 L131.25 402.44 L131.8 402.37 L132.35 401.46 L132.9 401.28 L133.45 399.5 L134 401.85 L134.55 402.13 L135.1 401.33 L135.65 401.03 L136.2 402.6 L136.75 402.38 L137.3 401.01 L137.85 401.07 L138.4 401.82 L138.95 402.27 L139.5 402.41 L140.05 402.22 L140.6 401.24 L141.15 401.24 L141.7 402.99 L142.25 401.29 L142.8 394.04 L143.35 388.89 L143.9 393 L144.45 400.72 L145 401.95 L145.55 401.99 L146.1 400.67 L146.65 399.03 L147.2 395.03 L147.75 397.66 L148.3 399.04 L148.85 401.29 L149.4 401.03 L149.95 401.63 L150.5 399.91 L151.05 400.64 L151.6 395.6 L152.15 394.18 L152.7 400.08 L153.25 403.33 L153.8 401.52 L154.35 401.2 L154.9 403.18 L155.45 401.01 L156 401.85 L156.55 397.09 L157.1 391.59 L157.65 395.8 L158.2 399.95 L158.75 402.52 L159.3 401.39 L159.85 401.44 L160.4 401.64 L160.95 401.27 L161.5 402.07 L162.05 402.94 L162.6 401.56 L163.15 402.6 L163.7 402.5 L164.25 401.97 L164.8 402.5 L165.35 401.19 L165.9 401.8 L166.45 400.43 L167 400.6 L167.55 400.65 L168.1 399.89 L168.65 391.82 L169.2 390.71 L169.75 395.67 L170.3 400.73 L170.85 403.31 L171.4 403.08 L171.95 401.05 L172.5 403.54 L173.05 402.35 L173.6 396.97 L174.15 392.77 L174.7 394.73 L175.25 401.03 L175.8 400.96 L176.35 402.19 L176.9 399.7 L177.45 403.34 L178 401.61 L178.55 392.94 L179.1 390.89 L179.65 396.97 L180.2 402.03 L180.75 402.12 L181.3 401.95 L181.85 402.85 L182.4 402.23 L182.95 401.7 L183.5 402.62 L184.05 401.94 L184.6 400.61 L185.15 401.18 L185.7 401.75 L186.25 401.97 L186.8 402.22 L187.35 401.55 L187.9 402.45 L188.45 400.05 L189 401.71 L189.55 400.58 L190.1 402.34 L190.65 401.13 L191.2 402.78 L191.75 400.55 L192.3 401.44 L192.85 404.02 L193.4 401.09 L193.95 401.07 L194.5 401.07 L195.05 402.69 L195.6 401.39 L196.15 403.51 L196.7 401.57 L197.25 401.66 L197.8 402.66 L198.35 403.39 L198.9 402.3 L199.45 400.15 L200 401.37 L200.55 402.75 L201.1 400.22 L201.65 402.99 L202.2 401.44 L202.75 399.82 L203.3 401.47 L203.85 395.98 L204.4 379.66 L204.95 378.84 L205.5 392.36 L206.05 401.91 L206.6 402.29 L207.15 401.26 L207.7 401.33 L208.25 401.57 L208.8 402.26 L209.35 401.44 L209.9 402.34 L210.45 401.08 L211 403.17 L211.55 401 L212.1 402.23 L212.65 400.26 L213.2 401.05 L213.75 402.71 L214.3 400.98 L214.85 399.66 L215.4 401.13 L215.95 402.98 L216.5 401.08 L217.05 401.43 L217.6 400.49 L218.15 401.77 L218.7 401.27 L219.25 403.24 L219.8 402.82 L220.35 401.13 L220.9 403.36 L221.45 402.18 L222 401.13 L222.55 401.18 L223.1 402.49 L223.65 400.94 L224.2 392.11 L224.75 389.82 L225.3 389.86 L225.85 389.67 L226.4 388.61 L226.95 390.71 L227.5 390.09 L228.05 389.45 L228.6 388.21 L229.15 389.3 L229.7 389.13 L230.25 388.34 L230.8 389.89 L231.35 389.17 L231.9 389.99 L232.45 390.58 L233 389.64 L233.55 390.54 L234.1 390.11 L234.65 388.13 L235.2 390.14 L235.75 389.69 L236.3 388.13 L236.85 389.58 L237.4 390.42 L237.95 389.11 L238.5 389.48 L239.05 388.74 L239.6 388.92 L240.15 389.52 L240.7 389.02 L241.25 390.14 L241.8 390.1 L242.35 389.49 L242.9 389.18 L243.45 390.53 L244 390.26 L244.55 388.91 L245.1 389.71 L245.65 389.79 L246.2 389.78 L246.75 387.76 L247.3 389.32 L247.85 389.64 L248.4 388.52 L248.95 389.15 L249.5 389 L250.05 388.68 L250.6 388.98 L251.15 389.03 L251.7 388.25 L252.25 390.54 L252.8 388.74 L253.35 388.84 L253.9 390.61 L254.45 401.69 L255 402.16 L255.55 401.89 L256.1 402.7 L256.65 400.78 L257.2 401.97 L257.75 400.72 L258.3 400.82 L258.85 401.74 L259.4 403.36 L259.95 402.69 L260.5 401.39 L261.05 402.35 L261.6 401.99 L262.15 403.32 L262.7 401.52 L263.25 401.13 L263.8 401.59 L264.35 401.86 L264.9 400.87 L265.45 401.9 L266 401.7 L266.55 401.69 L267.1 402.44 L267.65 401.52 L268.2 402.71 L268.75 401.64 L269.3 401.77 L269.85 402.03 L270.4 400.93 L270.95 401.8 L271.5 402.3 L272.05 401.09 L272.6 401.43 L273.15 400.94 L273.7 403.2 L274.25 402.07 L274.8 403.53 L275.35 402.82 L275.9 401.11 L276.45 401.89 L277 400.83 L277.55 402.55 L278.1 402.46 L278.65 402.39 L279.2 400.86 L279.75 402.87 L280.3 401.75 L280.85 403.38 L281.4 400.97 L281.95 402.88 L282.5 401.99 L283.05 402.91 L283.6 402.86 L284.15 401.09 L284.7 403.63 L285.25 402.38 L285.8 400.87 L286.35 401.2 L286.9 400.71 L287.45 402.79 L288 400.41 L288.55 402.9 L289.1 402.96 L289.65 401.13 L290.2 402.59 L290.75 400.88 L291.3 402.41 L291.85 402.34 L292.4 402.29 L292.95 399.69 L293.5 403.1 L294.05 400.65 L294.6 402.33 L295.15 400.51 L295.7 400.96 L296.25 402.42 L296.8 402.05 L297.35 402.64 L297.9 403.56 L298.45 401.24 L299 401.53 L299.55 401.88 L300.1 402.03 L300.65 401.11 L301.2 401.28 L301.75 402.14 L302.3 401.91 L302.85 402.66 L303.4 402.04 L303.95 402.14 L304.5 401.38 L305.05 401.42 L305.6 401.25 L306.15 401.76 L306.7 402.72 L307.25 402.56 L307.8 401.39 L308.35 402.58 L308.9 400.81 L309.45 402.53 L310 401.49 L310.55 402.06 L311.1 400.87 L311.65 402.92 L312.2 401.41 L312.75 402.86 L313.3 400.9 L313.85 402.8 L314.4 401.92 L314.95 401.09 L315.5 400.01 L316.05 402.05 L316.6 402.37 L317.15 401.58 L317.7 402.01 L318.25 401.92 L318.8 402.17 L319.35 400.42 L319.9 400.39 L320.45 402.35 L321 399.91 L321.55 402.36 L322.1 403.46 L322.65 400.27 L323.2 402.99 L323.75 400.29 L324.3 402.58 L324.85 402.7 L325.4 402.26 L325.95 401.98 L326.5 400.75 L327.05 400.9 L327.6 401.05 L328.15 402.26 L328.7 400.93 L329.25 401.06 L329.8 402.06 L330.35 401.63 L330.9 401.43 L331.45 400.91 L332 402.15 L332.55 401.81 L333.1 401.61 L333.65 401.37 L334.2 402.97 L334.75 400.96 L335.3 402.12 L335.85 402.7 L336.4 400.98 L336.95 403.13 L337.5 402.38 L338.05 401.65 L338.6 402.83 L339.15 401.88 L339.7 402.82 L340.25 402.78 L340.8 401.41 L341.35 400.91 L341.9 403.03 L342.45 401.06 L343 401.97 L343.55 401.77 L344.1 402.18 L344.65 400.47 L345.2 400.34 L345.75 402.18 L346.3 400.35 L346.85 401.73 L347.4 401.97 L347.95 401.87 L348.5 402.16 L349.05 401.12 L349.6 403.4 L350.15 402.77 L350.7 400.86 L351.25 401.26 L351.8 401.97 L352.35 400.64 L352.9 402.81 L353.45 403.34 L354 402.52 L354.55 402.91 L355.1 400.72 L355.65 403.51 L356.2 400.75 L356.75 402.14 L357.3 400.25 L357.85 403.46 L358.4 402.08 L358.95 401.66 L359.5 401.64 L360.05 400.3 L360.6 403.98 L361.15 403.94 L361.7 400.49 L362.25 402.51 L362.8 400.44 L363.35 402.58 L363.9 401.18 L364.45 402.44 L365 402.47 L365.55 402.01 L366.1 401.34 L366.65 401.02 L367.2 400.32 L367.75 402.96 L368.3 401.63 L368.85 401.92 L369.4 401.59 L369.95 400.45 L370.5 400.64 L371.05 402.7 L371.6 401.04 L372.15 400.69 L372.7 401.26 L373.25 401.15 L373.8 402.61 L374.35 401.12 L374.9 402.44 L375.45 403.11 L376 401.47 L376.55 401.04 L377.1 400.61 L377.65 402.64 L378.2 403.07 L378.75 400.99 L379.3 400.79 L379.85 401.19 L380.4 401.97 L380.95 400.68 L381.5 402.05 L382.05 401.08 L382.6 400.56 L383.15 402.02 L383.7 402.34 L384.25 401.45 L384.8 403.77 L385.35 400.49 L385.9 403.43 L386.45 401.2 L387 402.28 L387.55 403.59 L388.1 403.26 L388.65 401.08 L389.2 402.98 L389.75 402.7 L390.3 401.47 L390.85 401.5 L391.4 400.73 L391.95 400.82 L392.5 403.04 L393.05 401.22 L393.6 401.79 L394.15 402.37 L394.7 402.86 L395.25 402.69 L395.8 402.11 L396.35 401.51 L396.9 402.06 L397.45 401.84 L398 400.49 L398.55 403.05 L399.1 403.35 L399.65 400.86 L400.2 401.82 L400.75 402.21 L401.3 401.21 L401.85 403.15 L402.4 403.03 L402.95 403.1 L403.5 401.34 L404.05 401.7 L404.6 400.63 L405.15 402.65 L405.7 401.2 L406.25 401.49 L406.8 402.7 L407.35 403.26 L407.9 402.45 L408.45 401.61 L409 401.74 L409.55 403.62 L410.1 402.53 L410.65 402.96 L411.2 401 L411.75 403.99 L412.3 401.38 L412.85 400.9 L413.4 401.74 L413.95 400.56 L414.5 402.4 L415.05 399.16 L415.6 394.19 L416.15 395.08 L416.7 399.75 L417.25 401.81 L417.8 402.48 L418.35 401.2 L418.9 401.49 L419.45 401.47 L420 401.27 L420.55 394.81 L421.1 391.5 L421.65 396.99 L422.2 402.59 L422.75 402.27 L423.3 402.69 L423.85 400.78 L424.4 402.38 L424.95 401.07 L425.5 393.27 L426.05 390.83 L426.6 396.51 L427.15 400.82 L427.7 402.06 L428.25 402.82 L428.8 401.09 L429.35 403.31 L429.9 400.73 L430.45 402.14 L431 401.34 L431.55 402.22 L432.1 400.65 L432.65 401.53 L433.2 402.76 L433.75 400.61 L434.3 399.93 L434.85 401.78 L435.4 401.08 L435.95 401.44 L436.5 404.05 L437.05 400.94 L437.6 401.53 L438.15 401.58 L438.7 402.66 L439.25 401.58 L439.8 401.32 L440.35 401.29 L440.9 403.13 L441.45 402.27 L442 401.38 L442.55 401.54 L443.1 401.57 L443.65 402.35 L444.2 401.6 L444.75 402.25 L445.3 400.33 L445.85 401.36 L446.4 403.2 L446.95 400.72 L447.5 400.9 L448.05 403.46 L448.6 402 L449.15 402.93 L449.7 401.09 L450.25 400.58 L450.8 403.02 L451.35 403.15 L451.9 402.13 L452.45 401.04 L453 402.65 L453.55 402.54 L454.1 401.87 L454.65 401.2 L455.2 399.85 L455.75 401.06 L456.3 399.17 L456.85 401.7 L457.4 401.86 L457.95 400.28 L458.5 402.09 L459.05 401.61 L459.6 401.76 L460.15 400.54 L460.7 402.01 L461.25 402.06 L461.8 403.11 L462.35 401.48 L462.9 401.5 L463.45 402.7 L464 404.04 L464.55 401.88 L465.1 403.66 L465.65 401.84 L466.2 402.46 L466.75 401.36 L467.3 401.96 L467.85 402.88 L468.4 400.81 L468.95 403.46 L469.5 402.71 L470.05 400.42 L470.6 402.81 L471.15 400.61 L471.7 401.86 L472.25 401.31 L472.8 401.4 L473.35 400.94 L473.9 400.6 L474.45 402.2 L475 401.46 L475.55 402.72 L476.1 401.04 L476.65 400.92 L477.2 402.26 L477.75 401.58 L478.3 401.47 L478.85 403.65 L479.4 401.36 L479.95 401.94 L480.5 402.39 L481.05 400.79 L481.6 402.07 L482.15 401.06 L482.7 401.23 L483.25 400.56 L483.8 400.14 L484.35 402.6 L484.9 401.43 L485.45 401.97 L486 402.37 L486.55 402.88 L487.1 403.09 L487.65 400.68 L488.2 401.57 L488.75 402.55 L489.3 402.24 L489.85 401.83 L490.4 398.47 L490.95 397.11 L491.5 398.52 L492.05 399.96 L492.6 401.58 L493.15 401.69 L493.7 402.74 L494.25 402.55 L494.8 402.61 L495.35 403.94 L495.9 400.44 L496.45 401.42 L497 382.55 L497.55 370.83 L498.1 374.63 L498.65 400.96 L499.2 403.4 L499.75 402.48 L500.3 400.9 L500.85 401.19 L501.4 401.69 L501.95 401.81 L502.5 401.48 L503.05 402.42 L503.6 402.6 L504.15 401.72 L504.7 403 L505.25 399.88 L505.8 402.23 L506.35 401.79 L506.9 400.66 L507.45 401.19 L508 400.01 L508.55 400.25 L509.1 401.59 L509.65 400.6 L510.2 401.45 L510.75 402.6 L511.3 402.22 L511.85 401.93 L512.4 401.89 L512.95 400.47 L513.5 401.77 L514.05 403.42 L514.6 400.17 L515.15 400.7 L515.7 401.23 L516.25 401.28 L516.8 401.33 L517.35 402.39 L517.9 402.03 L518.45 402 L519 402.9 L519.55 403.04 L520.1 400.26 L520.65 401.45 L521.2 402.28 L521.75 402.75 L522.3 402.28 L522.85 401.76 L523.4 401.63 L523.95 401.17 L524.5 402.72 L525.05 401.32 L525.6 400.33 L526.15 401.45 L526.7 401.5 L527.25 400.77 L527.8 401.44 L528.35 402.94 L528.9 401.25 L529.45 401.68 L530 403.04 L530.55 401.53 L531.1 402.76 L531.1 407.4 L530.55 405.64 L530 407.53 L529.45 405.98 L528.9 405.57 L528.35 407.36 L527.8 407.23 L527.25 406.02 L526.7 406.25 L526.15 405.72 L525.6 404.56 L525.05 405.76 L524.5 407.06 L523.95 406.04 L523.4 405.8 L522.85 408.06 L522.3 406.2 L521.75 407.09 L521.2 406.29 L520.65 404.92 L520.1 405.44 L519.55 407.64 L519 408.39 L518.45 408.49 L517.9 407.32 L517.35 406.98 L516.8 404.9 L516.25 406.82 L515.7 406.26 L515.15 405.31 L514.6 404.86 L514.05 408.77 L513.5 405.46 L512.95 404.62 L512.4 406.41 L511.85 407.58 L511.3 407.73 L510.75 407.11 L510.2 405.73 L509.65 404.36 L509.1 407.36 L508.55 405.24 L508 404.84 L507.45 405.73 L506.9 404.56 L506.35 408.12 L505.8 407.23 L505.25 403.91 L504.7 408.1 L504.15 407.44 L503.6 407.24 L503.05 407.48 L502.5 406.94 L501.95 407.59 L501.4 406.03 L500.85 405.41 L500.3 404.8 L499.75 407.76 L499.2 408.19 L498.65 404.93 L498.1 407.03 L497.55 406.67 L497 405.74 L496.45 405.35 L495.9 405.09 L495.35 409.32 L494.8 407.81 L494.25 406.93 L493.7 407.3 L493.15 406.67 L492.6 407.79 L492.05 404.56 L491.5 402.13 L490.95 402.01 L490.4 403.37 L489.85 407.89 L489.3 406.62 L488.75 407.45 L488.2 406.78 L487.65 406.13 L487.1 407.62 L486.55 409.11 L486 406.44 L485.45 407.74 L484.9 407.03 L484.35 407.74 L483.8 404.66 L483.25 405.88 L482.7 405.46 L482.15 406.69 L481.6 406.85 L481.05 405.8 L480.5 408.95 L479.95 405.72 L479.4 407.1 L478.85 408.27 L478.3 405.24 L477.75 406.48 L477.2 408.42 L476.65 406.16 L476.1 405.96 L475.55 406.95 L475 405.24 L474.45 406.31 L473.9 405.23 L473.35 406.4 L472.8 407.33 L472.25 405.27 L471.7 407.94 L471.15 404.38 L470.6 408.68 L470.05 405.12 L469.5 407.63 L468.95 408.1 L468.4 405.45 L467.85 408.45 L467.3 407.01 L466.75 405.53 L466.2 409.22 L465.65 406.79 L465.1 409.01 L464.55 406.8 L464 409.05 L463.45 407.08 L462.9 407.55 L462.35 407.16 L461.8 407.54 L461.25 407.23 L460.7 408.19 L460.15 405.55 L459.6 405.45 L459.05 407.76 L458.5 408.69 L457.95 404.86 L457.4 406.29 L456.85 408.27 L456.3 405.03 L455.75 408.72 L455.2 406.38 L454.65 406.61 L454.1 407.99 L453.55 408.06 L453 407.42 L452.45 405.28 L451.9 406.49 L451.35 407.79 L450.8 407.42 L450.25 405.56 L449.7 405.2 L449.15 407.22 L448.6 406.05 L448.05 408.08 L447.5 406.43 L446.95 404.85 L446.4 407.81 L445.85 404.99 L445.3 405.26 L444.75 406.61 L444.2 406.71 L443.65 408.31 L443.1 406.59 L442.55 405.54 L442 406.67 L441.45 406.19 L440.9 408.62 L440.35 405.5 L439.8 406.2 L439.25 406.27 L438.7 407.18 L438.15 405.32 L437.6 406.63 L437.05 405.54 L436.5 409.36 L435.95 406.44 L435.4 405.19 L434.85 407.79 L434.3 404.42 L433.75 404.49 L433.2 407.19 L432.65 406.36 L432.1 405.12 L431.55 407.4 L431 405.61 L430.45 405.94 L429.9 405.51 L429.35 408.29 L428.8 405.77 L428.25 407.96 L427.7 407.23 L427.15 404.97 L426.6 401.48 L426.05 396.15 L425.5 398.33 L424.95 404.79 L424.4 407.21 L423.85 405.78 L423.3 407.07 L422.75 407.23 L422.2 408.25 L421.65 401.68 L421.1 397.36 L420.55 399.62 L420 406.76 L419.45 405.85 L418.9 406.23 L418.35 404.63 L417.8 408.19 L417.25 407.44 L416.7 404.33 L416.15 400.22 L415.6 399.27 L415.05 403.26 L414.5 408.28 L413.95 405.18 L413.4 405.62 L412.85 404.9 L412.3 405.32 L411.75 409.4 L411.2 404.32 L410.65 408.06 L410.1 406.48 L409.55 409.45 L409 407.32 L408.45 406.79 L407.9 406.62 L407.35 408.59 L406.8 407.67 L406.25 405.68 L405.7 405.41 L405.15 406.79 L404.6 404.63 L404.05 406.85 L403.5 406.13 L402.95 407.41 L402.4 407.98 L401.85 408.35 L401.3 406.5 L400.75 407.13 L400.2 408.21 L399.65 404.85 L399.1 409.2 L398.55 408.52 L398 404.44 L397.45 406.41 L396.9 407.28 L396.35 406.84 L395.8 408.05 L395.25 408.23 L394.7 407.41 L394.15 407.83 L393.6 406.6 L393.05 405.31 L392.5 407.64 L391.95 406.16 L391.4 405.11 L390.85 405.42 L390.3 405.31 L389.75 407.69 L389.2 407.61 L388.65 405.32 L388.1 408.86 L387.55 408.29 L387 408.21 L386.45 406.8 L385.9 409.24 L385.35 405.03 L384.8 408.72 L384.25 405.38 L383.7 408.11 L383.15 405.86 L382.6 405.25 L382.05 405.91 L381.5 407.22 L380.95 405.57 L380.4 406.23 L379.85 406.36 L379.3 404.37 L378.75 405.15 L378.2 408.45 L377.65 408.03 L377.1 405.88 L376.55 405.39 L376 406.56 L375.45 407.65 L374.9 407.69 L374.35 405.6 L373.8 408.78 L373.25 405.35 L372.7 405.79 L372.15 405.94 L371.6 406.45 L371.05 407.64 L370.5 405.34 L369.95 405.25 L369.4 406.3 L368.85 405.76 L368.3 406.79 L367.75 407.17 L367.2 405.22 L366.65 404.99 L366.1 404.9 L365.55 406.49 L365 407.77 L364.45 407.94 L363.9 405.84 L363.35 408.28 L362.8 405.45 L362.25 407.16 L361.7 405.34 L361.15 408.97 L360.6 409 L360.05 405.22 L359.5 405.37 L358.95 405.58 L358.4 406.4 L357.85 407.98 L357.3 404.93 L356.75 406.17 L356.2 404.93 L355.65 408.16 L355.1 405.32 L354.55 408.64 L354 407.52 L353.45 408.96 L352.9 407.32 L352.35 404.36 L351.8 407.44 L351.25 405.73 L350.7 405.84 L350.15 407.82 L349.6 408.43 L349.05 405.28 L348.5 408.47 L347.95 408.26 L347.4 407.8 L346.85 406.41 L346.3 405.46 L345.75 406.02 L345.2 405.07 L344.65 404.85 L344.1 406.6 L343.55 406.91 L343 405.95 L342.45 405.35 L341.9 408.4 L341.35 405.98 L340.8 405.3 L340.25 408.57 L339.7 408.41 L339.15 407.09 L338.6 407.97 L338.05 405.35 L337.5 406.44 L336.95 407.96 L336.4 404.68 L335.85 406.82 L335.3 408.64 L334.75 405.22 L334.2 408.81 L333.65 405.05 L333.1 406.52 L332.55 407.54 L332 408.11 L331.45 404.57 L330.9 405.36 L330.35 405.19 L329.8 407.63 L329.25 406.82 L328.7 404.43 L328.15 406.7 L327.6 406.21 L327.05 405.7 L326.5 405.85 L325.95 406.69 L325.4 407.31 L324.85 407.17 L324.3 406.6 L323.75 404.29 L323.2 408.09 L322.65 404.53 L322.1 408.02 L321.55 407.87 L321 404.63 L320.45 408.89 L319.9 405.49 L319.35 405.03 L318.8 406.21 L318.25 405.8 L317.7 405.72 L317.15 407.15 L316.6 406.25 L316.05 405.99 L315.5 404.78 L314.95 406.58 L314.4 406.47 L313.85 407.8 L313.3 405.05 L312.75 407.66 L312.2 406.05 L311.65 408.08 L311.1 404.89 L310.55 408.42 L310 407.27 L309.45 406.74 L308.9 405.22 L308.35 408.85 L307.8 407.09 L307.25 406.66 L306.7 407.92 L306.15 405.45 L305.6 405.56 L305.05 406.24 L304.5 405.95 L303.95 407.01 L303.4 406.48 L302.85 406.96 L302.3 406.25 L301.75 407.88 L301.2 405.7 L300.65 405.17 L300.1 405.83 L299.55 405.74 L299 405.44 L298.45 405.86 L297.9 408.32 L297.35 408.31 L296.8 406.55 L296.25 407.78 L295.7 406.04 L295.15 405.86 L294.6 406.93 L294.05 405.29 L293.5 407.98 L292.95 404.23 L292.4 407.14 L291.85 408.03 L291.3 406.94 L290.75 406.37 L290.2 406.9 L289.65 406.85 L289.1 408.1 L288.55 407.17 L288 404.33 L287.45 409.01 L286.9 405.69 L286.35 404.6 L285.8 405.83 L285.25 406.31 L284.7 408.64 L284.15 405.58 L283.6 407.93 L283.05 408 L282.5 406.04 L281.95 407.14 L281.4 406.21 L280.85 408.82 L280.3 406.54 L279.75 407.46 L279.2 406.3 L278.65 406.55 L278.1 407.63 L277.55 407.17 L277 405.17 L276.45 406.42 L275.9 406.28 L275.35 407.3 L274.8 408.2 L274.25 408.2 L273.7 407.61 L273.15 405.43 L272.6 406.52 L272.05 406.49 L271.5 407.58 L270.95 405.91 L270.4 404.65 L269.85 407.26 L269.3 407.81 L268.75 406.12 L268.2 407.54 L267.65 406.25 L267.1 406.98 L266.55 405.69 L266 405.67 L265.45 408.08 L264.9 406.16 L264.35 405.77 L263.8 405.52 L263.25 406.45 L262.7 407.02 L262.15 408.63 L261.6 406.51 L261.05 407.68 L260.5 405.42 L259.95 408.15 L259.4 407.9 L258.85 405.92 L258.3 404.96 L257.75 405.96 L257.2 406.8 L256.65 406.01 L256.1 406.74 L255.55 406.05 L255 406.51 L254.45 407.96 L253.9 392.15 L253.35 389.94 L252.8 389.62 L252.25 391.8 L251.7 389.19 L251.15 390.16 L250.6 390.22 L250.05 389.74 L249.5 390.22 L248.95 390.35 L248.4 389.68 L247.85 390.72 L247.3 390.18 L246.75 388.85 L246.2 390.92 L245.65 390.76 L245.1 390.97 L244.55 390 L244 391.73 L243.45 391.99 L242.9 390.28 L242.35 390.52 L241.8 391.22 L241.25 391.34 L240.7 390.17 L240.15 390.54 L239.6 389.75 L239.05 389.96 L238.5 390.44 L237.95 390.11 L237.4 391.4 L236.85 390.62 L236.3 388.98 L235.75 390.77 L235.2 391.1 L234.65 389.26 L234.1 391.47 L233.55 391.93 L233 390.73 L232.45 392.16 L231.9 390.92 L231.35 390.51 L230.8 391.24 L230.25 389.37 L229.7 390.18 L229.15 390.45 L228.6 389.42 L228.05 390.57 L227.5 391.6 L226.95 392.28 L226.4 389.77 L225.85 391.09 L225.3 390.78 L224.75 390.98 L224.2 393.33 L223.65 405 L223.1 406.51 L222.55 405.55 L222 405.77 L221.45 406.93 L220.9 409.18 L220.35 405.52 L219.8 408.04 L219.25 408.73 L218.7 405.41 L218.15 407.33 L217.6 404.41 L217.05 406.45 L216.5 404.59 L215.95 407.94 L215.4 406.66 L214.85 404.41 L214.3 404.91 L213.75 407.72 L213.2 404.48 L212.65 404.93 L212.1 408.6 L211.55 406.26 L211 408.31 L210.45 405.55 L209.9 406.28 L209.35 406.17 L208.8 408.43 L208.25 407.51 L207.7 405.29 L207.15 405.53 L206.6 406.17 L206.05 406.28 L205.5 405.45 L204.95 406.39 L204.4 407.54 L203.85 405.04 L203.3 405.93 L202.75 404.67 L202.2 406.98 L201.65 408.14 L201.1 404.65 L200.55 407.23 L200 405.08 L199.45 404.93 L198.9 408.48 L198.35 408.11 L197.8 406.99 L197.25 406.89 L196.7 406.55 L196.15 408.34 L195.6 407.04 L195.05 407.18 L194.5 406.83 L193.95 405.64 L193.4 405.16 L192.85 408.95 L192.3 405.41 L191.75 403.85 L191.2 407.05 L190.65 405.7 L190.1 408.11 L189.55 404.53 L189 407.65 L188.45 404.49 L187.9 406.61 L187.35 406.96 L186.8 406.61 L186.25 408.41 L185.7 406.32 L185.15 406.53 L184.6 405.08 L184.05 407.58 L183.5 408.08 L182.95 405.84 L182.4 407.98 L181.85 406.98 L181.3 407.37 L180.75 408.85 L180.2 407.37 L179.65 401.47 L179.1 396.64 L178.55 397.92 L178 406.54 L177.45 408.81 L176.9 404.32 L176.35 406.63 L175.8 405.37 L175.25 405.05 L174.7 399.48 L174.15 398.4 L173.6 401.12 L173.05 408.3 L172.5 408.84 L171.95 405.94 L171.4 407.77 L170.85 408.1 L170.3 405.68 L169.75 399.74 L169.2 395.61 L168.65 396.5 L168.1 403.54 L167.55 405.7 L167 404.71 L166.45 405.42 L165.9 408.09 L165.35 405.33 L164.8 408.75 L164.25 407.48 L163.7 407.69 L163.15 408.05 L162.6 407.01 L162.05 408.2 L161.5 406.17 L160.95 406.31 L160.4 405.2 L159.85 406.48 L159.3 406.91 L158.75 408.52 L158.2 402.94 L157.65 401.26 L157.1 396.62 L156.55 401.97 L156 407.82 L155.45 406.02 L154.9 407.5 L154.35 407.1 L153.8 405.41 L153.25 407.9 L152.7 405.2 L152.15 398.69 L151.6 400.87 L151.05 404.55 L150.5 404.39 L149.95 406.19 L149.4 406.74 L148.85 404.71 L148.3 402.93 L147.75 402.67 L147.2 400.16 L146.65 402.91 L146.1 405.72 L145.55 406.31 L145 407.3 L144.45 404.06 L143.9 397.47 L143.35 394.45 L142.8 398.97 L142.25 406.43 L141.7 407.83 L141.15 406.77 L140.6 407.12 L140.05 409.03 L139.5 407.49 L138.95 406.31 L138.4 405.43 L137.85 404.62 L137.3 406.72 L136.75 407.79 L136.2 407.92 L135.65 405.13 L135.1 405.99 L134.55 408.51 L134 406.72 L133.45 403.98 L132.9 406.02 L132.35 406.1 L131.8 409.39 L131.25 406.61 L130.7 405.77 L130.15 405.95 L129.6 406.2 L129.05 408.19 L128.5 407.19 L127.95 405.98 L127.4 406.6 L126.85 408.02 L126.3 405 L125.75 406.27 L125.2 405.91 L124.65 406.86 L124.1 404.81 L123.55 406.96 L123 404.49 L122.45 406.85 L121.9 406.69 L121.35 405.79 L120.8 407.01 L120.25 406.39 L119.7 406.92 L119.15 405.45 L118.6 404.74 L118.05 404.64 L117.5 405.12 L116.95 405.99 L116.4 408.16 L115.85 406.33 L115.3 407.62 L114.75 406.82 L114.2 407.08 L113.65 406.95 L113.1 406.54 L112.55 405.89 L112 407.98 L111.45 407.36 L110.9 408.81 L110.35 407.19 L109.8 408.5 L109.25 407.19 L108.7 405.14 L108.15 406.21 L107.6 407.37 L107.05 407.26 L106.5 406.17 L105.95 406.08 L105.4 406.72 L104.85 407.11 L104.3 406.04 L103.75 408.04 L103.2 406.29 L102.65 405.51 L102.1 407.17 L101.55 404.19 L101 408.34 L100.45 405.75 L99.9 406.41 L99.35 407.51 L98.8 406.25 L98.25 406.22 L97.7 407.46 L97.15 408.13 L96.6 408.37 L96.05 406.27 L95.5 406.92 L94.95 407.71 L94.4 405.48 L93.85 406.07 L93.3 404.46 L92.75 408.06 L92.2 405.19 L91.65 408.43 L91.1 406.07 L90.55 406.39 L90 408.22 L89.45 407.44 L88.9 406.98 L88.35 404.67 L87.8 406.85 L87.25 407.74 L86.7 407.27 L86.15 407.67 L85.6 408.05 L85.05 406.95 L84.5 405.84 L83.95 406.11 L83.4 406.56 L82.85 407.03 L82.3 406.76 L81.75 406.98 L81.2 408.21 L80.65 407.5 L80.1 407.02 L79.55 408.26 L79 406.11 L78.45 407.01 L77.9 405.58 L77.35 400.62 L76.8 398.95 L76.25 404.37 L75.7 394.83 L75.15 387.33 L74.6 389.22 L74.05 390.78 L73.5 387.83 L72.95 388.13 L72.4 389.1 L71.85 388.94 L71.3 391.18 L70.75 390.43 L70.2 388.87 L69.65 390.06 L69.1 388.65 L68.55 390.25 L68 388.76 L67.45 389.42 L66.9 390.45 L66.35 389.81 L65.8 390.57 L65.25 390.3 L64.7 390.53 L64.15 392.38 L63.6 392.27 L63.05 391.95 L62.5 392.05 L61.95 391.08 L61.4 390.32 L60.85 388.96 L60.3 390.8 L59.75 391.28 L59.2 390.42 L58.65 388.42 L58.1 389.55 L57.55 388.56 L57 389.56 L56.45 388.43 L55.9 389.9 L55.35 390.26 L54.8 390.43 L54.25 391.18 L53.7 391.39 L53.15 389.89 L52.6 391.64 L52.05 403.45 L51.5 404.03 L50.95 404.49 L50.4 405.83 L49.85 406.81 L49.3 406.03 L48.75 408.82 L48.2 408.72 L47.65 407.09 L47.1 406.5 L46.55 408.91 L46 407.25 L45.45 407.48 L44.9 404.78 L44.35 408.2 L43.8 407.1 L43.25 406.22 L42.7 408.29 L42.15 407.55 L41.6 405.7 L41.05 406.41 L40.5 406.22 L39.95 408.14 L39.4 404.16 L38.85 405.51 L38.3 404.74 L37.75 404.53 L37.2 405.1 L36.65 407.84 L36.1 407.97 L35.55 409.04 L35 406.16 L34.45 404.32 L33.9 406.43 L33.35 408.67 L32.8 406.38 L32.25 404.74 L31.7 408.52 L31.15 407.55 L30.6 409 L30.05 407.29 L29.5 404.46 L28.95 406.47 L28.4 404.79 L27.85 405.21 L27.3 408.14 L26.75 407.29 L26.2 406.86 L25.65 405.26 L25.1 405.57 L24.55 408.48 L24 408.54 L23.45 405.56 L22.9 409.16 L22.35 407.32 L21.8 407.49 L21.25 404.14 L20.7 408.99 L20.15 405.55 L19.6 407.98 L19.05 404.65 L18.5 407.91 L17.95 405.89 L17.4 406.52 Z" fill="#8ab8ff"/></svg><div class="t" style="left:-2384.7px;width:2400px;text-align:right;top:366.32px;font-size:21.2px;color:#b8b8c4;transform:scale(0.25,0.25);transform-origin:100% 0;">1</div><div class="t" style="left:-2384.7px;width:2400px;text-align:right;top:388.62px;font-size:21.2px;color:#b8b8c4;transform:scale(0.25,0.25);transform-origin:100% 0;">0.1</div><div class="t" style="left:-2384.7px;width:2400px;text-align:right;top:410.72px;font-size:21.2px;color:#b8b8c4;transform:scale(0.25,0.25);transform-origin:100% 0;">0</div><div class="t" style="left:-2384.7px;width:2400px;text-align:right;top:432.92px;font-size:21.2px;color:#b8b8c4;transform:scale(0.25,0.25);transform-origin:100% 0;">0</div><div class="t" style="left:-1149px;width:2400px;text-align:center;top:438.97px;font-size:22.4px;color:#b8b8c4;transform:scale(0.25,0.25);transform-origin:50% 0;">03/15 00:00</div><div class="t" style="left:-1075.7px;width:2400px;text-align:center;top:438.97px;font-size:22.4px;color:#b8b8c4;transform:scale(0.25,0.25);transform-origin:50% 0;">03/16 00:00</div><div class="t" style="left:-1002.4px;width:2400px;text-align:center;top:438.97px;font-size:22.4px;color:#b8b8c4;transform:scale(0.25,0.25);transform-origin:50% 0;">03/17 00:00</div><div class="t" style="left:-929.1px;width:2400px;text-align:center;top:438.97px;font-size:22.4px;color:#b8b8c4;transform:scale(0.25,0.25);transform-origin:50% 0;">03/18 00:00</div><div class="t" style="left:-855.7px;width:2400px;text-align:center;top:438.97px;font-size:22.4px;color:#b8b8c4;transform:scale(0.25,0.25);transform-origin:50% 0;">03/19 00:00</div><div class="t" style="left:-782.3px;width:2400px;text-align:center;top:438.97px;font-size:22.4px;color:#b8b8c4;transform:scale(0.25,0.25);transform-origin:50% 0;">03/20 00:00</div><div class="t" style="left:-708.9px;width:2400px;text-align:center;top:438.97px;font-size:22.4px;color:#b8b8c4;transform:scale(0.25,0.25);transform-origin:50% 0;">03/21 00:00</div><svg class="s" style="left:8.4px;top:450.2px;" width="7" height="1.8" viewBox="0 0 7 1.8"><rect x="0" y="0" width="6.3" height="1.7" rx="0.8" fill="#73bf69"/></svg><div class="t" style="left:18px;top:448.2px;font-size:23px;color:#b8b8c4;transform:scale(0.25,0.25);transform-origin:0 0;">database-cluster-1</div><svg class="s" style="left:69.8px;top:450.2px;" width="7" height="1.8" viewBox="0 0 7 1.8"><rect x="0" y="0" width="6.3" height="1.7" rx="0.8" fill="#f2cc0c"/></svg><div class="t" style="left:79.4px;top:448.2px;font-size:23px;color:#b8b8c4;transform:scale(0.25,0.25);transform-origin:0 0;">database-cluster-2</div><svg class="s" style="left:131.2px;top:450.2px;" width="7" height="1.8" viewBox="0 0 7 1.8"><rect x="0" y="0" width="6.3" height="1.7" rx="0.8" fill="#8ab8ff"/></svg><div class="t" style="left:140.8px;top:448.2px;font-size:23px;color:#b8b8c4;transform:scale(0.25,0.25);transform-origin:0 0;">database-cluster-3</div><div class="p" style="left:541.68px;top:347.6px;width:535.38px;height:111.7px;"></div><div class="t" style="left:545.28px;top:351.99px;font-size:26.6px;color:#ccccdc;transform:scale(0.25,0.25);transform-origin:0 0;-webkit-text-stroke:0.8px #ccccdc;">Memory Usage (w/o cache)</div><svg class="s" style="left:0;top:0" width="1080" height="462"><line x1="570.1" y1="379.3" x2="1070" y2="379.3" stroke="rgba(204,204,220,0.08)" stroke-width="0.6"/><line x1="570.1" y1="397.3" x2="1070" y2="397.3" stroke="rgba(204,204,220,0.08)" stroke-width="0.6"/><line x1="570.1" y1="416.3" x2="1070" y2="416.3" stroke="rgba(204,204,220,0.08)" stroke-width="0.6"/><line x1="570.1" y1="435.6" x2="1070" y2="435.6" stroke="rgba(204,204,220,0.08)" stroke-width="0.6"/><line x1="602.4" y1="370" x2="602.4" y2="435.6" stroke="rgba(204,204,220,0.08)" stroke-width="0.6"/><line x1="673.8" y1="370" x2="673.8" y2="435.6" stroke="rgba(204,204,220,0.08)" stroke-width="0.6"/><line x1="745.3" y1="370" x2="745.3" y2="435.6" stroke="rgba(204,204,220,0.08)" stroke-width="0.6"/><line x1="816.9" y1="370" x2="816.9" y2="435.6" stroke="rgba(204,204,220,0.08)" stroke-width="0.6"/><line x1="888.4" y1="370" x2="888.4" y2="435.6" stroke="rgba(204,204,220,0.08)" stroke-width="0.6"/><line x1="959.8" y1="370" x2="959.8" y2="435.6" stroke="rgba(204,204,220,0.08)" stroke-width="0.6"/><line x1="1031.2" y1="370" x2="1031.2" y2="435.6" stroke="rgba(204,204,220,0.08)" stroke-width="0.6"/><path d="M570.1 375.1 L570.7 375.56 L571.3 376.01 L571.9 376.47 L572.5 376.92 L573.1 377.31 L573.7 377.4 L574.3 377.48 L574.9 377.57 L575.5 377.65 L576.1 377.74 L576.7 377.82 L577.3 377.91 L577.9 377.99 L578.5 378.08 L579.1 378.16 L579.7 378.25 L580.3 378.33 L580.9 378.42 L581.5 378.5 L582.1 378.59 L582.7 378.67 L583.3 378.76 L583.9 378.84 L584.5 378.93 L585.1 379.02 L585.7 379.14 L586.3 379.27 L586.9 379.39 L587.5 379.52 L588.1 379.64 L588.7 379.77 L589.3 379.89 L589.9 380.01 L590.5 380.14 L591.2 407.2 L591.2 407.2 L590.5 407.2 L589.9 407.45 L589.3 407.27 L588.7 407.42 L588.1 407.52 L587.5 407 L586.9 407.24 L586.3 406.99 L585.7 407.33 L585.1 407.41 L584.5 407.3 L583.9 407 L583.3 406.94 L582.7 406.84 L582.1 406.8 L581.5 407.13 L580.9 407.01 L580.3 407.03 L579.7 407.16 L579.1 406.66 L578.5 407.01 L577.9 406.81 L577.3 406.58 L576.7 406.99 L576.1 406.59 L575.5 406.6 L574.9 406.34 L574.3 406.9 L573.7 406.54 L573.1 406.33 L572.5 406.66 L571.9 406.64 L571.3 406.23 L570.7 406.54 L570.1 406.17 Z" fill="#73bf69"/><path d="M570.1 406.17 L570.7 406.54 L571.3 406.23 L571.9 406.64 L572.5 406.66 L573.1 406.33 L573.7 406.54 L574.3 406.9 L574.9 406.34 L575.5 406.6 L576.1 406.59 L576.7 406.99 L577.3 406.58 L577.9 406.81 L578.5 407.01 L579.1 406.66 L579.7 407.16 L580.3 407.03 L580.9 407.01 L581.5 407.13 L582.1 406.8 L582.7 406.84 L583.3 406.94 L583.9 407 L584.5 407.3 L585.1 407.41 L585.7 407.33 L586.3 406.99 L586.9 407.24 L587.5 407 L588.1 407.52 L588.7 407.42 L589.3 407.27 L589.9 407.45 L590.5 407.2 L591.1 413.41 L591.7 425.05 L592.3 429.67 L592.9 428.58 L593.5 426.5 L594.1 425.21 L594.7 423.46 L595.3 422.05 L595.9 420.19 L596.5 419.03 L597.1 417.46 L597.7 416.57 L598.3 415.45 L598.9 413.76 L599.5 413.19 L600.1 411.65 L600.7 411.05 L601.3 410.53 L601.9 410.65 L602.5 410.12 L603.1 409.5 L603.7 409.19 L604.3 408.91 L604.9 408.58 L605.5 408.33 L606.1 408.38 L606.7 408.24 L607.3 407.75 L607.9 408.01 L608.5 407.97 L609.1 407.61 L609.7 407.64 L610.3 407.24 L610.9 407.08 L611.5 406.97 L612.1 406.91 L612.7 406.98 L613.3 406.94 L613.9 406.74 L614.5 406.46 L615.1 406.72 L615.7 406.4 L616.3 406.31 L616.9 406.14 L617.5 406.32 L618.1 406.26 L618.7 405.83 L619.3 405.86 L619.9 406.02 L620.5 405.45 L621.1 405.52 L621.7 405.4 L622.3 405.01 L622.9 405.35 L623.5 405.33 L624.1 404.91 L624.7 404.7 L625.3 404.96 L625.9 404.55 L626.5 404.6 L627.1 404.39 L627.7 404.63 L628.3 404.28 L628.9 404.06 L629.5 404.19 L630.1 403.67 L630.7 403.07 L631.3 402.04 L631.9 402.25 L632.5 402.43 L633.1 403.18 L633.7 402.85 L634.3 403.3 L634.9 402.74 L635.5 402.74 L636.1 403.03 L636.7 402.8 L637.3 403.2 L637.9 403.01 L638.5 403.13 L639.1 403.22 L639.7 402.93 L640.3 402.78 L640.9 402.76 L641.5 403.28 L642.1 402.97 L642.7 403.3 L643.3 403.24 L643.9 403.18 L644.5 402.98 L645.1 403.19 L645.7 403.19 L646.3 403.01 L646.9 403.22 L647.5 402.84 L648.1 403.28 L648.7 402.83 L649.3 402.9 L649.9 403.34 L650.5 402.95 L651.1 403.03 L651.7 402.97 L652.3 402.91 L652.9 403.32 L653.5 403.23 L654.1 403.25 L654.7 403.25 L655.3 402.83 L655.9 403.26 L656.5 403.08 L657.1 403.2 L657.7 402.83 L658.3 402.98 L658.9 403.13 L659.5 402.87 L660.1 403.16 L660.7 403.32 L661.3 403.13 L661.9 402.93 L662.5 403.23 L663.1 403.07 L663.7 403.32 L664.3 402.77 L664.9 402.8 L665.5 402.99 L666.1 403.18 L666.7 402.77 L667.3 402.78 L667.9 402.74 L668.5 402.86 L669.1 403.18 L669.7 402.83 L670.3 403.02 L670.9 402.69 L671.5 402.7 L672.1 403.03 L672.7 402.79 L673.3 403.04 L673.9 403.1 L674.5 402.72 L675.1 402.59 L675.7 403.03 L676.3 402.62 L676.9 402.75 L677.5 402.52 L678.1 402.98 L678.7 402.72 L679.3 402.56 L679.9 402.5 L680.5 403.03 L681.1 402.85 L681.7 402.62 L682.3 402.93 L682.9 402.95 L683.5 402.64 L684.1 402.91 L684.7 402.53 L685.3 402.69 L685.9 402.69 L686.5 402.75 L687.1 402.39 L687.7 402.71 L688.3 402.51 L688.9 402.57 L689.5 402.42 L690.1 402.67 L690.7 402.84 L691.3 402.68 L691.9 402.5 L692.5 402.82 L693.1 402.5 L693.7 402.69 L694.3 402.48 L694.9 402.55 L695.5 402.59 L696.1 402.45 L696.7 402.62 L697.3 402.29 L697.9 402.72 L698.5 402.3 L699.1 402.28 L699.7 402.2 L700.3 402.33 L700.9 402.66 L701.5 402.47 L702.1 402.23 L702.7 402.62 L703.3 402.42 L703.9 402.57 L704.5 402.3 L705.1 402.28 L705.7 402.29 L706.3 402.46 L706.9 402.09 L707.5 402.54 L708.1 402.19 L708.7 402.03 L709.3 401.99 L709.9 402.23 L710.5 402.19 L711.1 402.34 L711.7 402.13 L712.3 401.92 L712.9 401.98 L713.5 402.21 L714.1 401.91 L714.7 402.08 L715.3 402.02 L715.9 402.3 L716.5 402.42 L717.1 401.91 L717.7 402.4 L718.3 402.33 L718.9 402.07 L719.5 401.91 L720.1 402.26 L720.7 402.17 L721.3 402.34 L721.9 401.88 L722.5 401.76 L723.1 402.06 L723.7 402.23 L724.3 401.93 L724.9 401.73 L725.5 401.88 L726.1 402.06 L726.7 401.89 L727.3 401.88 L727.9 401.85 L728.5 402.11 L729.1 401.91 L729.7 401.73 L730.3 401.95 L730.9 402.13 L731.5 402.1 L732.1 401.8 L732.7 402.08 L733.3 401.67 L733.9 401.59 L734.5 401.78 L735.1 401.94 L735.7 401.59 L736.3 402.03 L736.9 401.82 L737.5 401.99 L738.1 401.64 L738.7 401.89 L739.3 401.9 L739.9 402 L740.5 401.78 L741.1 401.91 L741.7 401.53 L742.3 401.73 L742.9 401.88 L743.5 401.93 L744.1 401.94 L744.7 401.59 L745.3 401.35 L745.9 401.68 L746.5 401.57 L747.1 401.6 L747.7 401.75 L748.3 401.36 L748.9 401.73 L749.5 401.33 L750.1 401.32 L750.7 401.85 L751.3 401.41 L751.9 401.82 L752.5 401.37 L753.1 401.47 L753.7 401.51 L754.3 401.31 L754.9 401.67 L755.5 401.61 L756.1 401.41 L756.7 401.59 L757.3 401.36 L757.9 401.31 L758.5 401.51 L759.1 401.58 L759.7 401.54 L760.3 401.6 L760.9 401.46 L761.5 401.15 L762.1 401.5 L762.7 401.28 L763.3 401.06 L763.9 401.23 L764.5 400.97 L765.1 400.98 L765.7 401.13 L766.3 401.11 L766.9 401.26 L767.5 401.05 L768.1 400.87 L768.7 400.72 L769.3 401.24 L769.9 401.05 L770.5 401.2 L771.1 401.17 L771.7 400.87 L772.3 400.87 L772.9 401.12 L773.5 400.92 L774.1 400.83 L774.7 400.98 L775.3 400.93 L775.9 400.7 L776.5 400.52 L777.1 400.44 L777.7 400.65 L778.3 400.3 L778.9 400.32 L779.5 400.23 L780.1 400.75 L780.7 400.2 L781.3 400.69 L781.9 400.39 L782.5 400.27 L783.1 400.14 L783.7 400.62 L784.3 400.36 L784.9 400.06 L785.5 400.32 L786.1 400.5 L786.7 400.06 L787.3 400.42 L787.9 400.15 L788.5 400.1 L789.1 400.35 L789.7 400.28 L790.3 399.92 L790.9 399.88 L791.5 400.22 L792.1 399.9 L792.7 400.05 L793.3 399.63 L793.9 400.06 L794.5 400.09 L795.1 399.9 L795.7 399.8 L796.3 399.6 L796.9 399.7 L797.5 399.94 L798.1 399.41 L798.7 399.68 L799.3 399.79 L799.9 399.81 L800.5 399.4 L801.1 399.59 L801.7 399.58 L802.3 399.3 L802.9 399.58 L803.5 399.56 L804.1 399.6 L804.7 399.79 L805.3 399.8 L805.9 399.78 L806.5 399.52 L807.1 399.68 L807.7 399.69 L808.3 399.21 L808.9 399.28 L809.5 399.5 L810.1 399.56 L810.7 399.36 L811.3 399.54 L811.9 399.7 L812.5 399.31 L813.1 399.36 L813.7 399.49 L814.3 399.19 L814.9 399.53 L815.5 399.13 L816.1 399.31 L816.7 399.44 L817.3 399.39 L817.9 399.03 L818.5 399.6 L819.1 399.14 L819.7 399.53 L820.3 399.31 L820.9 399.56 L821.5 399.38 L822.1 399.53 L822.7 399.2 L823.3 399.44 L823.9 399.14 L824.5 399.1 L825.1 398.75 L825.7 396.1 L826.3 394.36 L826.9 394.68 L827.5 394.5 L828.1 394.47 L828.7 394.53 L829.3 394.16 L829.9 394.24 L830.5 394.39 L831.1 394 L831.7 394.23 L832.3 394.5 L832.9 394.51 L833.5 394.04 L834.1 394.05 L834.7 394.21 L835.3 394.08 L835.9 394.14 L836.5 394.14 L837.1 394.01 L837.7 394.19 L838.3 394.3 L838.9 393.9 L839.5 394.23 L840.1 394.05 L840.7 394.21 L841.3 393.73 L841.9 393.99 L842.5 393.71 L843.1 394.15 L843.7 394.18 L844.3 394.17 L844.9 393.74 L845.5 393.81 L846.1 393.9 L846.7 394.07 L847.3 393.75 L847.9 393.9 L848.5 394.09 L849.1 393.74 L849.7 393.81 L850.3 394.05 L850.9 393.88 L851.5 393.83 L852.1 393.5 L852.7 393.78 L853.3 393.62 L853.9 393.38 L854.5 393.79 L855.1 393.33 L855.7 393.54 L856.3 393.61 L856.9 393.68 L857.5 393.49 L858.1 393.3 L858.7 393.25 L859.3 393.38 L859.9 393.48 L860.5 393.37 L861.1 393.34 L861.7 393.52 L862.3 393.19 L862.9 393.41 L863.5 393.11 L864.1 393.63 L864.7 393.59 L865.3 393.66 L865.9 393.32 L866.5 393.85 L867.1 393.61 L867.7 393.76 L868.3 393.79 L868.9 393.56 L869.5 393.54 L870.1 393.95 L870.7 393.84 L871.3 393.96 L871.9 393.93 L872.5 393.66 L873.1 393.67 L873.7 393.67 L874.3 393.63 L874.9 393.29 L875.5 393.34 L876.1 393.18 L876.7 393.35 L877.3 393.28 L877.9 393.07 L878.5 393.46 L879.1 393.05 L879.7 393.33 L880.3 393.24 L880.9 393.36 L881.5 393.22 L882.1 393.2 L882.7 392.84 L883.3 392.93 L883.9 393.13 L884.5 392.74 L885.1 393.11 L885.7 392.61 L886.3 392.78 L886.9 392.85 L887.5 392.46 L888.1 392.53 L888.7 392.75 L889.3 392.51 L889.9 392.21 L890.5 392.74 L891.1 392.63 L891.7 392.43 L892.3 392.63 L892.9 392.24 L893.5 392.22 L894.1 392.47 L894.7 392.48 L895.3 392.63 L895.9 392.55 L896.5 392.49 L897.1 392.73 L897.7 392.18 L898.3 392.2 L898.9 392.54 L899.5 392.64 L900.1 392.4 L900.7 392.35 L901.3 392.25 L901.9 392.2 L902.5 392.57 L903.1 392.17 L903.7 392.52 L904.3 392.37 L904.9 392.36 L905.5 392.24 L906.1 392.21 L906.7 392.51 L907.3 392.37 L907.9 392.33 L908.5 392.58 L909.1 392.2 L909.7 392.49 L910.3 392.42 L910.9 392.27 L911.5 392.63 L912.1 392.14 L912.7 392.2 L913.3 392.44 L913.9 392.43 L914.5 392.43 L915.1 392.19 L915.7 392.12 L916.3 392.44 L916.9 392.65 L917.5 392.15 L918.1 392.47 L918.7 392.55 L919.3 392.44 L919.9 392.56 L920.5 392.22 L921.1 392.58 L921.7 392.16 L922.3 392.08 L922.9 392.26 L923.5 392.07 L924.1 392.12 L924.7 392.49 L925.3 392.36 L925.9 392.07 L926.5 392.25 L927.1 392.44 L927.7 392.34 L928.3 392.46 L928.9 392.18 L929.5 392.17 L930.1 392.49 L930.7 392.02 L931.3 392.19 L931.9 392.52 L932.5 392.3 L933.1 392.5 L933.7 392.26 L934.3 391.99 L934.9 392.34 L935.5 392.04 L936.1 392.1 L936.7 392.05 L937.3 392.42 L937.9 392.14 L938.5 392.24 L939.1 392.46 L939.7 392.39 L940.3 392.16 L940.9 392.29 L941.5 391.99 L942.1 391.89 L942.7 392.11 L943.3 392.35 L943.9 392.25 L944.5 392.22 L945.1 392.07 L945.7 392.16 L946.3 392.06 L946.9 392.08 L947.5 391.8 L948.1 391.87 L948.7 392.29 L949.3 392.23 L949.9 391.83 L950.5 391.81 L951.1 391.87 L951.7 392.25 L952.3 391.8 L952.9 392.22 L953.5 392.02 L954.1 391.75 L954.7 392.11 L955.3 391.75 L955.9 392.17 L956.5 392.03 L957.1 392.14 L957.7 392.17 L958.3 391.78 L958.9 391.96 L959.5 392.11 L960.1 392.14 L960.7 391.78 L961.3 391.97 L961.9 391.68 L962.5 392.02 L963.1 391.86 L963.7 391.57 L964.3 391.96 L964.9 392 L965.5 391.72 L966.1 391.81 L966.7 391.92 L967.3 392.03 L967.9 391.98 L968.5 391.52 L969.1 391.83 L969.7 391.37 L970.3 391.44 L970.9 391.03 L971.5 390.89 L972.1 390.81 L972.7 391.13 L973.3 391 L973.9 390.62 L974.5 390.28 L975.1 390.66 L975.7 390.21 L976.3 390.49 L976.9 390.05 L977.5 390.19 L978.1 390.46 L978.7 390.02 L979.3 390.21 L979.9 390.47 L980.5 390.51 L981.1 390.1 L981.7 390.34 L982.3 390.09 L982.9 390.48 L983.5 390.19 L984.1 390.03 L984.7 390.31 L985.3 390.06 L985.9 390.18 L986.5 390.33 L987.1 390.05 L987.7 390.03 L988.3 389.96 L988.9 390.14 L989.5 389.85 L990.1 390.06 L990.7 390.13 L991.3 390.03 L991.9 390.23 L992.5 389.98 L993.1 390 L993.7 390.12 L994.3 390.12 L994.9 390.16 L995.5 390.12 L996.1 389.68 L996.7 389.83 L997.3 389.63 L997.9 389.75 L998.5 389.7 L999.1 389.61 L999.7 390.09 L1000.3 389.52 L1000.9 389.7 L1001.5 389.76 L1002.1 389.75 L1002.7 389.96 L1003.3 389.53 L1003.9 389.44 L1004.5 389.7 L1005.1 389.75 L1005.7 389.35 L1006.3 389.76 L1006.9 389.6 L1007.5 389.46 L1008.1 389.3 L1008.7 389.57 L1009.3 389.31 L1009.9 389.47 L1010.5 389.55 L1011.1 389.16 L1011.7 389.24 L1012.3 389.58 L1012.9 389.49 L1013.5 389.33 L1014.1 389.11 L1014.7 389.06 L1015.3 389.57 L1015.9 389.11 L1016.5 388.97 L1017.1 389.21 L1017.7 389.27 L1018.3 389.04 L1018.9 389 L1019.5 388.88 L1020.1 389.32 L1020.7 388.82 L1021.3 388.87 L1021.9 388.92 L1022.5 389.32 L1023.1 389.17 L1023.7 389.05 L1024.3 388.88 L1024.9 388.87 L1025.5 388.83 L1026.1 389.17 L1026.7 389.12 L1027.3 389 L1027.9 388.59 L1028.5 388.89 L1029.1 388.89 L1029.7 388.97 L1030.3 388.79 L1030.9 388.68 L1031.5 388.67 L1032.1 389.01 L1032.7 388.65 L1033.3 389 L1033.9 388.7 L1034.5 388.64 L1035.1 388.58 L1035.7 388.6 L1036.3 388.76 L1036.9 388.5 L1037.5 388.81 L1038.1 388.96 L1038.7 388.41 L1039.3 388.83 L1039.9 388.43 L1040.5 388.77 L1041.1 388.79 L1041.7 388.82 L1042.3 388.57 L1042.9 388.54 L1043.5 388.75 L1044.1 388.38 L1044.7 388.9 L1045.3 388.61 L1045.9 388.67 L1046.5 388.39 L1047.1 388.59 L1047.7 388.72 L1048.3 388.35 L1048.9 388.35 L1049.5 388.82 L1050.1 388.44 L1050.7 388.29 L1051.3 388.69 L1051.9 388.32 L1052.5 388.5 L1053.1 388.52 L1053.7 388.44 L1054.3 388.43 L1054.9 388.53 L1055.5 388.69 L1056.1 388.37 L1056.7 388.47 L1057.3 388.66 L1057.9 388.32 L1058.5 388.15 L1059.1 388.73 L1059.7 388.65 L1060.3 388.45 L1060.9 388.59 L1061.5 388.48 L1062.1 388.65 L1062.7 388.66 L1063.3 388.36 L1063.9 388.21 L1064.5 388.55 L1065.1 388.28 L1065.7 388.54 L1066.3 388.12 L1066.9 388.14 L1067.5 388.23 L1068.1 388.6 L1068.7 388.58 L1069.3 388.33 L1069.9 388.1 L1069.9 417.93 L1069.3 418.13 L1068.7 417.98 L1068.1 417.88 L1067.5 418.18 L1066.9 418.18 L1066.3 417.95 L1065.7 417.86 L1065.1 418.26 L1064.5 418.31 L1063.9 418.22 L1063.3 418.26 L1062.7 418.11 L1062.1 418.3 L1061.5 418.4 L1060.9 418.01 L1060.3 418.43 L1059.7 418.05 L1059.1 418.41 L1058.5 418.04 L1057.9 418.09 L1057.3 418.2 L1056.7 418.31 L1056.1 418.2 L1055.5 418.31 L1054.9 418.21 L1054.3 418.44 L1053.7 418.54 L1053.1 418.37 L1052.5 418.16 L1051.9 418.2 L1051.3 418.61 L1050.7 418.43 L1050.1 418.26 L1049.5 418.23 L1048.9 418.3 L1048.3 418.62 L1047.7 418.45 L1047.1 418.51 L1046.5 418.67 L1045.9 418.68 L1045.3 418.46 L1044.7 418.38 L1044.1 418.58 L1043.5 418.58 L1042.9 418.32 L1042.3 418.39 L1041.7 418.58 L1041.1 418.81 L1040.5 418.51 L1039.9 418.7 L1039.3 418.6 L1038.7 418.89 L1038.1 418.54 L1037.5 418.53 L1036.9 418.94 L1036.3 418.89 L1035.7 418.59 L1035.1 418.75 L1034.5 419.08 L1033.9 418.9 L1033.3 418.95 L1032.7 418.89 L1032.1 418.79 L1031.5 418.94 L1030.9 418.87 L1030.3 418.79 L1029.7 418.98 L1029.1 419.31 L1028.5 418.96 L1027.9 418.9 L1027.3 419.33 L1026.7 419.34 L1026.1 419.33 L1025.5 419.47 L1024.9 419.29 L1024.3 419.12 L1023.7 419.3 L1023.1 419.6 L1022.5 419.52 L1021.9 419.53 L1021.3 419.54 L1020.7 419.37 L1020.1 419.69 L1019.5 419.56 L1018.9 419.62 L1018.3 419.71 L1017.7 419.76 L1017.1 419.79 L1016.5 419.82 L1015.9 419.5 L1015.3 419.92 L1014.7 419.95 L1014.1 419.82 L1013.5 419.81 L1012.9 420.05 L1012.3 419.92 L1011.7 420.08 L1011.1 419.85 L1010.5 420.11 L1009.9 419.97 L1009.3 420.17 L1008.7 419.92 L1008.1 420.01 L1007.5 420.12 L1006.9 420.17 L1006.3 419.96 L1005.7 420.06 L1005.1 420.38 L1004.5 419.97 L1003.9 420.15 L1003.3 420.2 L1002.7 420.2 L1002.1 420.12 L1001.5 420.4 L1000.9 420.52 L1000.3 420.43 L999.7 420.25 L999.1 420.27 L998.5 420.48 L997.9 420.23 L997.3 420.55 L996.7 420.33 L996.1 420.39 L995.5 420.3 L994.9 420.37 L994.3 420.77 L993.7 420.52 L993.1 420.49 L992.5 420.67 L991.9 420.8 L991.3 420.52 L990.7 420.84 L990.1 420.57 L989.5 420.95 L988.9 420.85 L988.3 421 L987.7 420.92 L987.1 421.02 L986.5 420.72 L985.9 420.72 L985.3 420.89 L984.7 420.68 L984.1 420.75 L983.5 420.91 L982.9 420.8 L982.3 420.98 L981.7 421.14 L981.1 421.06 L980.5 421.18 L979.9 421.06 L979.3 420.83 L978.7 421.25 L978.1 421.08 L977.5 421.32 L976.9 420.96 L976.3 420.91 L975.7 420.93 L975.1 421.34 L974.5 421.21 L973.9 421.37 L973.3 421.28 L972.7 421.41 L972.1 421.41 L971.5 421.12 L970.9 421.46 L970.3 421.09 L969.7 421.23 L969.1 421.29 L968.5 421.57 L967.9 421.5 L967.3 421.58 L966.7 421.57 L966.1 421.45 L965.5 421.25 L964.9 421.65 L964.3 421.28 L963.7 421.51 L963.1 421.63 L962.5 421.7 L961.9 421.75 L961.3 421.65 L960.7 421.79 L960.1 421.41 L959.5 421.56 L958.9 421.61 L958.3 421.73 L957.7 421.57 L957.1 421.53 L956.5 421.44 L955.9 421.83 L955.3 421.84 L954.7 421.56 L954.1 421.8 L953.5 421.92 L952.9 421.73 L952.3 421.91 L951.7 421.66 L951.1 421.68 L950.5 421.65 L949.9 421.68 L949.3 421.89 L948.7 421.54 L948.1 421.85 L947.5 421.77 L946.9 421.8 L946.3 421.78 L945.7 421.92 L945.1 421.96 L944.5 422.02 L943.9 421.67 L943.3 421.99 L942.7 421.66 L942.1 421.79 L941.5 421.9 L940.9 421.95 L940.3 421.78 L939.7 421.75 L939.1 421.76 L938.5 421.73 L937.9 421.66 L937.3 421.91 L936.7 422.02 L936.1 421.75 L935.5 421.94 L934.9 422.07 L934.3 421.67 L933.7 421.68 L933.1 421.67 L932.5 422.12 L931.9 422.03 L931.3 422.05 L930.7 421.92 L930.1 421.89 L929.5 421.9 L928.9 422.09 L928.3 422.07 L927.7 421.96 L927.1 422.18 L926.5 421.91 L925.9 421.88 L925.3 422 L924.7 421.86 L924.1 422.08 L923.5 422.02 L922.9 422.26 L922.3 421.96 L921.7 422.04 L921.1 422.01 L920.5 422.19 L919.9 422.29 L919.3 421.92 L918.7 421.94 L918.1 422.12 L917.5 422.13 L916.9 422.29 L916.3 422.05 L915.7 422.11 L915.1 421.97 L914.5 422.19 L913.9 422.26 L913.3 422.1 L912.7 422.12 L912.1 422.4 L911.5 422.14 L910.9 421.95 L910.3 422.18 L909.7 422.07 L909.1 422.28 L908.5 422.18 L907.9 422.23 L907.3 422.38 L906.7 422.46 L906.1 422.05 L905.5 421.99 L904.9 422.15 L904.3 422.49 L903.7 422.06 L903.1 422.49 L902.5 422.52 L901.9 422.2 L901.3 422.17 L900.7 422.34 L900.1 422.09 L899.5 422.43 L898.9 422.22 L898.3 422.08 L897.7 422.08 L897.1 422.29 L896.5 422.17 L895.9 422.44 L895.3 422.55 L894.7 422.12 L894.1 422.44 L893.5 422.15 L892.9 422.49 L892.3 422.25 L891.7 422.45 L891.1 422.59 L890.5 422.12 L889.9 422.36 L889.3 422.52 L888.7 422.2 L888.1 422.61 L887.5 422.19 L886.9 422.28 L886.3 422.41 L885.7 422.49 L885.1 422.57 L884.5 422.58 L883.9 422.37 L883.3 422.57 L882.7 422.25 L882.1 422.23 L881.5 422.67 L880.9 422.53 L880.3 422.23 L879.7 422.4 L879.1 422.6 L878.5 422.27 L877.9 422.57 L877.3 422.67 L876.7 422.55 L876.1 422.56 L875.5 422.38 L874.9 422.46 L874.3 422.57 L873.7 422.58 L873.1 422.61 L872.5 422.73 L871.9 422.33 L871.3 422.46 L870.7 422.7 L870.1 422.54 L869.5 422.32 L868.9 422.42 L868.3 422.27 L867.7 422.72 L867.1 422.28 L866.5 422.38 L865.9 422.34 L865.3 422.37 L864.7 422.33 L864.1 422.38 L863.5 422.47 L862.9 422.77 L862.3 422.31 L861.7 422.39 L861.1 422.42 L860.5 422.76 L859.9 422.52 L859.3 422.48 L858.7 422.5 L858.1 422.54 L857.5 422.42 L856.9 422.5 L856.3 422.4 L855.7 422.36 L855.1 422.74 L854.5 422.84 L853.9 422.5 L853.3 422.7 L852.7 422.81 L852.1 422.49 L851.5 422.52 L850.9 422.43 L850.3 422.78 L849.7 422.77 L849.1 422.44 L848.5 422.89 L847.9 422.61 L847.3 422.66 L846.7 422.66 L846.1 422.91 L845.5 422.63 L844.9 422.55 L844.3 422.48 L843.7 422.69 L843.1 422.84 L842.5 422.55 L841.9 423 L841.3 422.99 L840.7 422.53 L840.1 422.77 L839.5 422.58 L838.9 422.59 L838.3 422.9 L837.7 422.82 L837.1 423.04 L836.5 423.03 L835.9 422.73 L835.3 423.02 L834.7 422.72 L834.1 422.66 L833.5 422.67 L832.9 422.91 L832.3 423.1 L831.7 422.77 L831.1 422.85 L830.5 422.8 L829.9 422.73 L829.3 422.92 L828.7 422.76 L828.1 422.84 L827.5 423.01 L826.9 423.16 L826.3 422.97 L825.7 423.15 L825.1 422.97 L824.5 422.85 L823.9 422.9 L823.3 423.17 L822.7 423.13 L822.1 423.21 L821.5 422.81 L820.9 422.87 L820.3 422.94 L819.7 423.13 L819.1 423.18 L818.5 423.03 L817.9 423.24 L817.3 422.97 L816.7 423.07 L816.1 423.14 L815.5 423.26 L814.9 423.11 L814.3 422.81 L813.7 423.1 L813.1 422.87 L812.5 423.08 L811.9 423.16 L811.3 423.02 L810.7 422.95 L810.1 423.21 L809.5 423.26 L808.9 423.34 L808.3 423.06 L807.7 423.32 L807.1 423.03 L806.5 422.93 L805.9 423.18 L805.3 423.07 L804.7 423.15 L804.1 423.34 L803.5 423.36 L802.9 423.33 L802.3 423.1 L801.7 423.06 L801.1 423.09 L800.5 423.01 L799.9 423.26 L799.3 423.07 L798.7 423.16 L798.1 423.35 L797.5 423.19 L796.9 423.45 L796.3 423.05 L795.7 423.14 L795.1 423.44 L794.5 423.28 L793.9 423.3 L793.3 423.25 L792.7 423.31 L792.1 423.45 L791.5 423.45 L790.9 423.4 L790.3 423.47 L789.7 423.15 L789.1 423.42 L788.5 423 L787.9 423.15 L787.3 423.29 L786.7 423.16 L786.1 422.98 L785.5 423.29 L784.9 423.05 L784.3 423.36 L783.7 423.06 L783.1 423.23 L782.5 423.12 L781.9 423.07 L781.3 423.18 L780.7 423.43 L780.1 423.17 L779.5 423.35 L778.9 423.36 L778.3 423.4 L777.7 423.17 L777.1 423.03 L776.5 423.02 L775.9 423.44 L775.3 423.13 L774.7 423.14 L774.1 423.38 L773.5 423.13 L772.9 423.25 L772.3 423.07 L771.7 423.45 L771.1 423.14 L770.5 423.42 L769.9 423.39 L769.3 423.25 L768.7 423.34 L768.1 423.2 L767.5 423.17 L766.9 423.5 L766.3 423.04 L765.7 423.41 L765.1 423.03 L764.5 423.07 L763.9 423.39 L763.3 423.48 L762.7 423.37 L762.1 423.06 L761.5 423.33 L760.9 423.3 L760.3 423.31 L759.7 423.25 L759.1 423.35 L758.5 423.04 L757.9 423.13 L757.3 423.36 L756.7 423.29 L756.1 423.46 L755.5 423.2 L754.9 423.05 L754.3 423.17 L753.7 423.53 L753.1 423.5 L752.5 423.32 L751.9 423.13 L751.3 423.29 L750.7 423.33 L750.1 423.15 L749.5 423.16 L748.9 423.47 L748.3 423.47 L747.7 423.36 L747.1 423.41 L746.5 423.21 L745.9 423.1 L745.3 423.41 L744.7 423.42 L744.1 423.25 L743.5 423.22 L742.9 423.1 L742.3 423.29 L741.7 423.35 L741.1 423.38 L740.5 423.29 L739.9 423.2 L739.3 423.24 L738.7 423.25 L738.1 423.09 L737.5 423.43 L736.9 423.48 L736.3 423.48 L735.7 423.21 L735.1 423.24 L734.5 423.4 L733.9 423.24 L733.3 423.44 L732.7 423.23 L732.1 423.42 L731.5 423.1 L730.9 423.18 L730.3 423.27 L729.7 423.46 L729.1 423.22 L728.5 423.55 L727.9 423.12 L727.3 423.27 L726.7 423.4 L726.1 423.5 L725.5 423.23 L724.9 423.39 L724.3 423.45 L723.7 423.4 L723.1 423.56 L722.5 423.22 L721.9 423.41 L721.3 423.52 L720.7 423.52 L720.1 423.37 L719.5 423.45 L718.9 423.22 L718.3 423.38 L717.7 423.33 L717.1 423.14 L716.5 423.53 L715.9 423.18 L715.3 423.53 L714.7 423.19 L714.1 423.17 L713.5 423.18 L712.9 423.41 L712.3 423.56 L711.7 423.51 L711.1 423.25 L710.5 423.28 L709.9 423.47 L709.3 423.26 L708.7 423.57 L708.1 423.44 L707.5 423.3 L706.9 423.6 L706.3 423.48 L705.7 423.62 L705.1 423.42 L704.5 423.34 L703.9 423.19 L703.3 423.49 L702.7 423.16 L702.1 423.45 L701.5 423.21 L700.9 423.49 L700.3 423.45 L699.7 423.38 L699.1 423.65 L698.5 423.64 L697.9 423.51 L697.3 423.19 L696.7 423.46 L696.1 423.58 L695.5 423.49 L694.9 423.24 L694.3 423.68 L693.7 423.38 L693.1 423.24 L692.5 423.51 L691.9 423.42 L691.3 423.47 L690.7 423.72 L690.1 423.57 L689.5 423.44 L688.9 423.34 L688.3 423.51 L687.7 423.73 L687.1 423.6 L686.5 423.36 L685.9 423.75 L685.3 423.3 L684.7 423.39 L684.1 423.67 L683.5 423.49 L682.9 423.62 L682.3 423.45 L681.7 423.78 L681.1 423.77 L680.5 423.42 L679.9 423.37 L679.3 423.61 L678.7 423.4 L678.1 423.52 L677.5 423.52 L676.9 423.42 L676.3 423.56 L675.7 423.8 L675.1 423.48 L674.5 423.72 L673.9 423.45 L673.3 423.85 L672.7 423.72 L672.1 423.78 L671.5 423.86 L670.9 423.53 L670.3 423.7 L669.7 423.86 L669.1 423.65 L668.5 423.9 L667.9 423.7 L667.3 423.7 L666.7 423.92 L666.1 423.76 L665.5 423.98 L664.9 423.81 L664.3 423.64 L663.7 423.94 L663.1 423.82 L662.5 423.8 L661.9 423.91 L661.3 423.81 L660.7 423.97 L660.1 423.9 L659.5 423.96 L658.9 424.02 L658.3 423.93 L657.7 423.89 L657.1 423.86 L656.5 423.98 L655.9 423.78 L655.3 423.98 L654.7 423.92 L654.1 423.87 L653.5 423.93 L652.9 424 L652.3 423.99 L651.7 424.26 L651.1 424.09 L650.5 424.19 L649.9 424.18 L649.3 424.22 L648.7 424.49 L648.1 424.38 L647.5 424.34 L646.9 424.42 L646.3 424.62 L645.7 424.65 L645.1 424.63 L644.5 424.47 L643.9 424.29 L643.3 424.64 L642.7 424.54 L642.1 424.52 L641.5 424.67 L640.9 424.84 L640.3 424.52 L639.7 424.84 L639.1 424.97 L638.5 424.81 L637.9 424.84 L637.3 424.68 L636.7 424.93 L636.1 424.97 L635.5 424.97 L634.9 424.93 L634.3 425.15 L633.7 424.98 L633.1 425.49 L632.5 425.39 L631.9 425.12 L631.3 425.27 L630.7 425.4 L630.1 425.52 L629.5 425.48 L628.9 425.77 L628.3 425.72 L627.7 425.71 L627.1 425.58 L626.5 425.58 L625.9 425.85 L625.3 425.93 L624.7 426.07 L624.1 426.04 L623.5 425.96 L622.9 426.06 L622.3 425.94 L621.7 426.15 L621.1 426.08 L620.5 426.27 L619.9 426.44 L619.3 426.57 L618.7 426.35 L618.1 426.57 L617.5 426.62 L616.9 426.61 L616.3 426.99 L615.7 426.82 L615.1 426.81 L614.5 427.22 L613.9 426.85 L613.3 427.27 L612.7 427.08 L612.1 427.38 L611.5 427.24 L610.9 427.22 L610.3 427.28 L609.7 427.38 L609.1 427.74 L608.5 427.86 L607.9 427.65 L607.3 427.92 L606.7 428.01 L606.1 428.14 L605.5 428.4 L604.9 428.41 L604.3 428.25 L603.7 428.67 L603.1 428.46 L602.5 428.47 L601.9 428.61 L601.3 428.73 L600.7 428.93 L600.1 429.01 L599.5 429.41 L598.9 429.62 L598.3 429.79 L597.7 429.72 L597.1 429.88 L596.5 430.38 L595.9 430.42 L595.3 430.74 L594.7 431.13 L594.1 431.08 L593.5 431.18 L592.9 431.38 L592.3 431.83 L591.7 429.75 L591.1 425.5 L590.5 423.64 L589.9 423.6 L589.3 423.18 L588.7 423.43 L588.1 423.22 L587.5 423.46 L586.9 423.42 L586.3 423.26 L585.7 423.6 L585.1 423.58 L584.5 423.41 L583.9 423.25 L583.3 423.1 L582.7 423.39 L582.1 423.43 L581.5 423.17 L580.9 423.49 L580.3 423.06 L579.7 423.46 L579.1 423.21 L578.5 423.51 L577.9 423.32 L577.3 423.12 L576.7 423.2 L576.1 423.11 L575.5 423.47 L574.9 423.04 L574.3 423.2 L573.7 423.25 L573.1 423.31 L572.5 423.05 L571.9 423.08 L571.3 423.03 L570.7 423.15 L570.1 422.96 Z" fill="#f2cc0c"/><path d="M570.1 422.96 L570.7 423.15 L571.3 423.03 L571.9 423.08 L572.5 423.05 L573.1 423.31 L573.7 423.25 L574.3 423.2 L574.9 423.04 L575.5 423.47 L576.1 423.11 L576.7 423.2 L577.3 423.12 L577.9 423.32 L578.5 423.51 L579.1 423.21 L579.7 423.46 L580.3 423.06 L580.9 423.49 L581.5 423.17 L582.1 423.43 L582.7 423.39 L583.3 423.1 L583.9 423.25 L584.5 423.41 L585.1 423.58 L585.7 423.6 L586.3 423.26 L586.9 423.42 L587.5 423.46 L588.1 423.22 L588.7 423.43 L589.3 423.18 L589.9 423.6 L590.5 423.64 L591.1 425.5 L591.7 429.75 L592.3 431.83 L592.9 431.38 L593.5 431.18 L594.1 431.08 L594.7 431.13 L595.3 430.74 L595.9 430.42 L596.5 430.38 L597.1 429.88 L597.7 429.72 L598.3 429.79 L598.9 429.62 L599.5 429.41 L600.1 429.01 L600.7 428.93 L601.3 428.73 L601.9 428.61 L602.5 428.47 L603.1 428.46 L603.7 428.67 L604.3 428.25 L604.9 428.41 L605.5 428.4 L606.1 428.14 L606.7 428.01 L607.3 427.92 L607.9 427.65 L608.5 427.86 L609.1 427.74 L609.7 427.38 L610.3 427.28 L610.9 427.22 L611.5 427.24 L612.1 427.38 L612.7 427.08 L613.3 427.27 L613.9 426.85 L614.5 427.22 L615.1 426.81 L615.7 426.82 L616.3 426.99 L616.9 426.61 L617.5 426.62 L618.1 426.57 L618.7 426.35 L619.3 426.57 L619.9 426.44 L620.5 426.27 L621.1 426.08 L621.7 426.15 L622.3 425.94 L622.9 426.06 L623.5 425.96 L624.1 426.04 L624.7 426.07 L625.3 425.93 L625.9 425.85 L626.5 425.58 L627.1 425.58 L627.7 425.71 L628.3 425.72 L628.9 425.77 L629.5 425.48 L630.1 425.52 L630.7 425.4 L631.3 425.27 L631.9 425.12 L632.5 425.39 L633.1 425.49 L633.7 424.98 L634.3 425.15 L634.9 424.93 L635.5 424.97 L636.1 424.97 L636.7 424.93 L637.3 424.68 L637.9 424.84 L638.5 424.81 L639.1 424.97 L639.7 424.84 L640.3 424.52 L640.9 424.84 L641.5 424.67 L642.1 424.52 L642.7 424.54 L643.3 424.64 L643.9 424.29 L644.5 424.47 L645.1 424.63 L645.7 424.65 L646.3 424.62 L646.9 424.42 L647.5 424.34 L648.1 424.38 L648.7 424.49 L649.3 424.22 L649.9 424.18 L650.5 424.19 L651.1 424.09 L651.7 424.26 L652.3 423.99 L652.9 424 L653.5 423.93 L654.1 423.87 L654.7 423.92 L655.3 423.98 L655.9 423.78 L656.5 423.98 L657.1 423.86 L657.7 423.89 L658.3 423.93 L658.9 424.02 L659.5 423.96 L660.1 423.9 L660.7 423.97 L661.3 423.81 L661.9 423.91 L662.5 423.8 L663.1 423.82 L663.7 423.94 L664.3 423.64 L664.9 423.81 L665.5 423.98 L666.1 423.76 L666.7 423.92 L667.3 423.7 L667.9 423.7 L668.5 423.9 L669.1 423.65 L669.7 423.86 L670.3 423.7 L670.9 423.53 L671.5 423.86 L672.1 423.78 L672.7 423.72 L673.3 423.85 L673.9 423.45 L674.5 423.72 L675.1 423.48 L675.7 423.8 L676.3 423.56 L676.9 423.42 L677.5 423.52 L678.1 423.52 L678.7 423.4 L679.3 423.61 L679.9 423.37 L680.5 423.42 L681.1 423.77 L681.7 423.78 L682.3 423.45 L682.9 423.62 L683.5 423.49 L684.1 423.67 L684.7 423.39 L685.3 423.3 L685.9 423.75 L686.5 423.36 L687.1 423.6 L687.7 423.73 L688.3 423.51 L688.9 423.34 L689.5 423.44 L690.1 423.57 L690.7 423.72 L691.3 423.47 L691.9 423.42 L692.5 423.51 L693.1 423.24 L693.7 423.38 L694.3 423.68 L694.9 423.24 L695.5 423.49 L696.1 423.58 L696.7 423.46 L697.3 423.19 L697.9 423.51 L698.5 423.64 L699.1 423.65 L699.7 423.38 L700.3 423.45 L700.9 423.49 L701.5 423.21 L702.1 423.45 L702.7 423.16 L703.3 423.49 L703.9 423.19 L704.5 423.34 L705.1 423.42 L705.7 423.62 L706.3 423.48 L706.9 423.6 L707.5 423.3 L708.1 423.44 L708.7 423.57 L709.3 423.26 L709.9 423.47 L710.5 423.28 L711.1 423.25 L711.7 423.51 L712.3 423.56 L712.9 423.41 L713.5 423.18 L714.1 423.17 L714.7 423.19 L715.3 423.53 L715.9 423.18 L716.5 423.53 L717.1 423.14 L717.7 423.33 L718.3 423.38 L718.9 423.22 L719.5 423.45 L720.1 423.37 L720.7 423.52 L721.3 423.52 L721.9 423.41 L722.5 423.22 L723.1 423.56 L723.7 423.4 L724.3 423.45 L724.9 423.39 L725.5 423.23 L726.1 423.5 L726.7 423.4 L727.3 423.27 L727.9 423.12 L728.5 423.55 L729.1 423.22 L729.7 423.46 L730.3 423.27 L730.9 423.18 L731.5 423.1 L732.1 423.42 L732.7 423.23 L733.3 423.44 L733.9 423.24 L734.5 423.4 L735.1 423.24 L735.7 423.21 L736.3 423.48 L736.9 423.48 L737.5 423.43 L738.1 423.09 L738.7 423.25 L739.3 423.24 L739.9 423.2 L740.5 423.29 L741.1 423.38 L741.7 423.35 L742.3 423.29 L742.9 423.1 L743.5 423.22 L744.1 423.25 L744.7 423.42 L745.3 423.41 L745.9 423.1 L746.5 423.21 L747.1 423.41 L747.7 423.36 L748.3 423.47 L748.9 423.47 L749.5 423.16 L750.1 423.15 L750.7 423.33 L751.3 423.29 L751.9 423.13 L752.5 423.32 L753.1 423.5 L753.7 423.53 L754.3 423.17 L754.9 423.05 L755.5 423.2 L756.1 423.46 L756.7 423.29 L757.3 423.36 L757.9 423.13 L758.5 423.04 L759.1 423.35 L759.7 423.25 L760.3 423.31 L760.9 423.3 L761.5 423.33 L762.1 423.06 L762.7 423.37 L763.3 423.48 L763.9 423.39 L764.5 423.07 L765.1 423.03 L765.7 423.41 L766.3 423.04 L766.9 423.5 L767.5 423.17 L768.1 423.2 L768.7 423.34 L769.3 423.25 L769.9 423.39 L770.5 423.42 L771.1 423.14 L771.7 423.45 L772.3 423.07 L772.9 423.25 L773.5 423.13 L774.1 423.38 L774.7 423.14 L775.3 423.13 L775.9 423.44 L776.5 423.02 L777.1 423.03 L777.7 423.17 L778.3 423.4 L778.9 423.36 L779.5 423.35 L780.1 423.17 L780.7 423.43 L781.3 423.18 L781.9 423.07 L782.5 423.12 L783.1 423.23 L783.7 423.06 L784.3 423.36 L784.9 423.05 L785.5 423.29 L786.1 422.98 L786.7 423.16 L787.3 423.29 L787.9 423.15 L788.5 423 L789.1 423.42 L789.7 423.15 L790.3 423.47 L790.9 423.4 L791.5 423.45 L792.1 423.45 L792.7 423.31 L793.3 423.25 L793.9 423.3 L794.5 423.28 L795.1 423.44 L795.7 423.14 L796.3 423.05 L796.9 423.45 L797.5 423.19 L798.1 423.35 L798.7 423.16 L799.3 423.07 L799.9 423.26 L800.5 423.01 L801.1 423.09 L801.7 423.06 L802.3 423.1 L802.9 423.33 L803.5 423.36 L804.1 423.34 L804.7 423.15 L805.3 423.07 L805.9 423.18 L806.5 422.93 L807.1 423.03 L807.7 423.32 L808.3 423.06 L808.9 423.34 L809.5 423.26 L810.1 423.21 L810.7 422.95 L811.3 423.02 L811.9 423.16 L812.5 423.08 L813.1 422.87 L813.7 423.1 L814.3 422.81 L814.9 423.11 L815.5 423.26 L816.1 423.14 L816.7 423.07 L817.3 422.97 L817.9 423.24 L818.5 423.03 L819.1 423.18 L819.7 423.13 L820.3 422.94 L820.9 422.87 L821.5 422.81 L822.1 423.21 L822.7 423.13 L823.3 423.17 L823.9 422.9 L824.5 422.85 L825.1 422.97 L825.7 423.15 L826.3 422.97 L826.9 423.16 L827.5 423.01 L828.1 422.84 L828.7 422.76 L829.3 422.92 L829.9 422.73 L830.5 422.8 L831.1 422.85 L831.7 422.77 L832.3 423.1 L832.9 422.91 L833.5 422.67 L834.1 422.66 L834.7 422.72 L835.3 423.02 L835.9 422.73 L836.5 423.03 L837.1 423.04 L837.7 422.82 L838.3 422.9 L838.9 422.59 L839.5 422.58 L840.1 422.77 L840.7 422.53 L841.3 422.99 L841.9 423 L842.5 422.55 L843.1 422.84 L843.7 422.69 L844.3 422.48 L844.9 422.55 L845.5 422.63 L846.1 422.91 L846.7 422.66 L847.3 422.66 L847.9 422.61 L848.5 422.89 L849.1 422.44 L849.7 422.77 L850.3 422.78 L850.9 422.43 L851.5 422.52 L852.1 422.49 L852.7 422.81 L853.3 422.7 L853.9 422.5 L854.5 422.84 L855.1 422.74 L855.7 422.36 L856.3 422.4 L856.9 422.5 L857.5 422.42 L858.1 422.54 L858.7 422.5 L859.3 422.48 L859.9 422.52 L860.5 422.76 L861.1 422.42 L861.7 422.39 L862.3 422.31 L862.9 422.77 L863.5 422.47 L864.1 422.38 L864.7 422.33 L865.3 422.37 L865.9 422.34 L866.5 422.38 L867.1 422.28 L867.7 422.72 L868.3 422.27 L868.9 422.42 L869.5 422.32 L870.1 422.54 L870.7 422.7 L871.3 422.46 L871.9 422.33 L872.5 422.73 L873.1 422.61 L873.7 422.58 L874.3 422.57 L874.9 422.46 L875.5 422.38 L876.1 422.56 L876.7 422.55 L877.3 422.67 L877.9 422.57 L878.5 422.27 L879.1 422.6 L879.7 422.4 L880.3 422.23 L880.9 422.53 L881.5 422.67 L882.1 422.23 L882.7 422.25 L883.3 422.57 L883.9 422.37 L884.5 422.58 L885.1 422.57 L885.7 422.49 L886.3 422.41 L886.9 422.28 L887.5 422.19 L888.1 422.61 L888.7 422.2 L889.3 422.52 L889.9 422.36 L890.5 422.12 L891.1 422.59 L891.7 422.45 L892.3 422.25 L892.9 422.49 L893.5 422.15 L894.1 422.44 L894.7 422.12 L895.3 422.55 L895.9 422.44 L896.5 422.17 L897.1 422.29 L897.7 422.08 L898.3 422.08 L898.9 422.22 L899.5 422.43 L900.1 422.09 L900.7 422.34 L901.3 422.17 L901.9 422.2 L902.5 422.52 L903.1 422.49 L903.7 422.06 L904.3 422.49 L904.9 422.15 L905.5 421.99 L906.1 422.05 L906.7 422.46 L907.3 422.38 L907.9 422.23 L908.5 422.18 L909.1 422.28 L909.7 422.07 L910.3 422.18 L910.9 421.95 L911.5 422.14 L912.1 422.4 L912.7 422.12 L913.3 422.1 L913.9 422.26 L914.5 422.19 L915.1 421.97 L915.7 422.11 L916.3 422.05 L916.9 422.29 L917.5 422.13 L918.1 422.12 L918.7 421.94 L919.3 421.92 L919.9 422.29 L920.5 422.19 L921.1 422.01 L921.7 422.04 L922.3 421.96 L922.9 422.26 L923.5 422.02 L924.1 422.08 L924.7 421.86 L925.3 422 L925.9 421.88 L926.5 421.91 L927.1 422.18 L927.7 421.96 L928.3 422.07 L928.9 422.09 L929.5 421.9 L930.1 421.89 L930.7 421.92 L931.3 422.05 L931.9 422.03 L932.5 422.12 L933.1 421.67 L933.7 421.68 L934.3 421.67 L934.9 422.07 L935.5 421.94 L936.1 421.75 L936.7 422.02 L937.3 421.91 L937.9 421.66 L938.5 421.73 L939.1 421.76 L939.7 421.75 L940.3 421.78 L940.9 421.95 L941.5 421.9 L942.1 421.79 L942.7 421.66 L943.3 421.99 L943.9 421.67 L944.5 422.02 L945.1 421.96 L945.7 421.92 L946.3 421.78 L946.9 421.8 L947.5 421.77 L948.1 421.85 L948.7 421.54 L949.3 421.89 L949.9 421.68 L950.5 421.65 L951.1 421.68 L951.7 421.66 L952.3 421.91 L952.9 421.73 L953.5 421.92 L954.1 421.8 L954.7 421.56 L955.3 421.84 L955.9 421.83 L956.5 421.44 L957.1 421.53 L957.7 421.57 L958.3 421.73 L958.9 421.61 L959.5 421.56 L960.1 421.41 L960.7 421.79 L961.3 421.65 L961.9 421.75 L962.5 421.7 L963.1 421.63 L963.7 421.51 L964.3 421.28 L964.9 421.65 L965.5 421.25 L966.1 421.45 L966.7 421.57 L967.3 421.58 L967.9 421.5 L968.5 421.57 L969.1 421.29 L969.7 421.23 L970.3 421.09 L970.9 421.46 L971.5 421.12 L972.1 421.41 L972.7 421.41 L973.3 421.28 L973.9 421.37 L974.5 421.21 L975.1 421.34 L975.7 420.93 L976.3 420.91 L976.9 420.96 L977.5 421.32 L978.1 421.08 L978.7 421.25 L979.3 420.83 L979.9 421.06 L980.5 421.18 L981.1 421.06 L981.7 421.14 L982.3 420.98 L982.9 420.8 L983.5 420.91 L984.1 420.75 L984.7 420.68 L985.3 420.89 L985.9 420.72 L986.5 420.72 L987.1 421.02 L987.7 420.92 L988.3 421 L988.9 420.85 L989.5 420.95 L990.1 420.57 L990.7 420.84 L991.3 420.52 L991.9 420.8 L992.5 420.67 L993.1 420.49 L993.7 420.52 L994.3 420.77 L994.9 420.37 L995.5 420.3 L996.1 420.39 L996.7 420.33 L997.3 420.55 L997.9 420.23 L998.5 420.48 L999.1 420.27 L999.7 420.25 L1000.3 420.43 L1000.9 420.52 L1001.5 420.4 L1002.1 420.12 L1002.7 420.2 L1003.3 420.2 L1003.9 420.15 L1004.5 419.97 L1005.1 420.38 L1005.7 420.06 L1006.3 419.96 L1006.9 420.17 L1007.5 420.12 L1008.1 420.01 L1008.7 419.92 L1009.3 420.17 L1009.9 419.97 L1010.5 420.11 L1011.1 419.85 L1011.7 420.08 L1012.3 419.92 L1012.9 420.05 L1013.5 419.81 L1014.1 419.82 L1014.7 419.95 L1015.3 419.92 L1015.9 419.5 L1016.5 419.82 L1017.1 419.79 L1017.7 419.76 L1018.3 419.71 L1018.9 419.62 L1019.5 419.56 L1020.1 419.69 L1020.7 419.37 L1021.3 419.54 L1021.9 419.53 L1022.5 419.52 L1023.1 419.6 L1023.7 419.3 L1024.3 419.12 L1024.9 419.29 L1025.5 419.47 L1026.1 419.33 L1026.7 419.34 L1027.3 419.33 L1027.9 418.9 L1028.5 418.96 L1029.1 419.31 L1029.7 418.98 L1030.3 418.79 L1030.9 418.87 L1031.5 418.94 L1032.1 418.79 L1032.7 418.89 L1033.3 418.95 L1033.9 418.9 L1034.5 419.08 L1035.1 418.75 L1035.7 418.59 L1036.3 418.89 L1036.9 418.94 L1037.5 418.53 L1038.1 418.54 L1038.7 418.89 L1039.3 418.6 L1039.9 418.7 L1040.5 418.51 L1041.1 418.81 L1041.7 418.58 L1042.3 418.39 L1042.9 418.32 L1043.5 418.58 L1044.1 418.58 L1044.7 418.38 L1045.3 418.46 L1045.9 418.68 L1046.5 418.67 L1047.1 418.51 L1047.7 418.45 L1048.3 418.62 L1048.9 418.3 L1049.5 418.23 L1050.1 418.26 L1050.7 418.43 L1051.3 418.61 L1051.9 418.2 L1052.5 418.16 L1053.1 418.37 L1053.7 418.54 L1054.3 418.44 L1054.9 418.21 L1055.5 418.31 L1056.1 418.2 L1056.7 418.31 L1057.3 418.2 L1057.9 418.09 L1058.5 418.04 L1059.1 418.41 L1059.7 418.05 L1060.3 418.43 L1060.9 418.01 L1061.5 418.4 L1062.1 418.3 L1062.7 418.11 L1063.3 418.26 L1063.9 418.22 L1064.5 418.31 L1065.1 418.26 L1065.7 417.86 L1066.3 417.95 L1066.9 418.18 L1067.5 418.18 L1068.1 417.88 L1068.7 417.98 L1069.3 418.13 L1069.9 417.93 L1069.9 435.6 L1069.3 435.6 L1068.7 435.6 L1068.1 435.6 L1067.5 435.6 L1066.9 435.6 L1066.3 435.6 L1065.7 435.6 L1065.1 435.6 L1064.5 435.6 L1063.9 435.6 L1063.3 435.6 L1062.7 435.6 L1062.1 435.6 L1061.5 435.6 L1060.9 435.6 L1060.3 435.6 L1059.7 435.6 L1059.1 435.6 L1058.5 435.6 L1057.9 435.6 L1057.3 435.6 L1056.7 435.6 L1056.1 435.6 L1055.5 435.6 L1054.9 435.6 L1054.3 435.6 L1053.7 435.6 L1053.1 435.6 L1052.5 435.6 L1051.9 435.6 L1051.3 435.6 L1050.7 435.6 L1050.1 435.6 L1049.5 435.6 L1048.9 435.6 L1048.3 435.6 L1047.7 435.6 L1047.1 435.6 L1046.5 435.6 L1045.9 435.6 L1045.3 435.6 L1044.7 435.6 L1044.1 435.6 L1043.5 435.6 L1042.9 435.6 L1042.3 435.6 L1041.7 435.6 L1041.1 435.6 L1040.5 435.6 L1039.9 435.6 L1039.3 435.6 L1038.7 435.6 L1038.1 435.6 L1037.5 435.6 L1036.9 435.6 L1036.3 435.6 L1035.7 435.6 L1035.1 435.6 L1034.5 435.6 L1033.9 435.6 L1033.3 435.6 L1032.7 435.6 L1032.1 435.6 L1031.5 435.6 L1030.9 435.6 L1030.3 435.6 L1029.7 435.6 L1029.1 435.6 L1028.5 435.6 L1027.9 435.6 L1027.3 435.6 L1026.7 435.6 L1026.1 435.6 L1025.5 435.6 L1024.9 435.6 L1024.3 435.6 L1023.7 435.6 L1023.1 435.6 L1022.5 435.6 L1021.9 435.6 L1021.3 435.6 L1020.7 435.6 L1020.1 435.6 L1019.5 435.6 L1018.9 435.6 L1018.3 435.6 L1017.7 435.6 L1017.1 435.6 L1016.5 435.6 L1015.9 435.6 L1015.3 435.6 L1014.7 435.6 L1014.1 435.6 L1013.5 435.6 L1012.9 435.6 L1012.3 435.6 L1011.7 435.6 L1011.1 435.6 L1010.5 435.6 L1009.9 435.6 L1009.3 435.6 L1008.7 435.6 L1008.1 435.6 L1007.5 435.6 L1006.9 435.6 L1006.3 435.6 L1005.7 435.6 L1005.1 435.6 L1004.5 435.6 L1003.9 435.6 L1003.3 435.6 L1002.7 435.6 L1002.1 435.6 L1001.5 435.6 L1000.9 435.6 L1000.3 435.6 L999.7 435.6 L999.1 435.6 L998.5 435.6 L997.9 435.6 L997.3 435.6 L996.7 435.6 L996.1 435.6 L995.5 435.6 L994.9 435.6 L994.3 435.6 L993.7 435.6 L993.1 435.6 L992.5 435.6 L991.9 435.6 L991.3 435.6 L990.7 435.6 L990.1 435.6 L989.5 435.6 L988.9 435.6 L988.3 435.6 L987.7 435.6 L987.1 435.6 L986.5 435.6 L985.9 435.6 L985.3 435.6 L984.7 435.6 L984.1 435.6 L983.5 435.6 L982.9 435.6 L982.3 435.6 L981.7 435.6 L981.1 435.6 L980.5 435.6 L979.9 435.6 L979.3 435.6 L978.7 435.6 L978.1 435.6 L977.5 435.6 L976.9 435.6 L976.3 435.6 L975.7 435.6 L975.1 435.6 L974.5 435.6 L973.9 435.6 L973.3 435.6 L972.7 435.6 L972.1 435.6 L971.5 435.6 L970.9 435.6 L970.3 435.6 L969.7 435.6 L969.1 435.6 L968.5 435.6 L967.9 435.6 L967.3 435.6 L966.7 435.6 L966.1 435.6 L965.5 435.6 L964.9 435.6 L964.3 435.6 L963.7 435.6 L963.1 435.6 L962.5 435.6 L961.9 435.6 L961.3 435.6 L960.7 435.6 L960.1 435.6 L959.5 435.6 L958.9 435.6 L958.3 435.6 L957.7 435.6 L957.1 435.6 L956.5 435.6 L955.9 435.6 L955.3 435.6 L954.7 435.6 L954.1 435.6 L953.5 435.6 L952.9 435.6 L952.3 435.6 L951.7 435.6 L951.1 435.6 L950.5 435.6 L949.9 435.6 L949.3 435.6 L948.7 435.6 L948.1 435.6 L947.5 435.6 L946.9 435.6 L946.3 435.6 L945.7 435.6 L945.1 435.6 L944.5 435.6 L943.9 435.6 L943.3 435.6 L942.7 435.6 L942.1 435.6 L941.5 435.6 L940.9 435.6 L940.3 435.6 L939.7 435.6 L939.1 435.6 L938.5 435.6 L937.9 435.6 L937.3 435.6 L936.7 435.6 L936.1 435.6 L935.5 435.6 L934.9 435.6 L934.3 435.6 L933.7 435.6 L933.1 435.6 L932.5 435.6 L931.9 435.6 L931.3 435.6 L930.7 435.6 L930.1 435.6 L929.5 435.6 L928.9 435.6 L928.3 435.6 L927.7 435.6 L927.1 435.6 L926.5 435.6 L925.9 435.6 L925.3 435.6 L924.7 435.6 L924.1 435.6 L923.5 435.6 L922.9 435.6 L922.3 435.6 L921.7 435.6 L921.1 435.6 L920.5 435.6 L919.9 435.6 L919.3 435.6 L918.7 435.6 L918.1 435.6 L917.5 435.6 L916.9 435.6 L916.3 435.6 L915.7 435.6 L915.1 435.6 L914.5 435.6 L913.9 435.6 L913.3 435.6 L912.7 435.6 L912.1 435.6 L911.5 435.6 L910.9 435.6 L910.3 435.6 L909.7 435.6 L909.1 435.6 L908.5 435.6 L907.9 435.6 L907.3 435.6 L906.7 435.6 L906.1 435.6 L905.5 435.6 L904.9 435.6 L904.3 435.6 L903.7 435.6 L903.1 435.6 L902.5 435.6 L901.9 435.6 L901.3 435.6 L900.7 435.6 L900.1 435.6 L899.5 435.6 L898.9 435.6 L898.3 435.6 L897.7 435.6 L897.1 435.6 L896.5 435.6 L895.9 435.6 L895.3 435.6 L894.7 435.6 L894.1 435.6 L893.5 435.6 L892.9 435.6 L892.3 435.6 L891.7 435.6 L891.1 435.6 L890.5 435.6 L889.9 435.6 L889.3 435.6 L888.7 435.6 L888.1 435.6 L887.5 435.6 L886.9 435.6 L886.3 435.6 L885.7 435.6 L885.1 435.6 L884.5 435.6 L883.9 435.6 L883.3 435.6 L882.7 435.6 L882.1 435.6 L881.5 435.6 L880.9 435.6 L880.3 435.6 L879.7 435.6 L879.1 435.6 L878.5 435.6 L877.9 435.6 L877.3 435.6 L876.7 435.6 L876.1 435.6 L875.5 435.6 L874.9 435.6 L874.3 435.6 L873.7 435.6 L873.1 435.6 L872.5 435.6 L871.9 435.6 L871.3 435.6 L870.7 435.6 L870.1 435.6 L869.5 435.6 L868.9 435.6 L868.3 435.6 L867.7 435.6 L867.1 435.6 L866.5 435.6 L865.9 435.6 L865.3 435.6 L864.7 435.6 L864.1 435.6 L863.5 435.6 L862.9 435.6 L862.3 435.6 L861.7 435.6 L861.1 435.6 L860.5 435.6 L859.9 435.6 L859.3 435.6 L858.7 435.6 L858.1 435.6 L857.5 435.6 L856.9 435.6 L856.3 435.6 L855.7 435.6 L855.1 435.6 L854.5 435.6 L853.9 435.6 L853.3 435.6 L852.7 435.6 L852.1 435.6 L851.5 435.6 L850.9 435.6 L850.3 435.6 L849.7 435.6 L849.1 435.6 L848.5 435.6 L847.9 435.6 L847.3 435.6 L846.7 435.6 L846.1 435.6 L845.5 435.6 L844.9 435.6 L844.3 435.6 L843.7 435.6 L843.1 435.6 L842.5 435.6 L841.9 435.6 L841.3 435.6 L840.7 435.6 L840.1 435.6 L839.5 435.6 L838.9 435.6 L838.3 435.6 L837.7 435.6 L837.1 435.6 L836.5 435.6 L835.9 435.6 L835.3 435.6 L834.7 435.6 L834.1 435.6 L833.5 435.6 L832.9 435.6 L832.3 435.6 L831.7 435.6 L831.1 435.6 L830.5 435.6 L829.9 435.6 L829.3 435.6 L828.7 435.6 L828.1 435.6 L827.5 435.6 L826.9 435.6 L826.3 435.6 L825.7 435.6 L825.1 435.6 L824.5 435.6 L823.9 435.6 L823.3 435.6 L822.7 435.6 L822.1 435.6 L821.5 435.6 L820.9 435.6 L820.3 435.6 L819.7 435.6 L819.1 435.6 L818.5 435.6 L817.9 435.6 L817.3 435.6 L816.7 435.6 L816.1 435.6 L815.5 435.6 L814.9 435.6 L814.3 435.6 L813.7 435.6 L813.1 435.6 L812.5 435.6 L811.9 435.6 L811.3 435.6 L810.7 435.6 L810.1 435.6 L809.5 435.6 L808.9 435.6 L808.3 435.6 L807.7 435.6 L807.1 435.6 L806.5 435.6 L805.9 435.6 L805.3 435.6 L804.7 435.6 L804.1 435.6 L803.5 435.6 L802.9 435.6 L802.3 435.6 L801.7 435.6 L801.1 435.6 L800.5 435.6 L799.9 435.6 L799.3 435.6 L798.7 435.6 L798.1 435.6 L797.5 435.6 L796.9 435.6 L796.3 435.6 L795.7 435.6 L795.1 435.6 L794.5 435.6 L793.9 435.6 L793.3 435.6 L792.7 435.6 L792.1 435.6 L791.5 435.6 L790.9 435.6 L790.3 435.6 L789.7 435.6 L789.1 435.6 L788.5 435.6 L787.9 435.6 L787.3 435.6 L786.7 435.6 L786.1 435.6 L785.5 435.6 L784.9 435.6 L784.3 435.6 L783.7 435.6 L783.1 435.6 L782.5 435.6 L781.9 435.6 L781.3 435.6 L780.7 435.6 L780.1 435.6 L779.5 435.6 L778.9 435.6 L778.3 435.6 L777.7 435.6 L777.1 435.6 L776.5 435.6 L775.9 435.6 L775.3 435.6 L774.7 435.6 L774.1 435.6 L773.5 435.6 L772.9 435.6 L772.3 435.6 L771.7 435.6 L771.1 435.6 L770.5 435.6 L769.9 435.6 L769.3 435.6 L768.7 435.6 L768.1 435.6 L767.5 435.6 L766.9 435.6 L766.3 435.6 L765.7 435.6 L765.1 435.6 L764.5 435.6 L763.9 435.6 L763.3 435.6 L762.7 435.6 L762.1 435.6 L761.5 435.6 L760.9 435.6 L760.3 435.6 L759.7 435.6 L759.1 435.6 L758.5 435.6 L757.9 435.6 L757.3 435.6 L756.7 435.6 L756.1 435.6 L755.5 435.6 L754.9 435.6 L754.3 435.6 L753.7 435.6 L753.1 435.6 L752.5 435.6 L751.9 435.6 L751.3 435.6 L750.7 435.6 L750.1 435.6 L749.5 435.6 L748.9 435.6 L748.3 435.6 L747.7 435.6 L747.1 435.6 L746.5 435.6 L745.9 435.6 L745.3 435.6 L744.7 435.6 L744.1 435.6 L743.5 435.6 L742.9 435.6 L742.3 435.6 L741.7 435.6 L741.1 435.6 L740.5 435.6 L739.9 435.6 L739.3 435.6 L738.7 435.6 L738.1 435.6 L737.5 435.6 L736.9 435.6 L736.3 435.6 L735.7 435.6 L735.1 435.6 L734.5 435.6 L733.9 435.6 L733.3 435.6 L732.7 435.6 L732.1 435.6 L731.5 435.6 L730.9 435.6 L730.3 435.6 L729.7 435.6 L729.1 435.6 L728.5 435.6 L727.9 435.6 L727.3 435.6 L726.7 435.6 L726.1 435.6 L725.5 435.6 L724.9 435.6 L724.3 435.6 L723.7 435.6 L723.1 435.6 L722.5 435.6 L721.9 435.6 L721.3 435.6 L720.7 435.6 L720.1 435.6 L719.5 435.6 L718.9 435.6 L718.3 435.6 L717.7 435.6 L717.1 435.6 L716.5 435.6 L715.9 435.6 L715.3 435.6 L714.7 435.6 L714.1 435.6 L713.5 435.6 L712.9 435.6 L712.3 435.6 L711.7 435.6 L711.1 435.6 L710.5 435.6 L709.9 435.6 L709.3 435.6 L708.7 435.6 L708.1 435.6 L707.5 435.6 L706.9 435.6 L706.3 435.6 L705.7 435.6 L705.1 435.6 L704.5 435.6 L703.9 435.6 L703.3 435.6 L702.7 435.6 L702.1 435.6 L701.5 435.6 L700.9 435.6 L700.3 435.6 L699.7 435.6 L699.1 435.6 L698.5 435.6 L697.9 435.6 L697.3 435.6 L696.7 435.6 L696.1 435.6 L695.5 435.6 L694.9 435.6 L694.3 435.6 L693.7 435.6 L693.1 435.6 L692.5 435.6 L691.9 435.6 L691.3 435.6 L690.7 435.6 L690.1 435.6 L689.5 435.6 L688.9 435.6 L688.3 435.6 L687.7 435.6 L687.1 435.6 L686.5 435.6 L685.9 435.6 L685.3 435.6 L684.7 435.6 L684.1 435.6 L683.5 435.6 L682.9 435.6 L682.3 435.6 L681.7 435.6 L681.1 435.6 L680.5 435.6 L679.9 435.6 L679.3 435.6 L678.7 435.6 L678.1 435.6 L677.5 435.6 L676.9 435.6 L676.3 435.6 L675.7 435.6 L675.1 435.6 L674.5 435.6 L673.9 435.6 L673.3 435.6 L672.7 435.6 L672.1 435.6 L671.5 435.6 L670.9 435.6 L670.3 435.6 L669.7 435.6 L669.1 435.6 L668.5 435.6 L667.9 435.6 L667.3 435.6 L666.7 435.6 L666.1 435.6 L665.5 435.6 L664.9 435.6 L664.3 435.6 L663.7 435.6 L663.1 435.6 L662.5 435.6 L661.9 435.6 L661.3 435.6 L660.7 435.6 L660.1 435.6 L659.5 435.6 L658.9 435.6 L658.3 435.6 L657.7 435.6 L657.1 435.6 L656.5 435.6 L655.9 435.6 L655.3 435.6 L654.7 435.6 L654.1 435.6 L653.5 435.6 L652.9 435.6 L652.3 435.6 L651.7 435.6 L651.1 435.6 L650.5 435.6 L649.9 435.6 L649.3 435.6 L648.7 435.6 L648.1 435.6 L647.5 435.6 L646.9 435.6 L646.3 435.6 L645.7 435.6 L645.1 435.6 L644.5 435.6 L643.9 435.6 L643.3 435.6 L642.7 435.6 L642.1 435.6 L641.5 435.6 L640.9 435.6 L640.3 435.6 L639.7 435.6 L639.1 435.6 L638.5 435.6 L637.9 435.6 L637.3 435.6 L636.7 435.6 L636.1 435.6 L635.5 435.6 L634.9 435.6 L634.3 435.6 L633.7 435.6 L633.1 435.6 L632.5 435.6 L631.9 435.6 L631.3 435.6 L630.7 435.6 L630.1 435.6 L629.5 435.6 L628.9 435.6 L628.3 435.6 L627.7 435.6 L627.1 435.6 L626.5 435.6 L625.9 435.6 L625.3 435.6 L624.7 435.6 L624.1 435.6 L623.5 435.6 L622.9 435.6 L622.3 435.6 L621.7 435.6 L621.1 435.6 L620.5 435.6 L619.9 435.6 L619.3 435.6 L618.7 435.6 L618.1 435.6 L617.5 435.6 L616.9 435.6 L616.3 435.6 L615.7 435.6 L615.1 435.6 L614.5 435.6 L613.9 435.6 L613.3 435.6 L612.7 435.6 L612.1 435.6 L611.5 435.6 L610.9 435.6 L610.3 435.6 L609.7 435.6 L609.1 435.6 L608.5 435.6 L607.9 435.6 L607.3 435.6 L606.7 435.6 L606.1 435.6 L605.5 435.6 L604.9 435.6 L604.3 435.6 L603.7 435.6 L603.1 435.6 L602.5 435.6 L601.9 435.6 L601.3 435.6 L600.7 435.6 L600.1 435.6 L599.5 435.6 L598.9 435.6 L598.3 435.6 L597.7 435.6 L597.1 435.6 L596.5 435.6 L595.9 435.6 L595.3 435.6 L594.7 435.6 L594.1 435.6 L593.5 435.6 L592.9 435.6 L592.3 435.6 L591.7 435.6 L591.1 435.6 L590.5 435.6 L589.9 435.6 L589.3 435.6 L588.7 435.6 L588.1 435.6 L587.5 435.6 L586.9 435.6 L586.3 435.6 L585.7 435.6 L585.1 435.6 L584.5 435.6 L583.9 435.6 L583.3 435.6 L582.7 435.6 L582.1 435.6 L581.5 435.6 L580.9 435.6 L580.3 435.6 L579.7 435.6 L579.1 435.6 L578.5 435.6 L577.9 435.6 L577.3 435.6 L576.7 435.6 L576.1 435.6 L575.5 435.6 L574.9 435.6 L574.3 435.6 L573.7 435.6 L573.1 435.6 L572.5 435.6 L571.9 435.6 L571.3 435.6 L570.7 435.6 L570.1 435.6 Z" fill="#8ab8ff"/></svg><div class="t" style="left:-1832px;width:2400px;text-align:right;top:376.62px;font-size:21.2px;color:#b8b8c4;transform:scale(0.25,0.25);transform-origin:100% 0;">1.50 GiB</div><div class="t" style="left:-1832px;width:2400px;text-align:right;top:394.62px;font-size:21.2px;color:#b8b8c4;transform:scale(0.25,0.25);transform-origin:100% 0;">1 GiB</div><div class="t" style="left:-1832px;width:2400px;text-align:right;top:413.62px;font-size:21.2px;color:#b8b8c4;transform:scale(0.25,0.25);transform-origin:100% 0;">512 MiB</div><div class="t" style="left:-1832px;width:2400px;text-align:right;top:432.92px;font-size:21.2px;color:#b8b8c4;transform:scale(0.25,0.25);transform-origin:100% 0;">0 B</div><div class="t" style="left:-597.6px;width:2400px;text-align:center;top:438.97px;font-size:22.4px;color:#b8b8c4;transform:scale(0.25,0.25);transform-origin:50% 0;">03/15 00:00</div><div class="t" style="left:-526.2px;width:2400px;text-align:center;top:438.97px;font-size:22.4px;color:#b8b8c4;transform:scale(0.25,0.25);transform-origin:50% 0;">03/16 00:00</div><div class="t" style="left:-454.7px;width:2400px;text-align:center;top:438.97px;font-size:22.4px;color:#b8b8c4;transform:scale(0.25,0.25);transform-origin:50% 0;">03/17 00:00</div><div class="t" style="left:-383.1px;width:2400px;text-align:center;top:438.97px;font-size:22.4px;color:#b8b8c4;transform:scale(0.25,0.25);transform-origin:50% 0;">03/18 00:00</div><div class="t" style="left:-311.6px;width:2400px;text-align:center;top:438.97px;font-size:22.4px;color:#b8b8c4;transform:scale(0.25,0.25);transform-origin:50% 0;">03/19 00:00</div><div class="t" style="left:-240.2px;width:2400px;text-align:center;top:438.97px;font-size:22.4px;color:#b8b8c4;transform:scale(0.25,0.25);transform-origin:50% 0;">03/20 00:00</div><div class="t" style="left:-168.8px;width:2400px;text-align:center;top:438.97px;font-size:22.4px;color:#b8b8c4;transform:scale(0.25,0.25);transform-origin:50% 0;">03/21 00:00</div><svg class="s" style="left:547.4px;top:450.2px;" width="7" height="1.8" viewBox="0 0 7 1.8"><rect x="0" y="0" width="6.3" height="1.7" rx="0.8" fill="#73bf69"/></svg><div class="t" style="left:557px;top:448.2px;font-size:23px;color:#b8b8c4;transform:scale(0.25,0.25);transform-origin:0 0;">database-cluster-1</div><svg class="s" style="left:608.8px;top:450.2px;" width="7" height="1.8" viewBox="0 0 7 1.8"><rect x="0" y="0" width="6.3" height="1.7" rx="0.8" fill="#f2cc0c"/></svg><div class="t" style="left:618.4px;top:448.2px;font-size:23px;color:#b8b8c4;transform:scale(0.25,0.25);transform-origin:0 0;">database-cluster-2</div><svg class="s" style="left:670.2px;top:450.2px;" width="7" height="1.8" viewBox="0 0 7 1.8"><rect x="0" y="0" width="6.3" height="1.7" rx="0.8" fill="#8ab8ff"/></svg><div class="t" style="left:679.8px;top:448.2px;font-size:23px;color:#b8b8c4;transform:scale(0.25,0.25);transform-origin:0 0;">database-cluster-3</div></div>
</body></html>
